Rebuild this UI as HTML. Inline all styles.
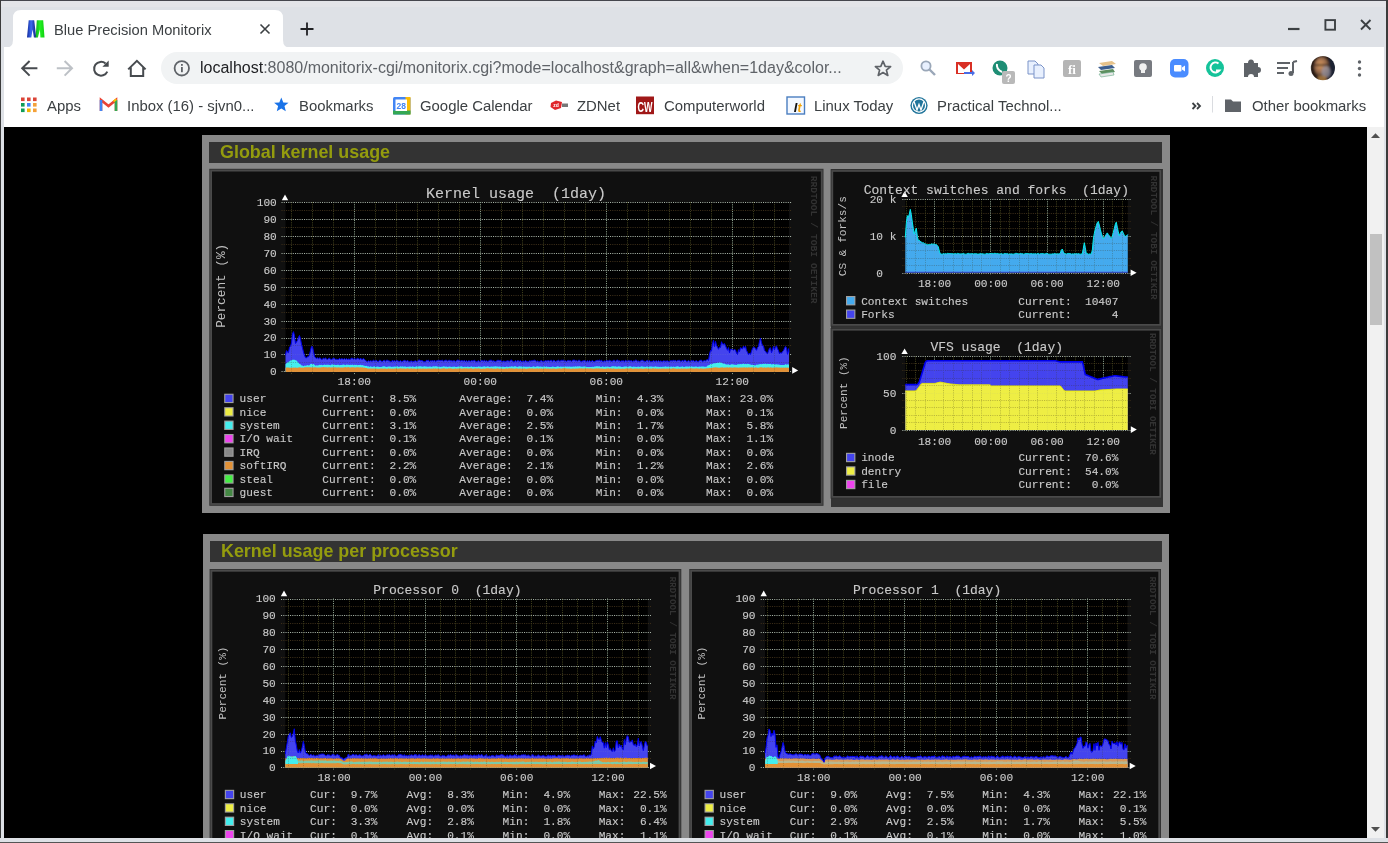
<!DOCTYPE html>
<html><head><meta charset="utf-8"><title>Blue Precision Monitorix</title>
<style>html,body{margin:0;padding:0;width:1388px;height:843px;overflow:hidden;position:relative;background:#dee1e6} svg,div{will-change:transform}</style>
</head><body>
<div style="position:absolute;left:0;top:0;width:1388px;height:843px;background:#dee1e6"></div>
<div style="position:absolute;left:0;top:1px;width:1388px;height:5.5px;background:#e3e4e8"></div>
<div style="position:absolute;left:0;top:0;width:1388px;height:1px;background:#45464d"></div>
<div style="position:absolute;left:0;top:0;width:1px;height:843px;background:#3b3b3b"></div>
<div style="position:absolute;left:1386px;top:0;width:2px;height:843px;background:#3b3b3b"></div>
<div style="position:absolute;left:4px;top:47px;width:1380px;height:80px;background:#ffffff"></div>
<svg style="position:absolute;left:0;top:0" width="300" height="48" viewBox="0 0 300 48">
<path d="M5 48 Q13 48 13 40 L13 18 Q13 10 21 10 L275 10 Q283 10 283 18 L283 40 Q283 48 291 48 Z" fill="#ffffff"/>
</svg>
<svg style="position:absolute;left:0;top:0" width="60" height="48" viewBox="0 0 60 48">
<defs><linearGradient id="mb" x1="0" y1="0" x2="1" y2="0"><stop offset="0" stop-color="#142a9a"/><stop offset="0.45" stop-color="#3a6af0"/><stop offset="1" stop-color="#102080"/></linearGradient>
<linearGradient id="mg" x1="0" y1="0" x2="1" y2="0"><stop offset="0" stop-color="#10b020"/><stop offset="0.5" stop-color="#22f022"/><stop offset="1" stop-color="#10d010"/></linearGradient></defs>
<path d="M28.7 20.2 L34.2 20.2 L36.2 37.5 L33.9 37.5 L32.6 29.5 L31.3 37.5 L27 37.5 Z" fill="url(#mb)"/>
<path d="M36.8 20.2 L43.2 20.2 L44.5 37.5 L40.4 37.5 L39.9 29.5 L37.9 37.5 L35.6 37.5 Z" fill="url(#mg)"/>
</svg>
<div style="position:absolute;left:54px;top:21.8px;font:14.7px 'Liberation Sans',sans-serif;color:#3c4043;white-space:nowrap">Blue Precision Monitorix</div>
<svg style="position:absolute;left:258px;top:22px" width="14" height="14" viewBox="0 0 14 14">
<path d="M2.5 2.5 L11.5 11.5 M11.5 2.5 L2.5 11.5" stroke="#3c4043" stroke-width="1.6"/></svg>
<svg style="position:absolute;left:299px;top:21px" width="16" height="16" viewBox="0 0 16 16">
<path d="M8 1.5 L8 14.5 M1.5 8 L14.5 8" stroke="#202124" stroke-width="1.8"/></svg>
<svg style="position:absolute;left:1280px;top:12px" width="100" height="26" viewBox="0 0 100 26">
<path d="M8 17 L19.5 17" stroke="#3c4043" stroke-width="2.2"/>
<rect x="45.4" y="8.1" width="9.6" height="9.6" fill="none" stroke="#3c4043" stroke-width="1.9"/>
<path d="M81 8 L90.5 17.5 M90.5 8 L81 17.5" stroke="#3c4043" stroke-width="1.9"/>
</svg>
<svg style="position:absolute;left:14px;top:54px" width="140" height="30" viewBox="0 0 140 30">
<g fill="none" stroke-width="2" stroke-linecap="butt">
<path d="M23.4 14.3 L8.5 14.3 M15.6 7 L8.2 14.3 L15.6 21.6" stroke="#474b4f"/>
<path d="M42.8 14.3 L57.7 14.3 M50.6 7 L58 14.3 L50.6 21.6" stroke="#bdc1c6"/>
</g>
<path d="M93.3 17.6 A6.9 6.9 0 1 1 91.6 9.6" fill="none" stroke="#474b4f" stroke-width="2"/>
<path d="M94.7 6.4 L94.7 12.8 L88.4 12.8 Z" fill="#474b4f"/>
<path d="M116.8 13.5 L116.8 22 L129.2 22 L129.2 13.5 M114.2 15.4 L122.9 6.8 L131.6 15.4" fill="none" stroke="#474b4f" stroke-width="2" stroke-linejoin="miter"/>
</svg>
<div style="position:absolute;left:161px;top:52px;width:742px;height:32px;border-radius:16px;background:#f1f3f4"></div>
<svg style="position:absolute;left:172px;top:59px" width="20" height="20" viewBox="0 0 20 20">
<circle cx="9.8" cy="9.3" r="7.2" fill="none" stroke="#5f6368" stroke-width="1.8"/>
<rect x="9" y="8" width="1.8" height="5.2" fill="#5f6368"/><rect x="9" y="5" width="1.8" height="1.8" fill="#5f6368"/>
</svg>
<div style="position:absolute;left:200px;top:58.8px;font:16.0px 'Liberation Sans',sans-serif;color:#5f6368;white-space:nowrap"><span style="color:#202124">localhost</span>:8080/monitorix-cgi/monitorix.cgi?mode=localhost&amp;graph=all&amp;when=1day&amp;color...</div>
<svg style="position:absolute;left:873px;top:59px" width="20" height="20" viewBox="0 0 20 20">
<path d="M10 2.2 L12.2 7.3 L17.6 7.6 L13.4 11.1 L14.8 16.4 L10 13.5 L5.2 16.4 L6.6 11.1 L2.4 7.6 L7.8 7.3 Z" fill="none" stroke="#5f6368" stroke-width="1.7" stroke-linejoin="round"/>
</svg>
<svg style="position:absolute;left:910px;top:52px" width="470" height="34" viewBox="910 52 470 34">
<!-- search -->
<circle cx="926" cy="66" r="4.6" fill="#e8f0fe" stroke="#9aa7b8" stroke-width="1.8"/>
<path d="M929.5 69.5 L935 75" stroke="#9aa7b8" stroke-width="2.4"/>
<!-- gmail red -->
<rect x="956" y="62" width="16" height="12" fill="#d93025"/>
<path d="M958 64 L964 69.5 L970 64 L970 73 L958 73 Z" fill="#fff"/>
<path d="M964 72 L972 72 L972 70 L975 73 L972 76 L972 74 L964 74 Z" fill="#4a6de5"/>
<!-- phone green -->
<circle cx="1000" cy="68" r="7.5" fill="#1e8e75"/>
<path d="M997 64 Q996 69 1002 72" stroke="#fff" stroke-width="2" fill="none"/>
<rect x="1002" y="71" width="13" height="13" rx="2" fill="#b9b9b9"/>
<text x="1008.5" y="81.5" font-family="Liberation Sans" font-size="10" font-weight="bold" fill="#fff" text-anchor="middle">?</text>
<!-- copy -->
<path d="M1028 61 L1035 61 L1038 64 L1038 74 L1028 74 Z" fill="#e8f0fe" stroke="#7b93c8" stroke-width="1"/>
<path d="M1034 65 L1041 65 L1044 68 L1044 78 L1034 78 Z" fill="#e8f0fe" stroke="#7b93c8" stroke-width="1"/>
<!-- fi gray -->
<rect x="1063" y="60" width="18" height="17" rx="2" fill="#b5b5b5"/>
<text x="1072" y="73.5" font-family="Liberation Serif" font-size="13" font-weight="bold" fill="#fff" text-anchor="middle">fi</text>
<!-- books -->
<path d="M1099 63 L1112 61 L1116 64 L1103 66 Z" fill="#e6c28a"/>
<path d="M1098 67 L1112 65 L1115 68 L1101 70 Z" fill="#3d5f8f"/>
<path d="M1099 71 L1113 69 L1115 72 L1102 74 Z" fill="#5d8f5f"/>
<path d="M1099 74 L1113 72 L1114 75 L1101 77 Z" fill="#e8e8e8" stroke="#6a8" stroke-width="0.6"/>
<!-- keep -->
<rect x="1134" y="60" width="18" height="17" rx="2" fill="#777a80"/>
<circle cx="1143" cy="67" r="3.8" fill="#f1f1f1"/>
<rect x="1141" y="70" width="4" height="3" fill="#f1f1f1"/>
<!-- zoom -->
<rect x="1170" y="59" width="18.5" height="18.5" rx="5" fill="#4a8cff"/>
<rect x="1174" y="65" width="7.5" height="6.5" rx="1" fill="#fff"/>
<path d="M1182 67.5 L1185 65.5 L1185 71.5 L1182 69.5 Z" fill="#fff"/>
<!-- grammarly -->
<circle cx="1215" cy="68" r="9" fill="#15c39a"/>
<path d="M1218.5 63.5 A5 5 0 1 0 1219.5 70.5 L1216 70.5" fill="none" stroke="#fff" stroke-width="2"/>
<!-- puzzle -->
<path d="M1244 63 L1248 63 Q1248 59.5 1251 59.5 Q1254 59.5 1254 63 L1258 63 L1258 67 Q1261 67 1261 70 Q1261 73 1258 73 L1258 77 L1254 77 Q1254 74 1251 74 Q1248 74 1248 77 L1244 77 Z" fill="#5f6368"/>
<!-- queue -->
<path d="M1277 63 L1290 63 M1277 68 L1288 68 M1277 73 L1284 73" stroke="#5f6368" stroke-width="2"/>
<path d="M1293 62 L1297 61 M1293 62 L1293 73" stroke="#5f6368" stroke-width="2"/>
<circle cx="1291" cy="73.5" r="2.5" fill="#5f6368"/>
<!-- avatar -->
<defs><radialGradient id="av" cx="0.42" cy="0.4" r="0.55"><stop offset="0" stop-color="#d8985a"/><stop offset="0.6" stop-color="#a07050"/><stop offset="1" stop-color="#60452f"/></radialGradient>
<clipPath id="avc"><circle cx="1322.9" cy="68.1" r="12.1"/></clipPath><filter id="avb" x="-0.2" y="-0.2" width="1.4" height="1.4"><feGaussianBlur stdDeviation="0.9"/></filter></defs>
<g clip-path="url(#avc)"><g filter="url(#avb)">
<rect x="1310" y="55" width="26" height="26" fill="#2a1c18"/>
<rect x="1329" y="55" width="8" height="26" fill="#1c2030"/>
<ellipse cx="1321.8" cy="67" rx="7.6" ry="10" fill="url(#av)"/>
<ellipse cx="1326" cy="72" rx="4.5" ry="6" fill="#9a98a8" opacity="0.7"/>
<path d="M1315 65.3 L1329 65" stroke="#3a2a22" stroke-width="1.4"/>
<rect x="1318" y="76" width="8" height="6" fill="#b08040" opacity="0.8"/>
</g></g>
<!-- menu dots -->
<circle cx="1359.5" cy="62" r="1.7" fill="#5f6368"/><circle cx="1359.5" cy="68.5" r="1.7" fill="#5f6368"/><circle cx="1359.5" cy="75" r="1.7" fill="#5f6368"/>
</svg>
<div style="position:absolute;left:46.5px;top:98px;font:14.9px 'Liberation Sans',sans-serif;color:#3c4043;white-space:nowrap">Apps</div>
<div style="position:absolute;left:126.6px;top:98px;font:14.9px 'Liberation Sans',sans-serif;color:#3c4043;white-space:nowrap">Inbox (16) - sjvn0...</div>
<div style="position:absolute;left:299.3px;top:98px;font:14.9px 'Liberation Sans',sans-serif;color:#3c4043;white-space:nowrap">Bookmarks</div>
<div style="position:absolute;left:419.9px;top:98px;font:14.9px 'Liberation Sans',sans-serif;color:#3c4043;white-space:nowrap">Google Calendar</div>
<div style="position:absolute;left:576.8px;top:98px;font:14.9px 'Liberation Sans',sans-serif;color:#3c4043;white-space:nowrap">ZDNet</div>
<div style="position:absolute;left:663.7px;top:98px;font:14.9px 'Liberation Sans',sans-serif;color:#3c4043;white-space:nowrap">Computerworld</div>
<div style="position:absolute;left:813.9px;top:98px;font:14.9px 'Liberation Sans',sans-serif;color:#3c4043;white-space:nowrap">Linux Today</div>
<div style="position:absolute;left:937.3px;top:98px;font:14.9px 'Liberation Sans',sans-serif;color:#3c4043;white-space:nowrap">Practical Technol...</div>
<div style="position:absolute;left:1251.7px;top:98px;font:14.9px 'Liberation Sans',sans-serif;color:#3c4043;white-space:nowrap">Other bookmarks</div>
<svg style="position:absolute;left:0;top:88px" width="1388" height="38" viewBox="0 88 1388 38">
<!-- apps grid -->
<g>
<rect x="21" y="97.5" width="3.6" height="3.6" fill="#db4437"/><rect x="27" y="97.5" width="3.6" height="3.6" fill="#db4437"/><rect x="33" y="97.5" width="3.6" height="3.6" fill="#db4437"/>
<rect x="21" y="103" width="3.6" height="3.6" fill="#0f9d58"/><rect x="27" y="103" width="3.6" height="3.6" fill="#4285f4"/><rect x="33" y="103" width="3.6" height="3.6" fill="#f4a13a"/>
<rect x="21" y="108.5" width="3.6" height="3.6" fill="#0f9d58"/><rect x="27" y="108.5" width="3.6" height="3.6" fill="#f4b400"/><rect x="33" y="108.5" width="3.6" height="3.6" fill="#f4a13a"/>
</g>
<!-- gmail M -->
<path d="M101 111 L101 100 L108.5 106 L116 100 L116 111" fill="none" stroke="#ea4335" stroke-width="2.6" stroke-linejoin="miter"/>
<path d="M101 100 L101 111" stroke="#4285f4" stroke-width="2.6"/><path d="M116 100 L116 111" stroke="#34a853" stroke-width="2.6"/>
<path d="M113.5 101.5 L116.3 99.2" stroke="#fbbc04" stroke-width="2"/>
<!-- star -->
<path d="M281.3 97.5 L283.3 102.4 L288.5 102.7 L284.5 106 L285.8 111.2 L281.3 108.4 L276.8 111.2 L278.1 106 L274.1 102.7 L279.3 102.4 Z" fill="#1a73e8"/>
<!-- calendar -->
<rect x="393" y="97" width="17.5" height="17.5" rx="1.5" fill="#4285f4"/>
<rect x="405.5" y="97" width="5" height="17.5" fill="#fbbc04"/>
<rect x="393" y="110.5" width="17.5" height="4" fill="#34a853"/>
<rect x="395.5" y="99.5" width="11.5" height="11.5" fill="#fff"/>
<text x="401.3" y="109.3" font-family="Liberation Sans" font-size="8.5" font-weight="bold" fill="#4285f4" text-anchor="middle">28</text>
<!-- zdnet -->
<path d="M551 103 L556 100.5 L562 102 L561 108 L555 110 L550.5 107 Z" fill="#e0262b"/>
<text x="556" y="106.8" font-family="Liberation Sans" font-size="5" font-weight="bold" fill="#fff" text-anchor="middle">zd</text>
<path d="M562 103.5 L568 103.5 L568 107 L562 107 Z" fill="#777"/>
<!-- CW -->
<rect x="636" y="96.5" width="18" height="17.7" fill="#a01818"/>
<text x="645" y="111.8" font-family="Liberation Sans" font-size="14.5" font-weight="bold" fill="#fff" text-anchor="middle" textLength="15" lengthAdjust="spacingAndGlyphs">CW</text>
<!-- linux today -->
<rect x="787" y="97" width="17.5" height="17" fill="#f3f8ff" stroke="#4a7ec0" stroke-width="1.4"/>
<text x="795.5" y="111.5" font-family="Liberation Sans" font-size="13" font-weight="bold" font-style="italic" fill="#111" text-anchor="middle">I</text>
<text x="799.5" y="111.5" font-family="Liberation Sans" font-size="12" font-weight="bold" font-style="italic" fill="#f5a300" text-anchor="middle">t</text>
<!-- wordpress -->
<circle cx="919" cy="105.5" r="8.6" fill="#21759b"/>
<circle cx="919" cy="105.5" r="6.6" fill="none" stroke="#fff" stroke-width="1.2"/>
<path d="M914 101.5 L917 110 L919 104.5 L921 110 L924 101.5" fill="none" stroke="#fff" stroke-width="1.3"/>
<!-- chevrons -->
<path d="M1192.5 103 L1195.5 106 L1192.5 109 M1197 103 L1200 106 L1197 109" fill="none" stroke="#3c4043" stroke-width="1.8"/>
<rect x="1212" y="96" width="1" height="16.5" fill="#dadce0"/>
<!-- folder -->
<path d="M1225 99.5 L1231 99.5 L1233 101.5 L1241 101.5 L1241 112 L1225 112 Z" fill="#5f6368"/>
</svg>
<div style="position:absolute;left:4px;top:127px;width:1363px;height:711px;background:#000"></div>
<div style="position:absolute;left:1367px;top:127px;width:17px;height:711px;background:#f1f1f1"></div>
<div style="position:absolute;left:1369.5px;top:234px;width:11.5px;height:91px;background:#c1c1c1"></div>
<svg style="position:absolute;left:1367px;top:127px" width="17" height="711" viewBox="0 0 17 711"><path d="M4 11 L8.5 6.3 L13 11Z" fill="#505050"/><path d="M4 700 L8.5 704.8 L13 700Z" fill="#505050"/></svg>
<div style="position:absolute;left:202px;top:135px;width:967.5px;height:378px;background:#888888"></div>
<div style="position:absolute;left:209px;top:142px;width:953px;height:21px;background:#333333"></div>
<div style="position:absolute;left:830.5px;top:168.5px;width:331.5px;height:337.5px;background:#333333"></div>
<div style="position:absolute;left:219.5px;top:141.5px;font:bold 17.9px 'Liberation Sans',sans-serif;color:#949c0e;white-space:nowrap;line-height:21px">Global kernel usage</div>
<div style="position:absolute;left:203px;top:534px;width:965.5px;height:304px;background:#888888"></div>
<div style="position:absolute;left:209.7px;top:541px;width:951.7px;height:20.7px;background:#333333"></div>
<div style="position:absolute;left:221px;top:540.5px;font:bold 17.9px 'Liberation Sans',sans-serif;color:#949c0e;white-space:nowrap;line-height:21px">Kernel usage per processor</div>
<svg width="1388" height="843" viewBox="0 0 1388 843" font-family="'Liberation Mono',monospace" style="position:absolute;left:0;top:0;white-space:pre">
<defs><clipPath id="ck"><rect x="0" y="127" width="1367" height="711"/></clipPath></defs>
<defs><clipPath id="ak"><path d="M285.50 371.90 L285.50 355.08 L286.50 350.58 L287.50 352.11 L288.50 352.64 L289.50 347.02 L290.50 346.14 L291.50 342.97 L292.50 334.02 L293.50 331.63 L294.50 335.91 L295.50 343.48 L296.50 341.90 L297.50 340.33 L298.50 337.31 L299.50 335.43 L300.50 339.02 L301.50 344.20 L302.50 348.14 L303.50 352.04 L304.50 355.43 L305.50 357.61 L306.50 357.91 L307.50 356.69 L308.50 356.70 L309.50 354.71 L310.50 350.42 L311.50 346.58 L312.50 346.81 L313.50 351.39 L314.50 356.43 L315.50 357.66 L316.50 358.41 L317.50 357.79 L318.50 358.71 L319.50 357.88 L320.50 358.13 L321.50 359.57 L322.50 359.22 L323.50 358.04 L324.50 358.79 L325.50 357.93 L326.50 358.92 L327.50 359.47 L328.50 358.53 L329.50 358.28 L330.50 359.15 L331.50 359.46 L332.50 359.05 L333.50 357.99 L334.50 358.34 L335.50 359.42 L336.50 359.21 L337.50 359.46 L338.50 359.53 L339.50 358.29 L340.50 359.34 L341.50 358.70 L342.50 358.89 L343.50 359.33 L344.50 358.42 L345.50 359.44 L346.50 358.58 L347.50 359.47 L348.50 358.96 L349.50 359.32 L350.50 359.22 L351.50 358.04 L352.50 358.33 L353.50 359.18 L354.50 358.20 L355.50 359.34 L356.50 359.04 L357.50 358.26 L358.50 358.63 L359.50 359.55 L360.50 358.05 L361.50 359.36 L362.50 359.29 L363.50 358.42 L364.50 359.51 L365.50 360.25 L366.50 361.30 L367.50 361.61 L368.50 360.78 L369.50 361.35 L370.50 360.74 L371.50 361.13 L372.50 360.99 L373.50 360.14 L374.50 360.94 L375.50 360.79 L376.50 360.30 L377.50 361.45 L378.50 361.50 L379.50 360.22 L380.50 360.38 L381.50 361.34 L382.50 361.44 L383.50 360.51 L384.50 360.17 L385.50 361.43 L386.50 360.15 L387.50 360.27 L388.50 360.74 L389.50 361.05 L390.50 361.58 L391.50 361.69 L392.50 360.13 L393.50 361.36 L394.50 360.57 L395.50 361.33 L396.50 360.37 L397.50 360.75 L398.50 361.26 L399.50 361.46 L400.50 360.54 L401.50 361.64 L402.50 361.37 L403.50 360.81 L404.50 360.32 L405.50 360.72 L406.50 361.29 L407.50 360.21 L408.50 361.42 L409.50 361.73 L410.50 361.31 L411.50 361.01 L412.50 361.66 L413.50 361.46 L414.50 361.14 L415.50 360.79 L416.50 361.54 L417.50 361.15 L418.50 360.25 L419.50 360.10 L420.50 360.65 L421.50 360.59 L422.50 360.77 L423.50 361.52 L424.50 361.70 L425.50 361.73 L426.50 360.22 L427.50 360.58 L428.50 360.13 L429.50 361.72 L430.50 360.68 L431.50 360.95 L432.50 360.53 L433.50 361.22 L434.50 360.07 L435.50 361.63 L436.50 360.84 L437.50 360.51 L438.50 360.24 L439.50 360.51 L440.50 360.57 L441.50 360.42 L442.50 360.21 L443.50 361.17 L444.50 360.60 L445.50 360.24 L446.50 360.29 L447.50 361.06 L448.50 360.42 L449.50 360.30 L450.50 360.79 L451.50 360.70 L452.50 361.11 L453.50 360.78 L454.50 360.73 L455.50 361.62 L456.50 360.68 L457.50 360.08 L458.50 360.27 L459.50 360.53 L460.50 361.10 L461.50 360.52 L462.50 360.78 L463.50 361.02 L464.50 360.34 L465.50 361.62 L466.50 360.49 L467.50 361.71 L468.50 360.74 L469.50 360.95 L470.50 361.37 L471.50 360.58 L472.50 360.92 L473.50 360.72 L474.50 360.20 L475.50 361.33 L476.50 361.74 L477.50 361.25 L478.50 360.61 L479.50 361.42 L480.50 361.47 L481.50 360.23 L482.50 360.64 L483.50 361.01 L484.50 360.25 L485.50 361.21 L486.50 360.63 L487.50 361.42 L488.50 361.03 L489.50 360.40 L490.50 360.21 L491.50 360.27 L492.50 361.11 L493.50 360.77 L494.50 361.23 L495.50 361.53 L496.50 360.92 L497.50 360.35 L498.50 360.33 L499.50 360.56 L500.50 360.15 L501.50 361.29 L502.50 361.47 L503.50 361.00 L504.50 361.29 L505.50 361.40 L506.50 361.06 L507.50 360.70 L508.50 360.93 L509.50 361.23 L510.50 360.34 L511.50 360.10 L512.50 361.00 L513.50 361.63 L514.50 361.71 L515.50 360.28 L516.50 361.69 L517.50 360.56 L518.50 360.80 L519.50 361.24 L520.50 360.42 L521.50 361.73 L522.50 361.53 L523.50 360.99 L524.50 361.72 L525.50 360.36 L526.50 361.36 L527.50 361.52 L528.50 361.68 L529.50 360.70 L530.50 361.01 L531.50 360.70 L532.50 360.65 L533.50 360.40 L534.50 360.14 L535.50 360.60 L536.50 361.42 L537.50 360.96 L538.50 361.46 L539.50 361.74 L540.50 360.96 L541.50 360.55 L542.50 361.46 L543.50 361.30 L544.50 361.18 L545.50 360.58 L546.50 360.88 L547.50 360.72 L548.50 360.48 L549.50 361.09 L550.50 360.42 L551.50 360.23 L552.50 361.61 L553.50 360.18 L554.50 360.54 L555.50 361.54 L556.50 360.99 L557.50 360.70 L558.50 360.22 L559.50 361.12 L560.50 360.80 L561.50 360.27 L562.50 360.41 L563.50 360.16 L564.50 360.98 L565.50 360.66 L566.50 361.41 L567.50 360.54 L568.50 360.38 L569.50 360.68 L570.50 360.55 L571.50 361.40 L572.50 360.24 L573.50 360.10 L574.50 360.11 L575.50 360.85 L576.50 360.42 L577.50 361.22 L578.50 360.22 L579.50 360.31 L580.50 361.17 L581.50 361.62 L582.50 361.01 L583.50 360.83 L584.50 360.46 L585.50 360.94 L586.50 361.71 L587.50 360.39 L588.50 361.65 L589.50 360.41 L590.50 361.47 L591.50 361.19 L592.50 360.43 L593.50 361.52 L594.50 361.51 L595.50 360.89 L596.50 360.54 L597.50 360.34 L598.50 360.59 L599.50 360.16 L600.50 360.93 L601.50 360.16 L602.50 361.61 L603.50 361.39 L604.50 360.87 L605.50 361.27 L606.50 360.53 L607.50 360.68 L608.50 360.88 L609.50 360.33 L610.50 360.81 L611.50 361.23 L612.50 361.12 L613.50 360.33 L614.50 360.24 L615.50 361.41 L616.50 360.32 L617.50 360.12 L618.50 360.87 L619.50 360.79 L620.50 361.42 L621.50 360.85 L622.50 360.91 L623.50 360.74 L624.50 361.71 L625.50 360.12 L626.50 360.89 L627.50 361.08 L628.50 360.41 L629.50 360.81 L630.50 360.93 L631.50 360.59 L632.50 361.65 L633.50 360.85 L634.50 361.06 L635.50 360.14 L636.50 360.20 L637.50 361.31 L638.50 360.96 L639.50 361.55 L640.50 361.03 L641.50 360.38 L642.50 360.24 L643.50 360.95 L644.50 361.22 L645.50 361.44 L646.50 360.72 L647.50 360.20 L648.50 361.54 L649.50 360.44 L650.50 361.72 L651.50 361.43 L652.50 361.38 L653.50 360.60 L654.50 361.22 L655.50 361.16 L656.50 360.71 L657.50 361.58 L658.50 360.52 L659.50 361.55 L660.50 360.90 L661.50 361.34 L662.50 361.43 L663.50 360.86 L664.50 361.02 L665.50 361.13 L666.50 361.06 L667.50 360.87 L668.50 361.49 L669.50 361.41 L670.50 360.69 L671.50 360.68 L672.50 360.86 L673.50 360.32 L674.50 360.73 L675.50 360.31 L676.50 361.37 L677.50 360.51 L678.50 360.39 L679.50 360.23 L680.50 361.23 L681.50 361.23 L682.50 360.20 L683.50 361.39 L684.50 360.07 L685.50 360.26 L686.50 361.53 L687.50 361.36 L688.50 360.53 L689.50 361.32 L690.50 361.60 L691.50 360.35 L692.50 361.05 L693.50 360.43 L694.50 361.55 L695.50 361.08 L696.50 360.60 L697.50 361.73 L698.50 361.42 L699.50 360.61 L700.50 360.22 L701.50 360.12 L702.50 361.56 L703.50 360.91 L704.50 360.48 L705.50 360.91 L706.50 359.97 L707.50 359.54 L708.50 360.56 L709.50 354.34 L710.50 350.45 L711.50 350.97 L712.50 343.77 L713.50 340.31 L714.50 346.76 L715.50 341.27 L716.50 345.32 L717.50 347.15 L718.50 349.30 L719.50 347.09 L720.50 347.38 L721.50 341.73 L722.50 344.11 L723.50 344.18 L724.50 343.62 L725.50 345.71 L726.50 348.19 L727.50 350.34 L728.50 347.60 L729.50 352.76 L730.50 349.25 L731.50 349.23 L732.50 349.53 L733.50 350.19 L734.50 349.48 L735.50 350.03 L736.50 353.05 L737.50 354.47 L738.50 349.61 L739.50 351.81 L740.50 347.66 L741.50 348.36 L742.50 348.89 L743.50 346.06 L744.50 348.19 L745.50 346.26 L746.50 350.55 L747.50 352.35 L748.50 354.79 L749.50 353.06 L750.50 354.49 L751.50 351.24 L752.50 348.45 L753.50 347.08 L754.50 347.29 L755.50 348.76 L756.50 350.32 L757.50 347.45 L758.50 346.43 L759.50 341.37 L760.50 338.27 L761.50 342.79 L762.50 345.71 L763.50 346.11 L764.50 350.43 L765.50 351.17 L766.50 352.90 L767.50 353.68 L768.50 350.91 L769.50 348.17 L770.50 347.76 L771.50 352.77 L772.50 349.91 L773.50 346.31 L774.50 349.77 L775.50 346.83 L776.50 345.92 L777.50 348.79 L778.50 350.50 L779.50 353.73 L780.50 352.68 L781.50 353.21 L782.50 351.56 L783.50 350.67 L784.50 348.32 L785.50 346.39 L786.50 348.06 L787.50 354.30 L788.50 348.63 L789.00 352.46 L789.00 371.90Z"/></clipPath></defs>
<g clip-path="url(#ck)">
<rect x="209.3" y="168.8" width="614.2" height="337.0" fill="#303030"/>
<rect x="210.20000000000002" y="169.70000000000002" width="612.4000000000001" height="335.2" fill="#4a4a4a"/>
<rect x="212.0" y="171.5" width="608.8000000000001" height="331.6" fill="#101010"/>
<rect x="285.5" y="202.0" width="503.5" height="170.0" fill="#000"/>
<path d="M281.50 362.50H791.50" stroke="#3a2c18" stroke-width="1" stroke-dasharray="1.1 1.15" opacity="1"/>
<path d="M281.50 345.50H791.50" stroke="#3a2c18" stroke-width="1" stroke-dasharray="1.1 1.15" opacity="1"/>
<path d="M281.50 328.50H791.50" stroke="#3a2c18" stroke-width="1" stroke-dasharray="1.1 1.15" opacity="1"/>
<path d="M281.50 312.50H791.50" stroke="#3a2c18" stroke-width="1" stroke-dasharray="1.1 1.15" opacity="1"/>
<path d="M281.50 295.50H791.50" stroke="#3a2c18" stroke-width="1" stroke-dasharray="1.1 1.15" opacity="1"/>
<path d="M281.50 278.50H791.50" stroke="#3a2c18" stroke-width="1" stroke-dasharray="1.1 1.15" opacity="1"/>
<path d="M281.50 261.50H791.50" stroke="#3a2c18" stroke-width="1" stroke-dasharray="1.1 1.15" opacity="1"/>
<path d="M281.50 244.50H791.50" stroke="#3a2c18" stroke-width="1" stroke-dasharray="1.1 1.15" opacity="1"/>
<path d="M281.50 227.50H791.50" stroke="#3a2c18" stroke-width="1" stroke-dasharray="1.1 1.15" opacity="1"/>
<path d="M281.50 210.50H791.50" stroke="#3a2c18" stroke-width="1" stroke-dasharray="1.1 1.15" opacity="1"/>
<path d="M291.50 202.00V375.00" stroke="#3e3e1c" stroke-width="1" stroke-dasharray="1.1 1.15" opacity="1"/>
<path d="M312.50 202.00V375.00" stroke="#3e3e1c" stroke-width="1" stroke-dasharray="1.1 1.15" opacity="1"/>
<path d="M333.50 202.00V375.00" stroke="#3e3e1c" stroke-width="1" stroke-dasharray="1.1 1.15" opacity="1"/>
<path d="M375.50 202.00V375.00" stroke="#3e3e1c" stroke-width="1" stroke-dasharray="1.1 1.15" opacity="1"/>
<path d="M396.50 202.00V375.00" stroke="#3e3e1c" stroke-width="1" stroke-dasharray="1.1 1.15" opacity="1"/>
<path d="M417.50 202.00V375.00" stroke="#3e3e1c" stroke-width="1" stroke-dasharray="1.1 1.15" opacity="1"/>
<path d="M438.50 202.00V375.00" stroke="#3e3e1c" stroke-width="1" stroke-dasharray="1.1 1.15" opacity="1"/>
<path d="M459.50 202.00V375.00" stroke="#3e3e1c" stroke-width="1" stroke-dasharray="1.1 1.15" opacity="1"/>
<path d="M501.50 202.00V375.00" stroke="#3e3e1c" stroke-width="1" stroke-dasharray="1.1 1.15" opacity="1"/>
<path d="M522.50 202.00V375.00" stroke="#3e3e1c" stroke-width="1" stroke-dasharray="1.1 1.15" opacity="1"/>
<path d="M543.50 202.00V375.00" stroke="#3e3e1c" stroke-width="1" stroke-dasharray="1.1 1.15" opacity="1"/>
<path d="M564.50 202.00V375.00" stroke="#3e3e1c" stroke-width="1" stroke-dasharray="1.1 1.15" opacity="1"/>
<path d="M585.50 202.00V375.00" stroke="#3e3e1c" stroke-width="1" stroke-dasharray="1.1 1.15" opacity="1"/>
<path d="M627.50 202.00V375.00" stroke="#3e3e1c" stroke-width="1" stroke-dasharray="1.1 1.15" opacity="1"/>
<path d="M648.50 202.00V375.00" stroke="#3e3e1c" stroke-width="1" stroke-dasharray="1.1 1.15" opacity="1"/>
<path d="M669.50 202.00V375.00" stroke="#3e3e1c" stroke-width="1" stroke-dasharray="1.1 1.15" opacity="1"/>
<path d="M690.50 202.00V375.00" stroke="#3e3e1c" stroke-width="1" stroke-dasharray="1.1 1.15" opacity="1"/>
<path d="M711.50 202.00V375.00" stroke="#3e3e1c" stroke-width="1" stroke-dasharray="1.1 1.15" opacity="1"/>
<path d="M753.50 202.00V375.00" stroke="#3e3e1c" stroke-width="1" stroke-dasharray="1.1 1.15" opacity="1"/>
<path d="M774.50 202.00V375.00" stroke="#3e3e1c" stroke-width="1" stroke-dasharray="1.1 1.15" opacity="1"/>
<path d="M281.50 371.50H791.50" stroke="#a4b0a4" stroke-width="1" stroke-dasharray="1.1 1.15" opacity="1"/>
<path d="M281.50 354.50H791.50" stroke="#a4b0a4" stroke-width="1" stroke-dasharray="1.1 1.15" opacity="1"/>
<path d="M281.50 338.50H791.50" stroke="#a4b0a4" stroke-width="1" stroke-dasharray="1.1 1.15" opacity="1"/>
<path d="M281.50 321.50H791.50" stroke="#a4b0a4" stroke-width="1" stroke-dasharray="1.1 1.15" opacity="1"/>
<path d="M281.50 304.50H791.50" stroke="#a4b0a4" stroke-width="1" stroke-dasharray="1.1 1.15" opacity="1"/>
<path d="M281.50 287.50H791.50" stroke="#a4b0a4" stroke-width="1" stroke-dasharray="1.1 1.15" opacity="1"/>
<path d="M281.50 270.50H791.50" stroke="#a4b0a4" stroke-width="1" stroke-dasharray="1.1 1.15" opacity="1"/>
<path d="M281.50 253.50H791.50" stroke="#a4b0a4" stroke-width="1" stroke-dasharray="1.1 1.15" opacity="1"/>
<path d="M281.50 236.50H791.50" stroke="#a4b0a4" stroke-width="1" stroke-dasharray="1.1 1.15" opacity="1"/>
<path d="M281.50 219.50H791.50" stroke="#a4b0a4" stroke-width="1" stroke-dasharray="1.1 1.15" opacity="1"/>
<path d="M281.50 202.50H791.50" stroke="#a4b0a4" stroke-width="1" stroke-dasharray="1.1 1.15" opacity="1"/>
<path d="M354.50 202.00V375.00" stroke="#8a9e8a" stroke-width="1" stroke-dasharray="1.1 1.15" opacity="1"/>
<path d="M480.50 202.00V375.00" stroke="#8a9e8a" stroke-width="1" stroke-dasharray="1.1 1.15" opacity="1"/>
<path d="M606.50 202.00V375.00" stroke="#8a9e8a" stroke-width="1" stroke-dasharray="1.1 1.15" opacity="1"/>
<path d="M732.50 202.00V375.00" stroke="#8a9e8a" stroke-width="1" stroke-dasharray="1.1 1.15" opacity="1"/>
<path d="M285.50 371.90 L285.50 355.08 L286.50 350.58 L287.50 352.11 L288.50 352.64 L289.50 347.02 L290.50 346.14 L291.50 342.97 L292.50 334.02 L293.50 331.63 L294.50 335.91 L295.50 343.48 L296.50 341.90 L297.50 340.33 L298.50 337.31 L299.50 335.43 L300.50 339.02 L301.50 344.20 L302.50 348.14 L303.50 352.04 L304.50 355.43 L305.50 357.61 L306.50 357.91 L307.50 356.69 L308.50 356.70 L309.50 354.71 L310.50 350.42 L311.50 346.58 L312.50 346.81 L313.50 351.39 L314.50 356.43 L315.50 357.66 L316.50 358.41 L317.50 357.79 L318.50 358.71 L319.50 357.88 L320.50 358.13 L321.50 359.57 L322.50 359.22 L323.50 358.04 L324.50 358.79 L325.50 357.93 L326.50 358.92 L327.50 359.47 L328.50 358.53 L329.50 358.28 L330.50 359.15 L331.50 359.46 L332.50 359.05 L333.50 357.99 L334.50 358.34 L335.50 359.42 L336.50 359.21 L337.50 359.46 L338.50 359.53 L339.50 358.29 L340.50 359.34 L341.50 358.70 L342.50 358.89 L343.50 359.33 L344.50 358.42 L345.50 359.44 L346.50 358.58 L347.50 359.47 L348.50 358.96 L349.50 359.32 L350.50 359.22 L351.50 358.04 L352.50 358.33 L353.50 359.18 L354.50 358.20 L355.50 359.34 L356.50 359.04 L357.50 358.26 L358.50 358.63 L359.50 359.55 L360.50 358.05 L361.50 359.36 L362.50 359.29 L363.50 358.42 L364.50 359.51 L365.50 360.25 L366.50 361.30 L367.50 361.61 L368.50 360.78 L369.50 361.35 L370.50 360.74 L371.50 361.13 L372.50 360.99 L373.50 360.14 L374.50 360.94 L375.50 360.79 L376.50 360.30 L377.50 361.45 L378.50 361.50 L379.50 360.22 L380.50 360.38 L381.50 361.34 L382.50 361.44 L383.50 360.51 L384.50 360.17 L385.50 361.43 L386.50 360.15 L387.50 360.27 L388.50 360.74 L389.50 361.05 L390.50 361.58 L391.50 361.69 L392.50 360.13 L393.50 361.36 L394.50 360.57 L395.50 361.33 L396.50 360.37 L397.50 360.75 L398.50 361.26 L399.50 361.46 L400.50 360.54 L401.50 361.64 L402.50 361.37 L403.50 360.81 L404.50 360.32 L405.50 360.72 L406.50 361.29 L407.50 360.21 L408.50 361.42 L409.50 361.73 L410.50 361.31 L411.50 361.01 L412.50 361.66 L413.50 361.46 L414.50 361.14 L415.50 360.79 L416.50 361.54 L417.50 361.15 L418.50 360.25 L419.50 360.10 L420.50 360.65 L421.50 360.59 L422.50 360.77 L423.50 361.52 L424.50 361.70 L425.50 361.73 L426.50 360.22 L427.50 360.58 L428.50 360.13 L429.50 361.72 L430.50 360.68 L431.50 360.95 L432.50 360.53 L433.50 361.22 L434.50 360.07 L435.50 361.63 L436.50 360.84 L437.50 360.51 L438.50 360.24 L439.50 360.51 L440.50 360.57 L441.50 360.42 L442.50 360.21 L443.50 361.17 L444.50 360.60 L445.50 360.24 L446.50 360.29 L447.50 361.06 L448.50 360.42 L449.50 360.30 L450.50 360.79 L451.50 360.70 L452.50 361.11 L453.50 360.78 L454.50 360.73 L455.50 361.62 L456.50 360.68 L457.50 360.08 L458.50 360.27 L459.50 360.53 L460.50 361.10 L461.50 360.52 L462.50 360.78 L463.50 361.02 L464.50 360.34 L465.50 361.62 L466.50 360.49 L467.50 361.71 L468.50 360.74 L469.50 360.95 L470.50 361.37 L471.50 360.58 L472.50 360.92 L473.50 360.72 L474.50 360.20 L475.50 361.33 L476.50 361.74 L477.50 361.25 L478.50 360.61 L479.50 361.42 L480.50 361.47 L481.50 360.23 L482.50 360.64 L483.50 361.01 L484.50 360.25 L485.50 361.21 L486.50 360.63 L487.50 361.42 L488.50 361.03 L489.50 360.40 L490.50 360.21 L491.50 360.27 L492.50 361.11 L493.50 360.77 L494.50 361.23 L495.50 361.53 L496.50 360.92 L497.50 360.35 L498.50 360.33 L499.50 360.56 L500.50 360.15 L501.50 361.29 L502.50 361.47 L503.50 361.00 L504.50 361.29 L505.50 361.40 L506.50 361.06 L507.50 360.70 L508.50 360.93 L509.50 361.23 L510.50 360.34 L511.50 360.10 L512.50 361.00 L513.50 361.63 L514.50 361.71 L515.50 360.28 L516.50 361.69 L517.50 360.56 L518.50 360.80 L519.50 361.24 L520.50 360.42 L521.50 361.73 L522.50 361.53 L523.50 360.99 L524.50 361.72 L525.50 360.36 L526.50 361.36 L527.50 361.52 L528.50 361.68 L529.50 360.70 L530.50 361.01 L531.50 360.70 L532.50 360.65 L533.50 360.40 L534.50 360.14 L535.50 360.60 L536.50 361.42 L537.50 360.96 L538.50 361.46 L539.50 361.74 L540.50 360.96 L541.50 360.55 L542.50 361.46 L543.50 361.30 L544.50 361.18 L545.50 360.58 L546.50 360.88 L547.50 360.72 L548.50 360.48 L549.50 361.09 L550.50 360.42 L551.50 360.23 L552.50 361.61 L553.50 360.18 L554.50 360.54 L555.50 361.54 L556.50 360.99 L557.50 360.70 L558.50 360.22 L559.50 361.12 L560.50 360.80 L561.50 360.27 L562.50 360.41 L563.50 360.16 L564.50 360.98 L565.50 360.66 L566.50 361.41 L567.50 360.54 L568.50 360.38 L569.50 360.68 L570.50 360.55 L571.50 361.40 L572.50 360.24 L573.50 360.10 L574.50 360.11 L575.50 360.85 L576.50 360.42 L577.50 361.22 L578.50 360.22 L579.50 360.31 L580.50 361.17 L581.50 361.62 L582.50 361.01 L583.50 360.83 L584.50 360.46 L585.50 360.94 L586.50 361.71 L587.50 360.39 L588.50 361.65 L589.50 360.41 L590.50 361.47 L591.50 361.19 L592.50 360.43 L593.50 361.52 L594.50 361.51 L595.50 360.89 L596.50 360.54 L597.50 360.34 L598.50 360.59 L599.50 360.16 L600.50 360.93 L601.50 360.16 L602.50 361.61 L603.50 361.39 L604.50 360.87 L605.50 361.27 L606.50 360.53 L607.50 360.68 L608.50 360.88 L609.50 360.33 L610.50 360.81 L611.50 361.23 L612.50 361.12 L613.50 360.33 L614.50 360.24 L615.50 361.41 L616.50 360.32 L617.50 360.12 L618.50 360.87 L619.50 360.79 L620.50 361.42 L621.50 360.85 L622.50 360.91 L623.50 360.74 L624.50 361.71 L625.50 360.12 L626.50 360.89 L627.50 361.08 L628.50 360.41 L629.50 360.81 L630.50 360.93 L631.50 360.59 L632.50 361.65 L633.50 360.85 L634.50 361.06 L635.50 360.14 L636.50 360.20 L637.50 361.31 L638.50 360.96 L639.50 361.55 L640.50 361.03 L641.50 360.38 L642.50 360.24 L643.50 360.95 L644.50 361.22 L645.50 361.44 L646.50 360.72 L647.50 360.20 L648.50 361.54 L649.50 360.44 L650.50 361.72 L651.50 361.43 L652.50 361.38 L653.50 360.60 L654.50 361.22 L655.50 361.16 L656.50 360.71 L657.50 361.58 L658.50 360.52 L659.50 361.55 L660.50 360.90 L661.50 361.34 L662.50 361.43 L663.50 360.86 L664.50 361.02 L665.50 361.13 L666.50 361.06 L667.50 360.87 L668.50 361.49 L669.50 361.41 L670.50 360.69 L671.50 360.68 L672.50 360.86 L673.50 360.32 L674.50 360.73 L675.50 360.31 L676.50 361.37 L677.50 360.51 L678.50 360.39 L679.50 360.23 L680.50 361.23 L681.50 361.23 L682.50 360.20 L683.50 361.39 L684.50 360.07 L685.50 360.26 L686.50 361.53 L687.50 361.36 L688.50 360.53 L689.50 361.32 L690.50 361.60 L691.50 360.35 L692.50 361.05 L693.50 360.43 L694.50 361.55 L695.50 361.08 L696.50 360.60 L697.50 361.73 L698.50 361.42 L699.50 360.61 L700.50 360.22 L701.50 360.12 L702.50 361.56 L703.50 360.91 L704.50 360.48 L705.50 360.91 L706.50 359.97 L707.50 359.54 L708.50 360.56 L709.50 354.34 L710.50 350.45 L711.50 350.97 L712.50 343.77 L713.50 340.31 L714.50 346.76 L715.50 341.27 L716.50 345.32 L717.50 347.15 L718.50 349.30 L719.50 347.09 L720.50 347.38 L721.50 341.73 L722.50 344.11 L723.50 344.18 L724.50 343.62 L725.50 345.71 L726.50 348.19 L727.50 350.34 L728.50 347.60 L729.50 352.76 L730.50 349.25 L731.50 349.23 L732.50 349.53 L733.50 350.19 L734.50 349.48 L735.50 350.03 L736.50 353.05 L737.50 354.47 L738.50 349.61 L739.50 351.81 L740.50 347.66 L741.50 348.36 L742.50 348.89 L743.50 346.06 L744.50 348.19 L745.50 346.26 L746.50 350.55 L747.50 352.35 L748.50 354.79 L749.50 353.06 L750.50 354.49 L751.50 351.24 L752.50 348.45 L753.50 347.08 L754.50 347.29 L755.50 348.76 L756.50 350.32 L757.50 347.45 L758.50 346.43 L759.50 341.37 L760.50 338.27 L761.50 342.79 L762.50 345.71 L763.50 346.11 L764.50 350.43 L765.50 351.17 L766.50 352.90 L767.50 353.68 L768.50 350.91 L769.50 348.17 L770.50 347.76 L771.50 352.77 L772.50 349.91 L773.50 346.31 L774.50 349.77 L775.50 346.83 L776.50 345.92 L777.50 348.79 L778.50 350.50 L779.50 353.73 L780.50 352.68 L781.50 353.21 L782.50 351.56 L783.50 350.67 L784.50 348.32 L785.50 346.39 L786.50 348.06 L787.50 354.30 L788.50 348.63 L789.00 352.46 L789.00 371.90Z" fill="#4444EE"/>
<path d="M285.50 371.90 L285.50 364.32 L286.50 363.30 L287.50 362.43 L288.50 362.01 L289.50 361.25 L290.50 360.43 L291.50 360.35 L292.50 359.72 L293.50 359.66 L294.50 359.84 L295.50 360.27 L296.50 360.58 L297.50 361.78 L298.50 362.66 L299.50 364.02 L300.50 364.23 L301.50 365.51 L302.50 365.43 L303.50 366.26 L304.50 365.57 L305.50 365.70 L306.50 365.50 L307.50 365.02 L308.50 365.60 L309.50 365.23 L310.50 363.94 L311.50 363.72 L312.50 364.13 L313.50 364.05 L314.50 364.76 L315.50 365.74 L316.50 365.34 L317.50 365.45 L318.50 365.16 L319.50 364.77 L320.50 365.09 L321.50 364.64 L322.50 365.18 L323.50 365.08 L324.50 364.54 L325.50 364.89 L326.50 364.87 L327.50 364.72 L328.50 364.82 L329.50 364.90 L330.50 365.20 L331.50 364.61 L332.50 364.41 L333.50 364.40 L334.50 364.66 L335.50 364.92 L336.50 364.92 L337.50 364.64 L338.50 364.66 L339.50 365.13 L340.50 365.03 L341.50 364.92 L342.50 364.79 L343.50 364.54 L344.50 364.80 L345.50 365.20 L346.50 364.53 L347.50 364.86 L348.50 364.79 L349.50 365.04 L350.50 364.86 L351.50 364.90 L352.50 364.57 L353.50 365.14 L354.50 364.76 L355.50 365.07 L356.50 364.64 L357.50 365.19 L358.50 364.99 L359.50 364.93 L360.50 364.69 L361.50 365.18 L362.50 364.99 L363.50 365.51 L364.50 365.76 L365.50 365.91 L366.50 365.81 L367.50 366.52 L368.50 366.28 L369.50 366.94 L370.50 366.30 L371.50 366.78 L372.50 366.92 L373.50 366.45 L374.50 366.31 L375.50 367.08 L376.50 366.86 L377.50 366.43 L378.50 366.79 L379.50 366.88 L380.50 367.08 L381.50 367.05 L382.50 366.56 L383.50 366.25 L384.50 366.24 L385.50 366.66 L386.50 367.06 L387.50 366.81 L388.50 366.42 L389.50 366.38 L390.50 366.54 L391.50 366.89 L392.50 366.64 L393.50 366.68 L394.50 366.55 L395.50 366.86 L396.50 366.28 L397.50 366.33 L398.50 366.95 L399.50 366.84 L400.50 366.35 L401.50 366.85 L402.50 366.29 L403.50 366.65 L404.50 366.50 L405.50 366.49 L406.50 366.90 L407.50 366.84 L408.50 366.87 L409.50 366.51 L410.50 366.50 L411.50 366.97 L412.50 366.33 L413.50 366.73 L414.50 366.88 L415.50 366.72 L416.50 366.26 L417.50 366.61 L418.50 366.56 L419.50 366.31 L420.50 366.27 L421.50 366.44 L422.50 366.73 L423.50 366.59 L424.50 366.32 L425.50 366.42 L426.50 366.59 L427.50 366.79 L428.50 366.77 L429.50 366.46 L430.50 366.61 L431.50 367.07 L432.50 366.48 L433.50 366.32 L434.50 366.41 L435.50 366.33 L436.50 366.31 L437.50 366.63 L438.50 366.42 L439.50 366.76 L440.50 367.00 L441.50 366.79 L442.50 366.82 L443.50 366.29 L444.50 366.50 L445.50 366.63 L446.50 366.56 L447.50 366.98 L448.50 366.63 L449.50 366.49 L450.50 366.75 L451.50 366.88 L452.50 366.74 L453.50 366.81 L454.50 366.50 L455.50 366.96 L456.50 367.01 L457.50 366.82 L458.50 366.50 L459.50 366.44 L460.50 366.53 L461.50 366.29 L462.50 366.77 L463.50 367.06 L464.50 366.67 L465.50 366.71 L466.50 366.93 L467.50 366.52 L468.50 366.80 L469.50 366.88 L470.50 366.81 L471.50 366.29 L472.50 367.08 L473.50 366.78 L474.50 366.85 L475.50 366.91 L476.50 366.72 L477.50 366.90 L478.50 366.31 L479.50 366.66 L480.50 366.49 L481.50 366.95 L482.50 366.69 L483.50 366.57 L484.50 366.37 L485.50 366.87 L486.50 366.70 L487.50 366.36 L488.50 366.38 L489.50 366.89 L490.50 366.63 L491.50 366.44 L492.50 366.75 L493.50 366.51 L494.50 366.52 L495.50 366.26 L496.50 366.62 L497.50 366.51 L498.50 366.79 L499.50 366.46 L500.50 366.81 L501.50 366.66 L502.50 366.78 L503.50 366.82 L504.50 366.97 L505.50 366.89 L506.50 366.62 L507.50 366.87 L508.50 367.04 L509.50 366.40 L510.50 366.84 L511.50 366.29 L512.50 366.58 L513.50 366.75 L514.50 366.35 L515.50 366.33 L516.50 366.81 L517.50 366.98 L518.50 366.54 L519.50 366.37 L520.50 366.57 L521.50 366.42 L522.50 366.74 L523.50 366.56 L524.50 366.86 L525.50 366.74 L526.50 366.76 L527.50 366.76 L528.50 366.75 L529.50 366.40 L530.50 366.94 L531.50 366.91 L532.50 366.87 L533.50 366.26 L534.50 366.64 L535.50 367.04 L536.50 366.38 L537.50 366.35 L538.50 366.39 L539.50 366.78 L540.50 366.46 L541.50 366.83 L542.50 366.97 L543.50 366.35 L544.50 366.38 L545.50 366.91 L546.50 366.34 L547.50 367.06 L548.50 366.82 L549.50 367.07 L550.50 366.94 L551.50 366.95 L552.50 366.48 L553.50 366.83 L554.50 366.92 L555.50 366.93 L556.50 366.82 L557.50 366.35 L558.50 366.57 L559.50 367.00 L560.50 366.50 L561.50 366.63 L562.50 366.70 L563.50 366.64 L564.50 366.53 L565.50 366.41 L566.50 366.66 L567.50 366.55 L568.50 366.69 L569.50 366.55 L570.50 366.76 L571.50 366.73 L572.50 366.65 L573.50 366.48 L574.50 366.85 L575.50 366.30 L576.50 366.67 L577.50 366.36 L578.50 366.50 L579.50 366.28 L580.50 366.51 L581.50 366.72 L582.50 366.74 L583.50 366.57 L584.50 366.45 L585.50 366.37 L586.50 366.97 L587.50 367.03 L588.50 366.99 L589.50 367.01 L590.50 367.04 L591.50 367.08 L592.50 366.87 L593.50 366.99 L594.50 366.50 L595.50 366.56 L596.50 366.27 L597.50 366.27 L598.50 366.45 L599.50 366.28 L600.50 367.06 L601.50 366.89 L602.50 366.30 L603.50 366.68 L604.50 366.91 L605.50 366.44 L606.50 366.73 L607.50 366.62 L608.50 366.82 L609.50 366.88 L610.50 367.01 L611.50 366.57 L612.50 366.28 L613.50 366.25 L614.50 366.44 L615.50 366.29 L616.50 366.78 L617.50 366.83 L618.50 366.30 L619.50 366.58 L620.50 366.52 L621.50 367.07 L622.50 366.89 L623.50 366.68 L624.50 366.47 L625.50 366.39 L626.50 366.44 L627.50 366.80 L628.50 366.76 L629.50 366.35 L630.50 366.25 L631.50 366.67 L632.50 366.92 L633.50 366.56 L634.50 366.63 L635.50 366.78 L636.50 366.89 L637.50 366.76 L638.50 366.57 L639.50 366.98 L640.50 366.63 L641.50 366.28 L642.50 366.45 L643.50 366.87 L644.50 366.73 L645.50 367.00 L646.50 366.46 L647.50 366.55 L648.50 366.94 L649.50 366.62 L650.50 366.58 L651.50 366.60 L652.50 366.76 L653.50 366.82 L654.50 366.78 L655.50 366.24 L656.50 366.80 L657.50 366.66 L658.50 366.69 L659.50 366.94 L660.50 366.75 L661.50 366.91 L662.50 366.81 L663.50 366.77 L664.50 366.79 L665.50 366.29 L666.50 366.83 L667.50 366.80 L668.50 366.53 L669.50 366.75 L670.50 366.65 L671.50 366.54 L672.50 367.02 L673.50 366.52 L674.50 367.00 L675.50 366.87 L676.50 366.40 L677.50 366.25 L678.50 366.51 L679.50 366.94 L680.50 366.71 L681.50 366.84 L682.50 366.37 L683.50 366.89 L684.50 366.92 L685.50 366.54 L686.50 366.55 L687.50 366.59 L688.50 366.68 L689.50 366.27 L690.50 366.70 L691.50 366.29 L692.50 366.75 L693.50 366.69 L694.50 366.78 L695.50 366.48 L696.50 366.45 L697.50 366.88 L698.50 366.64 L699.50 366.47 L700.50 366.66 L701.50 366.52 L702.50 366.56 L703.50 366.48 L704.50 366.78 L705.50 366.82 L706.50 366.82 L707.50 365.61 L708.50 365.22 L709.50 365.08 L710.50 364.11 L711.50 363.69 L712.50 363.98 L713.50 363.19 L714.50 363.33 L715.50 363.21 L716.50 363.04 L717.50 362.70 L718.50 362.79 L719.50 362.58 L720.50 362.62 L721.50 362.85 L722.50 363.37 L723.50 363.80 L724.50 363.59 L725.50 364.37 L726.50 364.49 L727.50 364.43 L728.50 364.19 L729.50 364.89 L730.50 364.86 L731.50 364.37 L732.50 364.36 L733.50 364.38 L734.50 364.76 L735.50 364.86 L736.50 364.91 L737.50 364.20 L738.50 364.22 L739.50 364.30 L740.50 364.00 L741.50 364.35 L742.50 364.01 L743.50 363.60 L744.50 364.17 L745.50 363.76 L746.50 364.26 L747.50 363.84 L748.50 363.97 L749.50 364.27 L750.50 364.59 L751.50 365.07 L752.50 364.81 L753.50 365.06 L754.50 365.16 L755.50 365.43 L756.50 364.58 L757.50 364.78 L758.50 364.61 L759.50 364.24 L760.50 364.06 L761.50 364.22 L762.50 364.09 L763.50 363.70 L764.50 363.96 L765.50 363.48 L766.50 364.29 L767.50 363.71 L768.50 364.00 L769.50 363.99 L770.50 363.75 L771.50 364.46 L772.50 364.37 L773.50 364.11 L774.50 364.22 L775.50 364.48 L776.50 364.33 L777.50 364.48 L778.50 364.39 L779.50 364.64 L780.50 364.89 L781.50 364.90 L782.50 365.01 L783.50 364.92 L784.50 364.94 L785.50 364.09 L786.50 364.74 L787.50 364.29 L788.50 364.63 L789.00 363.90 L789.00 371.90Z" fill="#44EEEE"/>
<path d="M285.50 371.90 L285.50 367.80 L286.50 367.57 L287.50 367.56 L288.50 367.47 L289.50 367.80 L290.50 367.76 L291.50 367.80 L292.50 367.75 L293.50 367.48 L294.50 367.77 L295.50 367.56 L296.50 367.71 L297.50 367.66 L298.50 367.58 L299.50 367.37 L300.50 367.47 L301.50 367.76 L302.50 367.62 L303.50 367.68 L304.50 367.30 L305.50 367.32 L306.50 367.31 L307.50 367.29 L308.50 367.33 L309.50 367.21 L310.50 367.28 L311.50 367.54 L312.50 367.23 L313.50 367.41 L314.50 367.26 L315.50 367.35 L316.50 367.41 L317.50 367.43 L318.50 367.39 L319.50 367.44 L320.50 367.53 L321.50 367.17 L322.50 367.19 L323.50 367.09 L324.50 367.24 L325.50 367.31 L326.50 367.21 L327.50 367.52 L328.50 367.25 L329.50 367.37 L330.50 367.50 L331.50 367.49 L332.50 367.33 L333.50 367.46 L334.50 367.36 L335.50 367.28 L336.50 367.39 L337.50 367.52 L338.50 367.34 L339.50 367.47 L340.50 367.47 L341.50 367.49 L342.50 367.40 L343.50 367.55 L344.50 367.26 L345.50 367.11 L346.50 367.39 L347.50 367.23 L348.50 367.12 L349.50 367.57 L350.50 367.52 L351.50 367.18 L352.50 367.17 L353.50 367.27 L354.50 367.51 L355.50 367.38 L356.50 367.15 L357.50 367.14 L358.50 367.18 L359.50 367.49 L360.50 367.16 L361.50 367.40 L362.50 367.33 L363.50 367.82 L364.50 367.59 L365.50 367.97 L366.50 368.11 L367.50 368.57 L368.50 368.46 L369.50 368.48 L370.50 368.47 L371.50 368.59 L372.50 368.40 L373.50 368.60 L374.50 368.62 L375.50 368.69 L376.50 368.43 L377.50 368.72 L378.50 368.66 L379.50 368.74 L380.50 368.45 L381.50 368.49 L382.50 368.50 L383.50 368.75 L384.50 368.55 L385.50 368.60 L386.50 368.73 L387.50 368.77 L388.50 368.27 L389.50 368.71 L390.50 368.62 L391.50 368.64 L392.50 368.47 L393.50 368.73 L394.50 368.54 L395.50 368.59 L396.50 368.35 L397.50 368.77 L398.50 368.60 L399.50 368.52 L400.50 368.28 L401.50 368.51 L402.50 368.53 L403.50 368.43 L404.50 368.62 L405.50 368.76 L406.50 368.52 L407.50 368.31 L408.50 368.40 L409.50 368.64 L410.50 368.43 L411.50 368.34 L412.50 368.64 L413.50 368.48 L414.50 368.59 L415.50 368.65 L416.50 368.63 L417.50 368.67 L418.50 368.60 L419.50 368.75 L420.50 368.57 L421.50 368.73 L422.50 368.39 L423.50 368.47 L424.50 368.77 L425.50 368.38 L426.50 368.68 L427.50 368.53 L428.50 368.49 L429.50 368.60 L430.50 368.63 L431.50 368.55 L432.50 368.70 L433.50 368.34 L434.50 368.72 L435.50 368.36 L436.50 368.66 L437.50 368.62 L438.50 368.58 L439.50 368.76 L440.50 368.71 L441.50 368.59 L442.50 368.55 L443.50 368.33 L444.50 368.27 L445.50 368.75 L446.50 368.50 L447.50 368.71 L448.50 368.37 L449.50 368.61 L450.50 368.32 L451.50 368.50 L452.50 368.71 L453.50 368.77 L454.50 368.65 L455.50 368.33 L456.50 368.70 L457.50 368.53 L458.50 368.59 L459.50 368.60 L460.50 368.37 L461.50 368.67 L462.50 368.41 L463.50 368.44 L464.50 368.30 L465.50 368.51 L466.50 368.31 L467.50 368.55 L468.50 368.48 L469.50 368.46 L470.50 368.35 L471.50 368.32 L472.50 368.72 L473.50 368.70 L474.50 368.50 L475.50 368.36 L476.50 368.50 L477.50 368.62 L478.50 368.29 L479.50 368.62 L480.50 368.73 L481.50 368.75 L482.50 368.76 L483.50 368.40 L484.50 368.72 L485.50 368.41 L486.50 368.33 L487.50 368.27 L488.50 368.36 L489.50 368.56 L490.50 368.46 L491.50 368.35 L492.50 368.41 L493.50 368.63 L494.50 368.39 L495.50 368.72 L496.50 368.62 L497.50 368.27 L498.50 368.53 L499.50 368.64 L500.50 368.38 L501.50 368.55 L502.50 368.77 L503.50 368.76 L504.50 368.64 L505.50 368.61 L506.50 368.30 L507.50 368.65 L508.50 368.34 L509.50 368.34 L510.50 368.56 L511.50 368.27 L512.50 368.39 L513.50 368.53 L514.50 368.64 L515.50 368.54 L516.50 368.32 L517.50 368.50 L518.50 368.68 L519.50 368.58 L520.50 368.53 L521.50 368.68 L522.50 368.48 L523.50 368.76 L524.50 368.36 L525.50 368.68 L526.50 368.72 L527.50 368.47 L528.50 368.62 L529.50 368.32 L530.50 368.52 L531.50 368.51 L532.50 368.35 L533.50 368.66 L534.50 368.40 L535.50 368.44 L536.50 368.56 L537.50 368.29 L538.50 368.76 L539.50 368.34 L540.50 368.70 L541.50 368.35 L542.50 368.70 L543.50 368.75 L544.50 368.52 L545.50 368.30 L546.50 368.64 L547.50 368.53 L548.50 368.47 L549.50 368.65 L550.50 368.50 L551.50 368.77 L552.50 368.55 L553.50 368.39 L554.50 368.60 L555.50 368.66 L556.50 368.75 L557.50 368.42 L558.50 368.56 L559.50 368.31 L560.50 368.40 L561.50 368.72 L562.50 368.31 L563.50 368.30 L564.50 368.36 L565.50 368.35 L566.50 368.43 L567.50 368.41 L568.50 368.44 L569.50 368.47 L570.50 368.64 L571.50 368.71 L572.50 368.41 L573.50 368.47 L574.50 368.74 L575.50 368.45 L576.50 368.46 L577.50 368.51 L578.50 368.38 L579.50 368.33 L580.50 368.58 L581.50 368.36 L582.50 368.52 L583.50 368.48 L584.50 368.56 L585.50 368.30 L586.50 368.55 L587.50 368.29 L588.50 368.60 L589.50 368.43 L590.50 368.31 L591.50 368.43 L592.50 368.58 L593.50 368.73 L594.50 368.53 L595.50 368.56 L596.50 368.36 L597.50 368.38 L598.50 368.27 L599.50 368.55 L600.50 368.57 L601.50 368.49 L602.50 368.39 L603.50 368.73 L604.50 368.66 L605.50 368.70 L606.50 368.61 L607.50 368.62 L608.50 368.28 L609.50 368.67 L610.50 368.30 L611.50 368.62 L612.50 368.67 L613.50 368.28 L614.50 368.73 L615.50 368.72 L616.50 368.71 L617.50 368.74 L618.50 368.58 L619.50 368.67 L620.50 368.69 L621.50 368.77 L622.50 368.42 L623.50 368.75 L624.50 368.66 L625.50 368.49 L626.50 368.33 L627.50 368.44 L628.50 368.41 L629.50 368.42 L630.50 368.37 L631.50 368.34 L632.50 368.69 L633.50 368.75 L634.50 368.46 L635.50 368.51 L636.50 368.51 L637.50 368.38 L638.50 368.69 L639.50 368.42 L640.50 368.56 L641.50 368.56 L642.50 368.65 L643.50 368.63 L644.50 368.48 L645.50 368.49 L646.50 368.31 L647.50 368.63 L648.50 368.41 L649.50 368.72 L650.50 368.44 L651.50 368.69 L652.50 368.34 L653.50 368.28 L654.50 368.64 L655.50 368.36 L656.50 368.66 L657.50 368.62 L658.50 368.72 L659.50 368.55 L660.50 368.72 L661.50 368.42 L662.50 368.48 L663.50 368.56 L664.50 368.41 L665.50 368.66 L666.50 368.61 L667.50 368.59 L668.50 368.77 L669.50 368.32 L670.50 368.73 L671.50 368.72 L672.50 368.37 L673.50 368.36 L674.50 368.55 L675.50 368.56 L676.50 368.70 L677.50 368.77 L678.50 368.51 L679.50 368.65 L680.50 368.70 L681.50 368.31 L682.50 368.76 L683.50 368.59 L684.50 368.39 L685.50 368.39 L686.50 368.72 L687.50 368.40 L688.50 368.49 L689.50 368.45 L690.50 368.30 L691.50 368.37 L692.50 368.47 L693.50 368.38 L694.50 368.52 L695.50 368.49 L696.50 368.36 L697.50 368.46 L698.50 368.58 L699.50 368.76 L700.50 368.37 L701.50 368.60 L702.50 368.56 L703.50 368.63 L704.50 368.49 L705.50 368.57 L706.50 368.29 L707.50 368.30 L708.50 368.21 L709.50 367.98 L710.50 368.04 L711.50 367.88 L712.50 367.66 L713.50 367.56 L714.50 367.44 L715.50 367.31 L716.50 367.48 L717.50 367.48 L718.50 367.66 L719.50 367.64 L720.50 367.54 L721.50 367.51 L722.50 367.30 L723.50 367.74 L724.50 367.58 L725.50 367.38 L726.50 367.53 L727.50 367.33 L728.50 367.68 L729.50 367.37 L730.50 367.54 L731.50 367.47 L732.50 367.73 L733.50 367.56 L734.50 367.35 L735.50 367.39 L736.50 367.47 L737.50 367.55 L738.50 367.74 L739.50 367.41 L740.50 367.53 L741.50 367.39 L742.50 367.45 L743.50 367.56 L744.50 367.32 L745.50 367.69 L746.50 367.27 L747.50 367.72 L748.50 367.27 L749.50 367.46 L750.50 367.53 L751.50 367.29 L752.50 367.50 L753.50 367.50 L754.50 367.73 L755.50 367.36 L756.50 367.44 L757.50 367.64 L758.50 367.70 L759.50 367.55 L760.50 367.29 L761.50 367.32 L762.50 367.52 L763.50 367.74 L764.50 367.34 L765.50 367.66 L766.50 367.39 L767.50 367.51 L768.50 367.27 L769.50 367.68 L770.50 367.36 L771.50 367.39 L772.50 367.75 L773.50 367.47 L774.50 367.61 L775.50 367.41 L776.50 367.27 L777.50 367.42 L778.50 367.51 L779.50 367.45 L780.50 367.63 L781.50 367.52 L782.50 367.70 L783.50 367.39 L784.50 367.73 L785.50 367.49 L786.50 367.67 L787.50 367.47 L788.50 367.73 L789.00 367.75 L789.00 371.90Z" fill="#E29136"/>
<g clip-path="url(#ak)"><g opacity="0.28"><path d="M281.50 362.50H791.50" stroke="#3a2c18" stroke-width="1" stroke-dasharray="1.1 1.15" opacity="1"/><path d="M281.50 345.50H791.50" stroke="#3a2c18" stroke-width="1" stroke-dasharray="1.1 1.15" opacity="1"/><path d="M281.50 328.50H791.50" stroke="#3a2c18" stroke-width="1" stroke-dasharray="1.1 1.15" opacity="1"/><path d="M281.50 312.50H791.50" stroke="#3a2c18" stroke-width="1" stroke-dasharray="1.1 1.15" opacity="1"/><path d="M281.50 295.50H791.50" stroke="#3a2c18" stroke-width="1" stroke-dasharray="1.1 1.15" opacity="1"/><path d="M281.50 278.50H791.50" stroke="#3a2c18" stroke-width="1" stroke-dasharray="1.1 1.15" opacity="1"/><path d="M281.50 261.50H791.50" stroke="#3a2c18" stroke-width="1" stroke-dasharray="1.1 1.15" opacity="1"/><path d="M281.50 244.50H791.50" stroke="#3a2c18" stroke-width="1" stroke-dasharray="1.1 1.15" opacity="1"/><path d="M281.50 227.50H791.50" stroke="#3a2c18" stroke-width="1" stroke-dasharray="1.1 1.15" opacity="1"/><path d="M281.50 210.50H791.50" stroke="#3a2c18" stroke-width="1" stroke-dasharray="1.1 1.15" opacity="1"/><path d="M291.50 202.00V375.00" stroke="#3e3e1c" stroke-width="1" stroke-dasharray="1.1 1.15" opacity="1"/><path d="M312.50 202.00V375.00" stroke="#3e3e1c" stroke-width="1" stroke-dasharray="1.1 1.15" opacity="1"/><path d="M333.50 202.00V375.00" stroke="#3e3e1c" stroke-width="1" stroke-dasharray="1.1 1.15" opacity="1"/><path d="M375.50 202.00V375.00" stroke="#3e3e1c" stroke-width="1" stroke-dasharray="1.1 1.15" opacity="1"/><path d="M396.50 202.00V375.00" stroke="#3e3e1c" stroke-width="1" stroke-dasharray="1.1 1.15" opacity="1"/><path d="M417.50 202.00V375.00" stroke="#3e3e1c" stroke-width="1" stroke-dasharray="1.1 1.15" opacity="1"/><path d="M438.50 202.00V375.00" stroke="#3e3e1c" stroke-width="1" stroke-dasharray="1.1 1.15" opacity="1"/><path d="M459.50 202.00V375.00" stroke="#3e3e1c" stroke-width="1" stroke-dasharray="1.1 1.15" opacity="1"/><path d="M501.50 202.00V375.00" stroke="#3e3e1c" stroke-width="1" stroke-dasharray="1.1 1.15" opacity="1"/><path d="M522.50 202.00V375.00" stroke="#3e3e1c" stroke-width="1" stroke-dasharray="1.1 1.15" opacity="1"/><path d="M543.50 202.00V375.00" stroke="#3e3e1c" stroke-width="1" stroke-dasharray="1.1 1.15" opacity="1"/><path d="M564.50 202.00V375.00" stroke="#3e3e1c" stroke-width="1" stroke-dasharray="1.1 1.15" opacity="1"/><path d="M585.50 202.00V375.00" stroke="#3e3e1c" stroke-width="1" stroke-dasharray="1.1 1.15" opacity="1"/><path d="M627.50 202.00V375.00" stroke="#3e3e1c" stroke-width="1" stroke-dasharray="1.1 1.15" opacity="1"/><path d="M648.50 202.00V375.00" stroke="#3e3e1c" stroke-width="1" stroke-dasharray="1.1 1.15" opacity="1"/><path d="M669.50 202.00V375.00" stroke="#3e3e1c" stroke-width="1" stroke-dasharray="1.1 1.15" opacity="1"/><path d="M690.50 202.00V375.00" stroke="#3e3e1c" stroke-width="1" stroke-dasharray="1.1 1.15" opacity="1"/><path d="M711.50 202.00V375.00" stroke="#3e3e1c" stroke-width="1" stroke-dasharray="1.1 1.15" opacity="1"/><path d="M753.50 202.00V375.00" stroke="#3e3e1c" stroke-width="1" stroke-dasharray="1.1 1.15" opacity="1"/><path d="M774.50 202.00V375.00" stroke="#3e3e1c" stroke-width="1" stroke-dasharray="1.1 1.15" opacity="1"/></g><g opacity="0.12"><path d="M281.50 371.50H791.50" stroke="#a4b0a4" stroke-width="1" stroke-dasharray="1.1 1.15" opacity="1"/><path d="M281.50 354.50H791.50" stroke="#a4b0a4" stroke-width="1" stroke-dasharray="1.1 1.15" opacity="1"/><path d="M281.50 338.50H791.50" stroke="#a4b0a4" stroke-width="1" stroke-dasharray="1.1 1.15" opacity="1"/><path d="M281.50 321.50H791.50" stroke="#a4b0a4" stroke-width="1" stroke-dasharray="1.1 1.15" opacity="1"/><path d="M281.50 304.50H791.50" stroke="#a4b0a4" stroke-width="1" stroke-dasharray="1.1 1.15" opacity="1"/><path d="M281.50 287.50H791.50" stroke="#a4b0a4" stroke-width="1" stroke-dasharray="1.1 1.15" opacity="1"/><path d="M281.50 270.50H791.50" stroke="#a4b0a4" stroke-width="1" stroke-dasharray="1.1 1.15" opacity="1"/><path d="M281.50 253.50H791.50" stroke="#a4b0a4" stroke-width="1" stroke-dasharray="1.1 1.15" opacity="1"/><path d="M281.50 236.50H791.50" stroke="#a4b0a4" stroke-width="1" stroke-dasharray="1.1 1.15" opacity="1"/><path d="M281.50 219.50H791.50" stroke="#a4b0a4" stroke-width="1" stroke-dasharray="1.1 1.15" opacity="1"/><path d="M281.50 202.50H791.50" stroke="#a4b0a4" stroke-width="1" stroke-dasharray="1.1 1.15" opacity="1"/><path d="M354.50 202.00V375.00" stroke="#8a9e8a" stroke-width="1" stroke-dasharray="1.1 1.15" opacity="1"/><path d="M480.50 202.00V375.00" stroke="#8a9e8a" stroke-width="1" stroke-dasharray="1.1 1.15" opacity="1"/><path d="M606.50 202.00V375.00" stroke="#8a9e8a" stroke-width="1" stroke-dasharray="1.1 1.15" opacity="1"/><path d="M732.50 202.00V375.00" stroke="#8a9e8a" stroke-width="1" stroke-dasharray="1.1 1.15" opacity="1"/></g></g>
<path d="M281.80 200.20 L285.00 194.60 L288.20 200.20Z" fill="#fff"/>
<path d="M792.20 367.10 L798.20 370.40 L792.20 373.70Z" fill="#fff"/>
<path d="M285.50 355.08 L286.50 350.58 L287.50 352.11 L288.50 352.64 L289.50 347.02 L290.50 346.14 L291.50 342.97 L292.50 334.02 L293.50 331.63 L294.50 335.91 L295.50 343.48 L296.50 341.90 L297.50 340.33 L298.50 337.31 L299.50 335.43 L300.50 339.02 L301.50 344.20 L302.50 348.14 L303.50 352.04 L304.50 355.43 L305.50 357.61 L306.50 357.91 L307.50 356.69 L308.50 356.70 L309.50 354.71 L310.50 350.42 L311.50 346.58 L312.50 346.81 L313.50 351.39 L314.50 356.43 L315.50 357.66 L316.50 358.41 L317.50 357.79 L318.50 358.71 L319.50 357.88 L320.50 358.13 L321.50 359.57 L322.50 359.22 L323.50 358.04 L324.50 358.79 L325.50 357.93 L326.50 358.92 L327.50 359.47 L328.50 358.53 L329.50 358.28 L330.50 359.15 L331.50 359.46 L332.50 359.05 L333.50 357.99 L334.50 358.34 L335.50 359.42 L336.50 359.21 L337.50 359.46 L338.50 359.53 L339.50 358.29 L340.50 359.34 L341.50 358.70 L342.50 358.89 L343.50 359.33 L344.50 358.42 L345.50 359.44 L346.50 358.58 L347.50 359.47 L348.50 358.96 L349.50 359.32 L350.50 359.22 L351.50 358.04 L352.50 358.33 L353.50 359.18 L354.50 358.20 L355.50 359.34 L356.50 359.04 L357.50 358.26 L358.50 358.63 L359.50 359.55 L360.50 358.05 L361.50 359.36 L362.50 359.29 L363.50 358.42 L364.50 359.51 L365.50 360.25 L366.50 361.30 L367.50 361.61 L368.50 360.78 L369.50 361.35 L370.50 360.74 L371.50 361.13 L372.50 360.99 L373.50 360.14 L374.50 360.94 L375.50 360.79 L376.50 360.30 L377.50 361.45 L378.50 361.50 L379.50 360.22 L380.50 360.38 L381.50 361.34 L382.50 361.44 L383.50 360.51 L384.50 360.17 L385.50 361.43 L386.50 360.15 L387.50 360.27 L388.50 360.74 L389.50 361.05 L390.50 361.58 L391.50 361.69 L392.50 360.13 L393.50 361.36 L394.50 360.57 L395.50 361.33 L396.50 360.37 L397.50 360.75 L398.50 361.26 L399.50 361.46 L400.50 360.54 L401.50 361.64 L402.50 361.37 L403.50 360.81 L404.50 360.32 L405.50 360.72 L406.50 361.29 L407.50 360.21 L408.50 361.42 L409.50 361.73 L410.50 361.31 L411.50 361.01 L412.50 361.66 L413.50 361.46 L414.50 361.14 L415.50 360.79 L416.50 361.54 L417.50 361.15 L418.50 360.25 L419.50 360.10 L420.50 360.65 L421.50 360.59 L422.50 360.77 L423.50 361.52 L424.50 361.70 L425.50 361.73 L426.50 360.22 L427.50 360.58 L428.50 360.13 L429.50 361.72 L430.50 360.68 L431.50 360.95 L432.50 360.53 L433.50 361.22 L434.50 360.07 L435.50 361.63 L436.50 360.84 L437.50 360.51 L438.50 360.24 L439.50 360.51 L440.50 360.57 L441.50 360.42 L442.50 360.21 L443.50 361.17 L444.50 360.60 L445.50 360.24 L446.50 360.29 L447.50 361.06 L448.50 360.42 L449.50 360.30 L450.50 360.79 L451.50 360.70 L452.50 361.11 L453.50 360.78 L454.50 360.73 L455.50 361.62 L456.50 360.68 L457.50 360.08 L458.50 360.27 L459.50 360.53 L460.50 361.10 L461.50 360.52 L462.50 360.78 L463.50 361.02 L464.50 360.34 L465.50 361.62 L466.50 360.49 L467.50 361.71 L468.50 360.74 L469.50 360.95 L470.50 361.37 L471.50 360.58 L472.50 360.92 L473.50 360.72 L474.50 360.20 L475.50 361.33 L476.50 361.74 L477.50 361.25 L478.50 360.61 L479.50 361.42 L480.50 361.47 L481.50 360.23 L482.50 360.64 L483.50 361.01 L484.50 360.25 L485.50 361.21 L486.50 360.63 L487.50 361.42 L488.50 361.03 L489.50 360.40 L490.50 360.21 L491.50 360.27 L492.50 361.11 L493.50 360.77 L494.50 361.23 L495.50 361.53 L496.50 360.92 L497.50 360.35 L498.50 360.33 L499.50 360.56 L500.50 360.15 L501.50 361.29 L502.50 361.47 L503.50 361.00 L504.50 361.29 L505.50 361.40 L506.50 361.06 L507.50 360.70 L508.50 360.93 L509.50 361.23 L510.50 360.34 L511.50 360.10 L512.50 361.00 L513.50 361.63 L514.50 361.71 L515.50 360.28 L516.50 361.69 L517.50 360.56 L518.50 360.80 L519.50 361.24 L520.50 360.42 L521.50 361.73 L522.50 361.53 L523.50 360.99 L524.50 361.72 L525.50 360.36 L526.50 361.36 L527.50 361.52 L528.50 361.68 L529.50 360.70 L530.50 361.01 L531.50 360.70 L532.50 360.65 L533.50 360.40 L534.50 360.14 L535.50 360.60 L536.50 361.42 L537.50 360.96 L538.50 361.46 L539.50 361.74 L540.50 360.96 L541.50 360.55 L542.50 361.46 L543.50 361.30 L544.50 361.18 L545.50 360.58 L546.50 360.88 L547.50 360.72 L548.50 360.48 L549.50 361.09 L550.50 360.42 L551.50 360.23 L552.50 361.61 L553.50 360.18 L554.50 360.54 L555.50 361.54 L556.50 360.99 L557.50 360.70 L558.50 360.22 L559.50 361.12 L560.50 360.80 L561.50 360.27 L562.50 360.41 L563.50 360.16 L564.50 360.98 L565.50 360.66 L566.50 361.41 L567.50 360.54 L568.50 360.38 L569.50 360.68 L570.50 360.55 L571.50 361.40 L572.50 360.24 L573.50 360.10 L574.50 360.11 L575.50 360.85 L576.50 360.42 L577.50 361.22 L578.50 360.22 L579.50 360.31 L580.50 361.17 L581.50 361.62 L582.50 361.01 L583.50 360.83 L584.50 360.46 L585.50 360.94 L586.50 361.71 L587.50 360.39 L588.50 361.65 L589.50 360.41 L590.50 361.47 L591.50 361.19 L592.50 360.43 L593.50 361.52 L594.50 361.51 L595.50 360.89 L596.50 360.54 L597.50 360.34 L598.50 360.59 L599.50 360.16 L600.50 360.93 L601.50 360.16 L602.50 361.61 L603.50 361.39 L604.50 360.87 L605.50 361.27 L606.50 360.53 L607.50 360.68 L608.50 360.88 L609.50 360.33 L610.50 360.81 L611.50 361.23 L612.50 361.12 L613.50 360.33 L614.50 360.24 L615.50 361.41 L616.50 360.32 L617.50 360.12 L618.50 360.87 L619.50 360.79 L620.50 361.42 L621.50 360.85 L622.50 360.91 L623.50 360.74 L624.50 361.71 L625.50 360.12 L626.50 360.89 L627.50 361.08 L628.50 360.41 L629.50 360.81 L630.50 360.93 L631.50 360.59 L632.50 361.65 L633.50 360.85 L634.50 361.06 L635.50 360.14 L636.50 360.20 L637.50 361.31 L638.50 360.96 L639.50 361.55 L640.50 361.03 L641.50 360.38 L642.50 360.24 L643.50 360.95 L644.50 361.22 L645.50 361.44 L646.50 360.72 L647.50 360.20 L648.50 361.54 L649.50 360.44 L650.50 361.72 L651.50 361.43 L652.50 361.38 L653.50 360.60 L654.50 361.22 L655.50 361.16 L656.50 360.71 L657.50 361.58 L658.50 360.52 L659.50 361.55 L660.50 360.90 L661.50 361.34 L662.50 361.43 L663.50 360.86 L664.50 361.02 L665.50 361.13 L666.50 361.06 L667.50 360.87 L668.50 361.49 L669.50 361.41 L670.50 360.69 L671.50 360.68 L672.50 360.86 L673.50 360.32 L674.50 360.73 L675.50 360.31 L676.50 361.37 L677.50 360.51 L678.50 360.39 L679.50 360.23 L680.50 361.23 L681.50 361.23 L682.50 360.20 L683.50 361.39 L684.50 360.07 L685.50 360.26 L686.50 361.53 L687.50 361.36 L688.50 360.53 L689.50 361.32 L690.50 361.60 L691.50 360.35 L692.50 361.05 L693.50 360.43 L694.50 361.55 L695.50 361.08 L696.50 360.60 L697.50 361.73 L698.50 361.42 L699.50 360.61 L700.50 360.22 L701.50 360.12 L702.50 361.56 L703.50 360.91 L704.50 360.48 L705.50 360.91 L706.50 359.97 L707.50 359.54 L708.50 360.56 L709.50 354.34 L710.50 350.45 L711.50 350.97 L712.50 343.77 L713.50 340.31 L714.50 346.76 L715.50 341.27 L716.50 345.32 L717.50 347.15 L718.50 349.30 L719.50 347.09 L720.50 347.38 L721.50 341.73 L722.50 344.11 L723.50 344.18 L724.50 343.62 L725.50 345.71 L726.50 348.19 L727.50 350.34 L728.50 347.60 L729.50 352.76 L730.50 349.25 L731.50 349.23 L732.50 349.53 L733.50 350.19 L734.50 349.48 L735.50 350.03 L736.50 353.05 L737.50 354.47 L738.50 349.61 L739.50 351.81 L740.50 347.66 L741.50 348.36 L742.50 348.89 L743.50 346.06 L744.50 348.19 L745.50 346.26 L746.50 350.55 L747.50 352.35 L748.50 354.79 L749.50 353.06 L750.50 354.49 L751.50 351.24 L752.50 348.45 L753.50 347.08 L754.50 347.29 L755.50 348.76 L756.50 350.32 L757.50 347.45 L758.50 346.43 L759.50 341.37 L760.50 338.27 L761.50 342.79 L762.50 345.71 L763.50 346.11 L764.50 350.43 L765.50 351.17 L766.50 352.90 L767.50 353.68 L768.50 350.91 L769.50 348.17 L770.50 347.76 L771.50 352.77 L772.50 349.91 L773.50 346.31 L774.50 349.77 L775.50 346.83 L776.50 345.92 L777.50 348.79 L778.50 350.50 L779.50 353.73 L780.50 352.68 L781.50 353.21 L782.50 351.56 L783.50 350.67 L784.50 348.32 L785.50 346.39 L786.50 348.06 L787.50 354.30 L788.50 348.63 L789.00 352.46" fill="none" stroke="#0000EE" stroke-width="1.0"/>
<text x="276.80" y="375.20" font-size="11.15" text-anchor="end" fill="#cacaca" stroke="#cacaca" stroke-width="0.12" >0</text>
<text x="276.80" y="358.30" font-size="11.15" text-anchor="end" fill="#cacaca" stroke="#cacaca" stroke-width="0.12" >10</text>
<text x="276.80" y="341.40" font-size="11.15" text-anchor="end" fill="#cacaca" stroke="#cacaca" stroke-width="0.12" >20</text>
<text x="276.80" y="324.50" font-size="11.15" text-anchor="end" fill="#cacaca" stroke="#cacaca" stroke-width="0.12" >30</text>
<text x="276.80" y="307.60" font-size="11.15" text-anchor="end" fill="#cacaca" stroke="#cacaca" stroke-width="0.12" >40</text>
<text x="276.80" y="290.70" font-size="11.15" text-anchor="end" fill="#cacaca" stroke="#cacaca" stroke-width="0.12" >50</text>
<text x="276.80" y="273.80" font-size="11.15" text-anchor="end" fill="#cacaca" stroke="#cacaca" stroke-width="0.12" >60</text>
<text x="276.80" y="256.90" font-size="11.15" text-anchor="end" fill="#cacaca" stroke="#cacaca" stroke-width="0.12" >70</text>
<text x="276.80" y="240.00" font-size="11.15" text-anchor="end" fill="#cacaca" stroke="#cacaca" stroke-width="0.12" >80</text>
<text x="276.80" y="223.10" font-size="11.15" text-anchor="end" fill="#cacaca" stroke="#cacaca" stroke-width="0.12" >90</text>
<text x="276.80" y="206.20" font-size="11.15" text-anchor="end" fill="#cacaca" stroke="#cacaca" stroke-width="0.12" >100</text>
<text x="354.30" y="384.90" font-size="11.15" text-anchor="middle" fill="#cacaca" stroke="#cacaca" stroke-width="0.12" >18:00</text>
<text x="480.30" y="384.90" font-size="11.15" text-anchor="middle" fill="#cacaca" stroke="#cacaca" stroke-width="0.12" >00:00</text>
<text x="606.30" y="384.90" font-size="11.15" text-anchor="middle" fill="#cacaca" stroke="#cacaca" stroke-width="0.12" >06:00</text>
<text x="732.30" y="384.90" font-size="11.15" text-anchor="middle" fill="#cacaca" stroke="#cacaca" stroke-width="0.12" >12:00</text>
<text x="426.00" y="197.60" font-size="15.0" text-anchor="start" fill="#cacaca" stroke="#cacaca" stroke-width="0.12" >Kernel usage &#160;(1day)</text>
<text x="0" y="0" font-size="13.0" text-anchor="middle" dominant-baseline="central" fill="#c0c0c0" transform="translate(221.20 285.80) rotate(-90)" textLength="84" lengthAdjust="spacingAndGlyphs" >Percent (%)</text>
<text x="0" y="0" font-size="9.0" text-anchor="middle" dominant-baseline="central" fill="#323232" transform="translate(813.20 239.70) rotate(90)" textLength="128" lengthAdjust="spacingAndGlyphs" font-family="Liberation Mono" font-weight="bold">RRDTOOL / TOBI OETIKER</text>
<rect x="224.20" y="393.70" width="9.4" height="9.4" fill="#a0a0a0"/><rect x="225.30" y="394.80" width="7.2" height="7.2" fill="#4444EE"/>
<text x="239.60" y="402.20" font-size="11.15" text-anchor="start" fill="#cacaca" stroke="#cacaca" stroke-width="0.12" >user</text>
<text x="322.30" y="402.20" font-size="11.15" text-anchor="start" fill="#cacaca" stroke="#cacaca" stroke-width="0.12" >Current:</text>
<text x="416.30" y="402.20" font-size="11.15" text-anchor="end" fill="#cacaca" stroke="#cacaca" stroke-width="0.12" >8.5%</text>
<text x="459.30" y="402.20" font-size="11.15" text-anchor="start" fill="#cacaca" stroke="#cacaca" stroke-width="0.12" >Average:</text>
<text x="553.20" y="402.20" font-size="11.15" text-anchor="end" fill="#cacaca" stroke="#cacaca" stroke-width="0.12" >7.4%</text>
<text x="595.80" y="402.20" font-size="11.15" text-anchor="start" fill="#cacaca" stroke="#cacaca" stroke-width="0.12" >Min:</text>
<text x="663.40" y="402.20" font-size="11.15" text-anchor="end" fill="#cacaca" stroke="#cacaca" stroke-width="0.12" >4.3%</text>
<text x="706.00" y="402.20" font-size="11.15" text-anchor="start" fill="#cacaca" stroke="#cacaca" stroke-width="0.12" >Max:</text>
<text x="773.20" y="402.20" font-size="11.15" text-anchor="end" fill="#cacaca" stroke="#cacaca" stroke-width="0.12" >23.0%</text>
<rect x="224.20" y="407.13" width="9.4" height="9.4" fill="#a0a0a0"/><rect x="225.30" y="408.23" width="7.2" height="7.2" fill="#EEEE44"/>
<text x="239.60" y="415.63" font-size="11.15" text-anchor="start" fill="#cacaca" stroke="#cacaca" stroke-width="0.12" >nice</text>
<text x="322.30" y="415.63" font-size="11.15" text-anchor="start" fill="#cacaca" stroke="#cacaca" stroke-width="0.12" >Current:</text>
<text x="416.30" y="415.63" font-size="11.15" text-anchor="end" fill="#cacaca" stroke="#cacaca" stroke-width="0.12" >0.0%</text>
<text x="459.30" y="415.63" font-size="11.15" text-anchor="start" fill="#cacaca" stroke="#cacaca" stroke-width="0.12" >Average:</text>
<text x="553.20" y="415.63" font-size="11.15" text-anchor="end" fill="#cacaca" stroke="#cacaca" stroke-width="0.12" >0.0%</text>
<text x="595.80" y="415.63" font-size="11.15" text-anchor="start" fill="#cacaca" stroke="#cacaca" stroke-width="0.12" >Min:</text>
<text x="663.40" y="415.63" font-size="11.15" text-anchor="end" fill="#cacaca" stroke="#cacaca" stroke-width="0.12" >0.0%</text>
<text x="706.00" y="415.63" font-size="11.15" text-anchor="start" fill="#cacaca" stroke="#cacaca" stroke-width="0.12" >Max:</text>
<text x="773.20" y="415.63" font-size="11.15" text-anchor="end" fill="#cacaca" stroke="#cacaca" stroke-width="0.12" >0.1%</text>
<rect x="224.20" y="420.56" width="9.4" height="9.4" fill="#a0a0a0"/><rect x="225.30" y="421.66" width="7.2" height="7.2" fill="#44EEEE"/>
<text x="239.60" y="429.06" font-size="11.15" text-anchor="start" fill="#cacaca" stroke="#cacaca" stroke-width="0.12" >system</text>
<text x="322.30" y="429.06" font-size="11.15" text-anchor="start" fill="#cacaca" stroke="#cacaca" stroke-width="0.12" >Current:</text>
<text x="416.30" y="429.06" font-size="11.15" text-anchor="end" fill="#cacaca" stroke="#cacaca" stroke-width="0.12" >3.1%</text>
<text x="459.30" y="429.06" font-size="11.15" text-anchor="start" fill="#cacaca" stroke="#cacaca" stroke-width="0.12" >Average:</text>
<text x="553.20" y="429.06" font-size="11.15" text-anchor="end" fill="#cacaca" stroke="#cacaca" stroke-width="0.12" >2.5%</text>
<text x="595.80" y="429.06" font-size="11.15" text-anchor="start" fill="#cacaca" stroke="#cacaca" stroke-width="0.12" >Min:</text>
<text x="663.40" y="429.06" font-size="11.15" text-anchor="end" fill="#cacaca" stroke="#cacaca" stroke-width="0.12" >1.7%</text>
<text x="706.00" y="429.06" font-size="11.15" text-anchor="start" fill="#cacaca" stroke="#cacaca" stroke-width="0.12" >Max:</text>
<text x="773.20" y="429.06" font-size="11.15" text-anchor="end" fill="#cacaca" stroke="#cacaca" stroke-width="0.12" >5.8%</text>
<rect x="224.20" y="433.99" width="9.4" height="9.4" fill="#a0a0a0"/><rect x="225.30" y="435.09" width="7.2" height="7.2" fill="#EE44EE"/>
<text x="239.60" y="442.49" font-size="11.15" text-anchor="start" fill="#cacaca" stroke="#cacaca" stroke-width="0.12" >I/O wait</text>
<text x="322.30" y="442.49" font-size="11.15" text-anchor="start" fill="#cacaca" stroke="#cacaca" stroke-width="0.12" >Current:</text>
<text x="416.30" y="442.49" font-size="11.15" text-anchor="end" fill="#cacaca" stroke="#cacaca" stroke-width="0.12" >0.1%</text>
<text x="459.30" y="442.49" font-size="11.15" text-anchor="start" fill="#cacaca" stroke="#cacaca" stroke-width="0.12" >Average:</text>
<text x="553.20" y="442.49" font-size="11.15" text-anchor="end" fill="#cacaca" stroke="#cacaca" stroke-width="0.12" >0.1%</text>
<text x="595.80" y="442.49" font-size="11.15" text-anchor="start" fill="#cacaca" stroke="#cacaca" stroke-width="0.12" >Min:</text>
<text x="663.40" y="442.49" font-size="11.15" text-anchor="end" fill="#cacaca" stroke="#cacaca" stroke-width="0.12" >0.0%</text>
<text x="706.00" y="442.49" font-size="11.15" text-anchor="start" fill="#cacaca" stroke="#cacaca" stroke-width="0.12" >Max:</text>
<text x="773.20" y="442.49" font-size="11.15" text-anchor="end" fill="#cacaca" stroke="#cacaca" stroke-width="0.12" >1.1%</text>
<rect x="224.20" y="447.42" width="9.4" height="9.4" fill="#a0a0a0"/><rect x="225.30" y="448.52" width="7.2" height="7.2" fill="#888888"/>
<text x="239.60" y="455.92" font-size="11.15" text-anchor="start" fill="#cacaca" stroke="#cacaca" stroke-width="0.12" >IRQ</text>
<text x="322.30" y="455.92" font-size="11.15" text-anchor="start" fill="#cacaca" stroke="#cacaca" stroke-width="0.12" >Current:</text>
<text x="416.30" y="455.92" font-size="11.15" text-anchor="end" fill="#cacaca" stroke="#cacaca" stroke-width="0.12" >0.0%</text>
<text x="459.30" y="455.92" font-size="11.15" text-anchor="start" fill="#cacaca" stroke="#cacaca" stroke-width="0.12" >Average:</text>
<text x="553.20" y="455.92" font-size="11.15" text-anchor="end" fill="#cacaca" stroke="#cacaca" stroke-width="0.12" >0.0%</text>
<text x="595.80" y="455.92" font-size="11.15" text-anchor="start" fill="#cacaca" stroke="#cacaca" stroke-width="0.12" >Min:</text>
<text x="663.40" y="455.92" font-size="11.15" text-anchor="end" fill="#cacaca" stroke="#cacaca" stroke-width="0.12" >0.0%</text>
<text x="706.00" y="455.92" font-size="11.15" text-anchor="start" fill="#cacaca" stroke="#cacaca" stroke-width="0.12" >Max:</text>
<text x="773.20" y="455.92" font-size="11.15" text-anchor="end" fill="#cacaca" stroke="#cacaca" stroke-width="0.12" >0.0%</text>
<rect x="224.20" y="460.85" width="9.4" height="9.4" fill="#a0a0a0"/><rect x="225.30" y="461.95" width="7.2" height="7.2" fill="#E29136"/>
<text x="239.60" y="469.35" font-size="11.15" text-anchor="start" fill="#cacaca" stroke="#cacaca" stroke-width="0.12" >softIRQ</text>
<text x="322.30" y="469.35" font-size="11.15" text-anchor="start" fill="#cacaca" stroke="#cacaca" stroke-width="0.12" >Current:</text>
<text x="416.30" y="469.35" font-size="11.15" text-anchor="end" fill="#cacaca" stroke="#cacaca" stroke-width="0.12" >2.2%</text>
<text x="459.30" y="469.35" font-size="11.15" text-anchor="start" fill="#cacaca" stroke="#cacaca" stroke-width="0.12" >Average:</text>
<text x="553.20" y="469.35" font-size="11.15" text-anchor="end" fill="#cacaca" stroke="#cacaca" stroke-width="0.12" >2.1%</text>
<text x="595.80" y="469.35" font-size="11.15" text-anchor="start" fill="#cacaca" stroke="#cacaca" stroke-width="0.12" >Min:</text>
<text x="663.40" y="469.35" font-size="11.15" text-anchor="end" fill="#cacaca" stroke="#cacaca" stroke-width="0.12" >1.2%</text>
<text x="706.00" y="469.35" font-size="11.15" text-anchor="start" fill="#cacaca" stroke="#cacaca" stroke-width="0.12" >Max:</text>
<text x="773.20" y="469.35" font-size="11.15" text-anchor="end" fill="#cacaca" stroke="#cacaca" stroke-width="0.12" >2.6%</text>
<rect x="224.20" y="474.28" width="9.4" height="9.4" fill="#a0a0a0"/><rect x="225.30" y="475.38" width="7.2" height="7.2" fill="#44EE44"/>
<text x="239.60" y="482.78" font-size="11.15" text-anchor="start" fill="#cacaca" stroke="#cacaca" stroke-width="0.12" >steal</text>
<text x="322.30" y="482.78" font-size="11.15" text-anchor="start" fill="#cacaca" stroke="#cacaca" stroke-width="0.12" >Current:</text>
<text x="416.30" y="482.78" font-size="11.15" text-anchor="end" fill="#cacaca" stroke="#cacaca" stroke-width="0.12" >0.0%</text>
<text x="459.30" y="482.78" font-size="11.15" text-anchor="start" fill="#cacaca" stroke="#cacaca" stroke-width="0.12" >Average:</text>
<text x="553.20" y="482.78" font-size="11.15" text-anchor="end" fill="#cacaca" stroke="#cacaca" stroke-width="0.12" >0.0%</text>
<text x="595.80" y="482.78" font-size="11.15" text-anchor="start" fill="#cacaca" stroke="#cacaca" stroke-width="0.12" >Min:</text>
<text x="663.40" y="482.78" font-size="11.15" text-anchor="end" fill="#cacaca" stroke="#cacaca" stroke-width="0.12" >0.0%</text>
<text x="706.00" y="482.78" font-size="11.15" text-anchor="start" fill="#cacaca" stroke="#cacaca" stroke-width="0.12" >Max:</text>
<text x="773.20" y="482.78" font-size="11.15" text-anchor="end" fill="#cacaca" stroke="#cacaca" stroke-width="0.12" >0.0%</text>
<rect x="224.20" y="487.71" width="9.4" height="9.4" fill="#a0a0a0"/><rect x="225.30" y="488.81" width="7.2" height="7.2" fill="#448844"/>
<text x="239.60" y="496.21" font-size="11.15" text-anchor="start" fill="#cacaca" stroke="#cacaca" stroke-width="0.12" >guest</text>
<text x="322.30" y="496.21" font-size="11.15" text-anchor="start" fill="#cacaca" stroke="#cacaca" stroke-width="0.12" >Current:</text>
<text x="416.30" y="496.21" font-size="11.15" text-anchor="end" fill="#cacaca" stroke="#cacaca" stroke-width="0.12" >0.0%</text>
<text x="459.30" y="496.21" font-size="11.15" text-anchor="start" fill="#cacaca" stroke="#cacaca" stroke-width="0.12" >Average:</text>
<text x="553.20" y="496.21" font-size="11.15" text-anchor="end" fill="#cacaca" stroke="#cacaca" stroke-width="0.12" >0.0%</text>
<text x="595.80" y="496.21" font-size="11.15" text-anchor="start" fill="#cacaca" stroke="#cacaca" stroke-width="0.12" >Min:</text>
<text x="663.40" y="496.21" font-size="11.15" text-anchor="end" fill="#cacaca" stroke="#cacaca" stroke-width="0.12" >0.0%</text>
<text x="706.00" y="496.21" font-size="11.15" text-anchor="start" fill="#cacaca" stroke="#cacaca" stroke-width="0.12" >Max:</text>
<text x="773.20" y="496.21" font-size="11.15" text-anchor="end" fill="#cacaca" stroke="#cacaca" stroke-width="0.12" >0.0%</text>
</g></svg>
<svg width="1388" height="843" viewBox="0 0 1388 843" font-family="'Liberation Mono',monospace" style="position:absolute;left:0;top:0;white-space:pre">
<defs><clipPath id="ccs"><rect x="0" y="127" width="1367" height="711"/></clipPath></defs>
<defs><clipPath id="acs"><path d="M905.30 272.60 L905.30 237.47 L906.30 223.17 L907.30 215.61 L908.30 217.47 L909.30 214.08 L910.30 209.35 L911.30 214.39 L912.30 222.04 L913.30 228.44 L914.30 234.09 L915.30 230.80 L916.30 228.16 L917.30 236.34 L918.30 240.46 L919.30 240.34 L920.30 241.37 L921.30 242.00 L922.30 242.82 L923.30 242.63 L924.30 243.52 L925.30 243.88 L926.30 244.20 L927.30 244.81 L928.30 244.64 L929.30 244.51 L930.30 244.70 L931.30 243.82 L932.30 244.19 L933.30 244.23 L934.30 243.68 L935.30 244.75 L936.30 244.50 L937.30 245.38 L938.30 246.83 L939.30 251.08 L940.30 253.79 L941.30 254.06 L942.30 254.19 L943.30 253.46 L944.30 254.02 L945.30 253.53 L946.30 254.04 L947.30 253.37 L948.30 253.43 L949.30 253.56 L950.30 253.55 L951.30 253.71 L952.30 253.58 L953.30 254.12 L954.30 253.80 L955.30 253.49 L956.30 254.05 L957.30 253.41 L958.30 253.44 L959.30 253.86 L960.30 253.90 L961.30 253.82 L962.30 253.88 L963.30 253.34 L964.30 253.88 L965.30 254.20 L966.30 254.14 L967.30 253.59 L968.30 253.34 L969.30 253.78 L970.30 253.79 L971.30 253.74 L972.30 253.56 L973.30 254.03 L974.30 253.68 L975.30 253.73 L976.30 253.67 L977.30 254.06 L978.30 254.07 L979.30 253.92 L980.30 253.40 L981.30 253.92 L982.30 253.69 L983.30 253.95 L984.30 254.13 L985.30 254.17 L986.30 253.50 L987.30 253.54 L988.30 253.89 L989.30 253.62 L990.30 253.63 L991.30 253.43 L992.30 253.38 L993.30 253.86 L994.30 253.35 L995.30 253.37 L996.30 253.70 L997.30 253.44 L998.30 253.79 L999.30 253.89 L1000.30 254.00 L1001.30 253.45 L1002.30 254.08 L1003.30 254.16 L1004.30 253.51 L1005.30 253.54 L1006.30 253.80 L1007.30 253.48 L1008.30 254.18 L1009.30 254.00 L1010.30 253.97 L1011.30 253.85 L1012.30 254.07 L1013.30 254.16 L1014.30 253.92 L1015.30 253.43 L1016.30 253.35 L1017.30 253.56 L1018.30 253.80 L1019.30 254.00 L1020.30 253.37 L1021.30 253.76 L1022.30 253.58 L1023.30 254.20 L1024.30 254.04 L1025.30 253.48 L1026.30 253.52 L1027.30 253.44 L1028.30 253.69 L1029.30 253.85 L1030.30 253.71 L1031.30 253.47 L1032.30 253.95 L1033.30 253.75 L1034.30 253.98 L1035.30 253.54 L1036.30 254.21 L1037.30 253.62 L1038.30 253.38 L1039.30 254.20 L1040.30 253.70 L1041.30 253.65 L1042.30 253.47 L1043.30 253.71 L1044.30 254.00 L1045.30 253.86 L1046.30 253.37 L1047.30 253.42 L1048.30 254.11 L1049.30 254.14 L1050.30 254.14 L1051.30 254.20 L1052.30 253.83 L1053.30 254.10 L1054.30 253.46 L1055.30 253.64 L1056.30 254.11 L1057.30 253.75 L1058.30 253.94 L1059.30 253.79 L1060.30 253.14 L1061.30 250.24 L1062.30 249.04 L1063.30 251.82 L1064.30 253.60 L1065.30 253.74 L1066.30 254.18 L1067.30 253.59 L1068.30 253.45 L1069.30 253.54 L1070.30 253.52 L1071.30 254.22 L1072.30 253.81 L1073.30 254.17 L1074.30 253.55 L1075.30 254.07 L1076.30 253.59 L1077.30 254.00 L1078.30 253.61 L1079.30 253.95 L1080.30 254.19 L1081.30 253.88 L1082.30 253.95 L1083.30 248.45 L1084.30 242.78 L1085.30 247.56 L1086.30 253.74 L1087.30 253.45 L1088.30 254.27 L1089.30 253.89 L1090.30 254.03 L1091.30 253.90 L1092.30 250.34 L1093.30 239.61 L1094.30 233.49 L1095.30 229.25 L1096.30 225.54 L1097.30 222.61 L1098.30 221.43 L1099.30 225.05 L1100.30 229.36 L1101.30 233.16 L1102.30 236.33 L1103.30 238.83 L1104.30 237.52 L1105.30 236.18 L1106.30 234.18 L1107.30 232.89 L1108.30 234.50 L1109.30 235.69 L1110.30 237.57 L1111.30 238.36 L1112.30 236.61 L1113.30 232.43 L1114.30 228.43 L1115.30 224.31 L1116.30 222.17 L1117.30 227.24 L1118.30 231.82 L1119.30 235.57 L1120.30 233.38 L1121.30 231.50 L1122.30 230.93 L1123.30 233.13 L1124.30 235.29 L1125.30 236.38 L1126.30 235.76 L1127.30 235.11 L1127.80 234.55 L1127.80 272.60Z"/></clipPath></defs>
<g clip-path="url(#ccs)">
<rect x="830.6" y="169.2" width="331.4" height="157.40000000000003" fill="#303030"/>
<rect x="831.5" y="170.1" width="329.59999999999997" height="155.60000000000002" fill="#4a4a4a"/>
<rect x="833.2" y="171.79999999999998" width="326.2" height="152.20000000000005" fill="#101010"/>
<rect x="905.3" y="199.0" width="222.5" height="74.0" fill="#000"/>
<path d="M902.30 265.50H1131.00" stroke="#3a2c18" stroke-width="1" stroke-dasharray="1.1 1.15" opacity="1"/>
<path d="M902.30 258.50H1131.00" stroke="#3a2c18" stroke-width="1" stroke-dasharray="1.1 1.15" opacity="1"/>
<path d="M902.30 250.50H1131.00" stroke="#3a2c18" stroke-width="1" stroke-dasharray="1.1 1.15" opacity="1"/>
<path d="M902.30 243.50H1131.00" stroke="#3a2c18" stroke-width="1" stroke-dasharray="1.1 1.15" opacity="1"/>
<path d="M902.30 228.50H1131.00" stroke="#3a2c18" stroke-width="1" stroke-dasharray="1.1 1.15" opacity="1"/>
<path d="M902.30 221.50H1131.00" stroke="#3a2c18" stroke-width="1" stroke-dasharray="1.1 1.15" opacity="1"/>
<path d="M902.30 213.50H1131.00" stroke="#3a2c18" stroke-width="1" stroke-dasharray="1.1 1.15" opacity="1"/>
<path d="M902.30 206.50H1131.00" stroke="#3a2c18" stroke-width="1" stroke-dasharray="1.1 1.15" opacity="1"/>
<path d="M906.50 199.00V275.50" stroke="#3e3e1c" stroke-width="1" stroke-dasharray="1.1 1.15" opacity="1"/>
<path d="M915.50 199.00V275.50" stroke="#3e3e1c" stroke-width="1" stroke-dasharray="1.1 1.15" opacity="1"/>
<path d="M925.50 199.00V275.50" stroke="#3e3e1c" stroke-width="1" stroke-dasharray="1.1 1.15" opacity="1"/>
<path d="M943.50 199.00V275.50" stroke="#3e3e1c" stroke-width="1" stroke-dasharray="1.1 1.15" opacity="1"/>
<path d="M953.50 199.00V275.50" stroke="#3e3e1c" stroke-width="1" stroke-dasharray="1.1 1.15" opacity="1"/>
<path d="M962.50 199.00V275.50" stroke="#3e3e1c" stroke-width="1" stroke-dasharray="1.1 1.15" opacity="1"/>
<path d="M972.50 199.00V275.50" stroke="#3e3e1c" stroke-width="1" stroke-dasharray="1.1 1.15" opacity="1"/>
<path d="M981.50 199.00V275.50" stroke="#3e3e1c" stroke-width="1" stroke-dasharray="1.1 1.15" opacity="1"/>
<path d="M1000.50 199.00V275.50" stroke="#3e3e1c" stroke-width="1" stroke-dasharray="1.1 1.15" opacity="1"/>
<path d="M1009.50 199.00V275.50" stroke="#3e3e1c" stroke-width="1" stroke-dasharray="1.1 1.15" opacity="1"/>
<path d="M1019.50 199.00V275.50" stroke="#3e3e1c" stroke-width="1" stroke-dasharray="1.1 1.15" opacity="1"/>
<path d="M1028.50 199.00V275.50" stroke="#3e3e1c" stroke-width="1" stroke-dasharray="1.1 1.15" opacity="1"/>
<path d="M1037.50 199.00V275.50" stroke="#3e3e1c" stroke-width="1" stroke-dasharray="1.1 1.15" opacity="1"/>
<path d="M1056.50 199.00V275.50" stroke="#3e3e1c" stroke-width="1" stroke-dasharray="1.1 1.15" opacity="1"/>
<path d="M1065.50 199.00V275.50" stroke="#3e3e1c" stroke-width="1" stroke-dasharray="1.1 1.15" opacity="1"/>
<path d="M1075.50 199.00V275.50" stroke="#3e3e1c" stroke-width="1" stroke-dasharray="1.1 1.15" opacity="1"/>
<path d="M1084.50 199.00V275.50" stroke="#3e3e1c" stroke-width="1" stroke-dasharray="1.1 1.15" opacity="1"/>
<path d="M1094.50 199.00V275.50" stroke="#3e3e1c" stroke-width="1" stroke-dasharray="1.1 1.15" opacity="1"/>
<path d="M1112.50 199.00V275.50" stroke="#3e3e1c" stroke-width="1" stroke-dasharray="1.1 1.15" opacity="1"/>
<path d="M1122.50 199.00V275.50" stroke="#3e3e1c" stroke-width="1" stroke-dasharray="1.1 1.15" opacity="1"/>
<path d="M902.30 273.50H1131.00" stroke="#a4b0a4" stroke-width="1" stroke-dasharray="1.1 1.15" opacity="1"/>
<path d="M902.30 236.50H1131.00" stroke="#a4b0a4" stroke-width="1" stroke-dasharray="1.1 1.15" opacity="1"/>
<path d="M902.30 199.50H1131.00" stroke="#a4b0a4" stroke-width="1" stroke-dasharray="1.1 1.15" opacity="1"/>
<path d="M934.50 199.00V275.50" stroke="#8a9e8a" stroke-width="1" stroke-dasharray="1.1 1.15" opacity="1"/>
<path d="M990.50 199.00V275.50" stroke="#8a9e8a" stroke-width="1" stroke-dasharray="1.1 1.15" opacity="1"/>
<path d="M1047.50 199.00V275.50" stroke="#8a9e8a" stroke-width="1" stroke-dasharray="1.1 1.15" opacity="1"/>
<path d="M1103.50 199.00V275.50" stroke="#8a9e8a" stroke-width="1" stroke-dasharray="1.1 1.15" opacity="1"/>
<path d="M905.30 272.60 L905.30 237.47 L906.30 223.17 L907.30 215.61 L908.30 217.47 L909.30 214.08 L910.30 209.35 L911.30 214.39 L912.30 222.04 L913.30 228.44 L914.30 234.09 L915.30 230.80 L916.30 228.16 L917.30 236.34 L918.30 240.46 L919.30 240.34 L920.30 241.37 L921.30 242.00 L922.30 242.82 L923.30 242.63 L924.30 243.52 L925.30 243.88 L926.30 244.20 L927.30 244.81 L928.30 244.64 L929.30 244.51 L930.30 244.70 L931.30 243.82 L932.30 244.19 L933.30 244.23 L934.30 243.68 L935.30 244.75 L936.30 244.50 L937.30 245.38 L938.30 246.83 L939.30 251.08 L940.30 253.79 L941.30 254.06 L942.30 254.19 L943.30 253.46 L944.30 254.02 L945.30 253.53 L946.30 254.04 L947.30 253.37 L948.30 253.43 L949.30 253.56 L950.30 253.55 L951.30 253.71 L952.30 253.58 L953.30 254.12 L954.30 253.80 L955.30 253.49 L956.30 254.05 L957.30 253.41 L958.30 253.44 L959.30 253.86 L960.30 253.90 L961.30 253.82 L962.30 253.88 L963.30 253.34 L964.30 253.88 L965.30 254.20 L966.30 254.14 L967.30 253.59 L968.30 253.34 L969.30 253.78 L970.30 253.79 L971.30 253.74 L972.30 253.56 L973.30 254.03 L974.30 253.68 L975.30 253.73 L976.30 253.67 L977.30 254.06 L978.30 254.07 L979.30 253.92 L980.30 253.40 L981.30 253.92 L982.30 253.69 L983.30 253.95 L984.30 254.13 L985.30 254.17 L986.30 253.50 L987.30 253.54 L988.30 253.89 L989.30 253.62 L990.30 253.63 L991.30 253.43 L992.30 253.38 L993.30 253.86 L994.30 253.35 L995.30 253.37 L996.30 253.70 L997.30 253.44 L998.30 253.79 L999.30 253.89 L1000.30 254.00 L1001.30 253.45 L1002.30 254.08 L1003.30 254.16 L1004.30 253.51 L1005.30 253.54 L1006.30 253.80 L1007.30 253.48 L1008.30 254.18 L1009.30 254.00 L1010.30 253.97 L1011.30 253.85 L1012.30 254.07 L1013.30 254.16 L1014.30 253.92 L1015.30 253.43 L1016.30 253.35 L1017.30 253.56 L1018.30 253.80 L1019.30 254.00 L1020.30 253.37 L1021.30 253.76 L1022.30 253.58 L1023.30 254.20 L1024.30 254.04 L1025.30 253.48 L1026.30 253.52 L1027.30 253.44 L1028.30 253.69 L1029.30 253.85 L1030.30 253.71 L1031.30 253.47 L1032.30 253.95 L1033.30 253.75 L1034.30 253.98 L1035.30 253.54 L1036.30 254.21 L1037.30 253.62 L1038.30 253.38 L1039.30 254.20 L1040.30 253.70 L1041.30 253.65 L1042.30 253.47 L1043.30 253.71 L1044.30 254.00 L1045.30 253.86 L1046.30 253.37 L1047.30 253.42 L1048.30 254.11 L1049.30 254.14 L1050.30 254.14 L1051.30 254.20 L1052.30 253.83 L1053.30 254.10 L1054.30 253.46 L1055.30 253.64 L1056.30 254.11 L1057.30 253.75 L1058.30 253.94 L1059.30 253.79 L1060.30 253.14 L1061.30 250.24 L1062.30 249.04 L1063.30 251.82 L1064.30 253.60 L1065.30 253.74 L1066.30 254.18 L1067.30 253.59 L1068.30 253.45 L1069.30 253.54 L1070.30 253.52 L1071.30 254.22 L1072.30 253.81 L1073.30 254.17 L1074.30 253.55 L1075.30 254.07 L1076.30 253.59 L1077.30 254.00 L1078.30 253.61 L1079.30 253.95 L1080.30 254.19 L1081.30 253.88 L1082.30 253.95 L1083.30 248.45 L1084.30 242.78 L1085.30 247.56 L1086.30 253.74 L1087.30 253.45 L1088.30 254.27 L1089.30 253.89 L1090.30 254.03 L1091.30 253.90 L1092.30 250.34 L1093.30 239.61 L1094.30 233.49 L1095.30 229.25 L1096.30 225.54 L1097.30 222.61 L1098.30 221.43 L1099.30 225.05 L1100.30 229.36 L1101.30 233.16 L1102.30 236.33 L1103.30 238.83 L1104.30 237.52 L1105.30 236.18 L1106.30 234.18 L1107.30 232.89 L1108.30 234.50 L1109.30 235.69 L1110.30 237.57 L1111.30 238.36 L1112.30 236.61 L1113.30 232.43 L1114.30 228.43 L1115.30 224.31 L1116.30 222.17 L1117.30 227.24 L1118.30 231.82 L1119.30 235.57 L1120.30 233.38 L1121.30 231.50 L1122.30 230.93 L1123.30 233.13 L1124.30 235.29 L1125.30 236.38 L1126.30 235.76 L1127.30 235.11 L1127.80 234.55 L1127.80 272.60Z" fill="#44AAEE"/>
<path d="M905.30 272.60 L905.30 271.68 L909.30 271.68 L913.30 271.68 L917.30 271.68 L921.30 271.68 L925.30 271.68 L929.30 271.68 L933.30 271.68 L937.30 271.68 L941.30 271.68 L945.30 271.68 L949.30 271.68 L953.30 271.68 L957.30 271.68 L961.30 271.68 L965.30 271.68 L969.30 271.68 L973.30 271.68 L977.30 271.68 L981.30 271.68 L985.30 271.68 L989.30 271.68 L993.30 271.68 L997.30 271.68 L1001.30 271.68 L1005.30 271.68 L1009.30 271.68 L1013.30 271.68 L1017.30 271.68 L1021.30 271.68 L1025.30 271.68 L1029.30 271.68 L1033.30 271.68 L1037.30 271.68 L1041.30 271.68 L1045.30 271.68 L1049.30 271.68 L1053.30 271.68 L1057.30 271.68 L1061.30 271.68 L1065.30 271.68 L1069.30 271.68 L1073.30 271.68 L1077.30 271.68 L1081.30 271.68 L1085.30 271.68 L1089.30 271.68 L1093.30 271.68 L1097.30 271.68 L1101.30 271.68 L1105.30 271.68 L1109.30 271.68 L1113.30 271.68 L1117.30 271.68 L1121.30 271.68 L1125.30 271.68 L1127.80 271.68 L1127.80 272.60Z" fill="#4444EE"/>
<g clip-path="url(#acs)"><g opacity="0.28"><path d="M902.30 265.50H1131.00" stroke="#3a2c18" stroke-width="1" stroke-dasharray="1.1 1.15" opacity="1"/><path d="M902.30 258.50H1131.00" stroke="#3a2c18" stroke-width="1" stroke-dasharray="1.1 1.15" opacity="1"/><path d="M902.30 250.50H1131.00" stroke="#3a2c18" stroke-width="1" stroke-dasharray="1.1 1.15" opacity="1"/><path d="M902.30 243.50H1131.00" stroke="#3a2c18" stroke-width="1" stroke-dasharray="1.1 1.15" opacity="1"/><path d="M902.30 228.50H1131.00" stroke="#3a2c18" stroke-width="1" stroke-dasharray="1.1 1.15" opacity="1"/><path d="M902.30 221.50H1131.00" stroke="#3a2c18" stroke-width="1" stroke-dasharray="1.1 1.15" opacity="1"/><path d="M902.30 213.50H1131.00" stroke="#3a2c18" stroke-width="1" stroke-dasharray="1.1 1.15" opacity="1"/><path d="M902.30 206.50H1131.00" stroke="#3a2c18" stroke-width="1" stroke-dasharray="1.1 1.15" opacity="1"/><path d="M906.50 199.00V275.50" stroke="#3e3e1c" stroke-width="1" stroke-dasharray="1.1 1.15" opacity="1"/><path d="M915.50 199.00V275.50" stroke="#3e3e1c" stroke-width="1" stroke-dasharray="1.1 1.15" opacity="1"/><path d="M925.50 199.00V275.50" stroke="#3e3e1c" stroke-width="1" stroke-dasharray="1.1 1.15" opacity="1"/><path d="M943.50 199.00V275.50" stroke="#3e3e1c" stroke-width="1" stroke-dasharray="1.1 1.15" opacity="1"/><path d="M953.50 199.00V275.50" stroke="#3e3e1c" stroke-width="1" stroke-dasharray="1.1 1.15" opacity="1"/><path d="M962.50 199.00V275.50" stroke="#3e3e1c" stroke-width="1" stroke-dasharray="1.1 1.15" opacity="1"/><path d="M972.50 199.00V275.50" stroke="#3e3e1c" stroke-width="1" stroke-dasharray="1.1 1.15" opacity="1"/><path d="M981.50 199.00V275.50" stroke="#3e3e1c" stroke-width="1" stroke-dasharray="1.1 1.15" opacity="1"/><path d="M1000.50 199.00V275.50" stroke="#3e3e1c" stroke-width="1" stroke-dasharray="1.1 1.15" opacity="1"/><path d="M1009.50 199.00V275.50" stroke="#3e3e1c" stroke-width="1" stroke-dasharray="1.1 1.15" opacity="1"/><path d="M1019.50 199.00V275.50" stroke="#3e3e1c" stroke-width="1" stroke-dasharray="1.1 1.15" opacity="1"/><path d="M1028.50 199.00V275.50" stroke="#3e3e1c" stroke-width="1" stroke-dasharray="1.1 1.15" opacity="1"/><path d="M1037.50 199.00V275.50" stroke="#3e3e1c" stroke-width="1" stroke-dasharray="1.1 1.15" opacity="1"/><path d="M1056.50 199.00V275.50" stroke="#3e3e1c" stroke-width="1" stroke-dasharray="1.1 1.15" opacity="1"/><path d="M1065.50 199.00V275.50" stroke="#3e3e1c" stroke-width="1" stroke-dasharray="1.1 1.15" opacity="1"/><path d="M1075.50 199.00V275.50" stroke="#3e3e1c" stroke-width="1" stroke-dasharray="1.1 1.15" opacity="1"/><path d="M1084.50 199.00V275.50" stroke="#3e3e1c" stroke-width="1" stroke-dasharray="1.1 1.15" opacity="1"/><path d="M1094.50 199.00V275.50" stroke="#3e3e1c" stroke-width="1" stroke-dasharray="1.1 1.15" opacity="1"/><path d="M1112.50 199.00V275.50" stroke="#3e3e1c" stroke-width="1" stroke-dasharray="1.1 1.15" opacity="1"/><path d="M1122.50 199.00V275.50" stroke="#3e3e1c" stroke-width="1" stroke-dasharray="1.1 1.15" opacity="1"/></g><g opacity="0.12"><path d="M902.30 273.50H1131.00" stroke="#a4b0a4" stroke-width="1" stroke-dasharray="1.1 1.15" opacity="1"/><path d="M902.30 236.50H1131.00" stroke="#a4b0a4" stroke-width="1" stroke-dasharray="1.1 1.15" opacity="1"/><path d="M902.30 199.50H1131.00" stroke="#a4b0a4" stroke-width="1" stroke-dasharray="1.1 1.15" opacity="1"/><path d="M934.50 199.00V275.50" stroke="#8a9e8a" stroke-width="1" stroke-dasharray="1.1 1.15" opacity="1"/><path d="M990.50 199.00V275.50" stroke="#8a9e8a" stroke-width="1" stroke-dasharray="1.1 1.15" opacity="1"/><path d="M1047.50 199.00V275.50" stroke="#8a9e8a" stroke-width="1" stroke-dasharray="1.1 1.15" opacity="1"/><path d="M1103.50 199.00V275.50" stroke="#8a9e8a" stroke-width="1" stroke-dasharray="1.1 1.15" opacity="1"/></g></g>
<path d="M901.40 196.90 L904.60 191.30 L907.80 196.90Z" fill="#fff"/>
<path d="M1130.60 269.40 L1136.60 272.70 L1130.60 276.00Z" fill="#fff"/>
<path d="M905.30 237.47 L906.30 223.17 L907.30 215.61 L908.30 217.47 L909.30 214.08 L910.30 209.35 L911.30 214.39 L912.30 222.04 L913.30 228.44 L914.30 234.09 L915.30 230.80 L916.30 228.16 L917.30 236.34 L918.30 240.46 L919.30 240.34 L920.30 241.37 L921.30 242.00 L922.30 242.82 L923.30 242.63 L924.30 243.52 L925.30 243.88 L926.30 244.20 L927.30 244.81 L928.30 244.64 L929.30 244.51 L930.30 244.70 L931.30 243.82 L932.30 244.19 L933.30 244.23 L934.30 243.68 L935.30 244.75 L936.30 244.50 L937.30 245.38 L938.30 246.83 L939.30 251.08 L940.30 253.79 L941.30 254.06 L942.30 254.19 L943.30 253.46 L944.30 254.02 L945.30 253.53 L946.30 254.04 L947.30 253.37 L948.30 253.43 L949.30 253.56 L950.30 253.55 L951.30 253.71 L952.30 253.58 L953.30 254.12 L954.30 253.80 L955.30 253.49 L956.30 254.05 L957.30 253.41 L958.30 253.44 L959.30 253.86 L960.30 253.90 L961.30 253.82 L962.30 253.88 L963.30 253.34 L964.30 253.88 L965.30 254.20 L966.30 254.14 L967.30 253.59 L968.30 253.34 L969.30 253.78 L970.30 253.79 L971.30 253.74 L972.30 253.56 L973.30 254.03 L974.30 253.68 L975.30 253.73 L976.30 253.67 L977.30 254.06 L978.30 254.07 L979.30 253.92 L980.30 253.40 L981.30 253.92 L982.30 253.69 L983.30 253.95 L984.30 254.13 L985.30 254.17 L986.30 253.50 L987.30 253.54 L988.30 253.89 L989.30 253.62 L990.30 253.63 L991.30 253.43 L992.30 253.38 L993.30 253.86 L994.30 253.35 L995.30 253.37 L996.30 253.70 L997.30 253.44 L998.30 253.79 L999.30 253.89 L1000.30 254.00 L1001.30 253.45 L1002.30 254.08 L1003.30 254.16 L1004.30 253.51 L1005.30 253.54 L1006.30 253.80 L1007.30 253.48 L1008.30 254.18 L1009.30 254.00 L1010.30 253.97 L1011.30 253.85 L1012.30 254.07 L1013.30 254.16 L1014.30 253.92 L1015.30 253.43 L1016.30 253.35 L1017.30 253.56 L1018.30 253.80 L1019.30 254.00 L1020.30 253.37 L1021.30 253.76 L1022.30 253.58 L1023.30 254.20 L1024.30 254.04 L1025.30 253.48 L1026.30 253.52 L1027.30 253.44 L1028.30 253.69 L1029.30 253.85 L1030.30 253.71 L1031.30 253.47 L1032.30 253.95 L1033.30 253.75 L1034.30 253.98 L1035.30 253.54 L1036.30 254.21 L1037.30 253.62 L1038.30 253.38 L1039.30 254.20 L1040.30 253.70 L1041.30 253.65 L1042.30 253.47 L1043.30 253.71 L1044.30 254.00 L1045.30 253.86 L1046.30 253.37 L1047.30 253.42 L1048.30 254.11 L1049.30 254.14 L1050.30 254.14 L1051.30 254.20 L1052.30 253.83 L1053.30 254.10 L1054.30 253.46 L1055.30 253.64 L1056.30 254.11 L1057.30 253.75 L1058.30 253.94 L1059.30 253.79 L1060.30 253.14 L1061.30 250.24 L1062.30 249.04 L1063.30 251.82 L1064.30 253.60 L1065.30 253.74 L1066.30 254.18 L1067.30 253.59 L1068.30 253.45 L1069.30 253.54 L1070.30 253.52 L1071.30 254.22 L1072.30 253.81 L1073.30 254.17 L1074.30 253.55 L1075.30 254.07 L1076.30 253.59 L1077.30 254.00 L1078.30 253.61 L1079.30 253.95 L1080.30 254.19 L1081.30 253.88 L1082.30 253.95 L1083.30 248.45 L1084.30 242.78 L1085.30 247.56 L1086.30 253.74 L1087.30 253.45 L1088.30 254.27 L1089.30 253.89 L1090.30 254.03 L1091.30 253.90 L1092.30 250.34 L1093.30 239.61 L1094.30 233.49 L1095.30 229.25 L1096.30 225.54 L1097.30 222.61 L1098.30 221.43 L1099.30 225.05 L1100.30 229.36 L1101.30 233.16 L1102.30 236.33 L1103.30 238.83 L1104.30 237.52 L1105.30 236.18 L1106.30 234.18 L1107.30 232.89 L1108.30 234.50 L1109.30 235.69 L1110.30 237.57 L1111.30 238.36 L1112.30 236.61 L1113.30 232.43 L1114.30 228.43 L1115.30 224.31 L1116.30 222.17 L1117.30 227.24 L1118.30 231.82 L1119.30 235.57 L1120.30 233.38 L1121.30 231.50 L1122.30 230.93 L1123.30 233.13 L1124.30 235.29 L1125.30 236.38 L1126.30 235.76 L1127.30 235.11 L1127.80 234.55" fill="none" stroke="#00EEEE" stroke-width="1.0"/>
<text x="863.70" y="194.00" font-size="13.0" text-anchor="start" fill="#cacaca" stroke="#cacaca" stroke-width="0.12" >Context switches and forks &#160;(1day)</text>
<text x="0" y="0" font-size="11.3" text-anchor="middle" dominant-baseline="central" fill="#c0c0c0" transform="translate(843.20 236.20) rotate(-90)" textLength="80" lengthAdjust="spacingAndGlyphs" >CS &amp; forks/s</text>
<text x="0" y="0" font-size="8.4" text-anchor="middle" dominant-baseline="central" fill="#323232" transform="translate(1153.20 237.60) rotate(90)" textLength="124" lengthAdjust="spacingAndGlyphs" font-family="Liberation Mono" font-weight="bold">RRDTOOL / TOBI OETIKER</text>
<text x="896.40" y="203.30" font-size="11.15" text-anchor="end" fill="#cacaca" stroke="#cacaca" stroke-width="0.12" xml:space="preserve">20 k</text>
<text x="896.40" y="240.20" font-size="11.15" text-anchor="end" fill="#cacaca" stroke="#cacaca" stroke-width="0.12" xml:space="preserve">10 k</text>
<text x="896.40" y="277.10" font-size="11.15" text-anchor="end" fill="#cacaca" stroke="#cacaca" stroke-width="0.12" xml:space="preserve">0 &#160;</text>
<text x="934.60" y="287.10" font-size="11.15" text-anchor="middle" fill="#cacaca" stroke="#cacaca" stroke-width="0.12" >18:00</text>
<text x="990.90" y="287.10" font-size="11.15" text-anchor="middle" fill="#cacaca" stroke="#cacaca" stroke-width="0.12" >00:00</text>
<text x="1047.10" y="287.10" font-size="11.15" text-anchor="middle" fill="#cacaca" stroke="#cacaca" stroke-width="0.12" >06:00</text>
<text x="1103.30" y="287.10" font-size="11.15" text-anchor="middle" fill="#cacaca" stroke="#cacaca" stroke-width="0.12" >12:00</text>
<rect x="846.00" y="296.00" width="9.4" height="9.4" fill="#a0a0a0"/><rect x="847.10" y="297.10" width="7.2" height="7.2" fill="#44AAEE"/>
<text x="861.20" y="304.50" font-size="11.15" text-anchor="start" fill="#cacaca" stroke="#cacaca" stroke-width="0.12" >Context switches</text>
<text x="1018.30" y="304.50" font-size="11.15" text-anchor="start" fill="#cacaca" stroke="#cacaca" stroke-width="0.12" >Current:</text>
<text x="1118.40" y="304.50" font-size="11.15" text-anchor="end" fill="#cacaca" stroke="#cacaca" stroke-width="0.12" >10407</text>
<rect x="846.00" y="309.50" width="9.4" height="9.4" fill="#a0a0a0"/><rect x="847.10" y="310.60" width="7.2" height="7.2" fill="#4444EE"/>
<text x="861.20" y="318.00" font-size="11.15" text-anchor="start" fill="#cacaca" stroke="#cacaca" stroke-width="0.12" >Forks</text>
<text x="1018.30" y="318.00" font-size="11.15" text-anchor="start" fill="#cacaca" stroke="#cacaca" stroke-width="0.12" >Current:</text>
<text x="1118.40" y="318.00" font-size="11.15" text-anchor="end" fill="#cacaca" stroke="#cacaca" stroke-width="0.12" >4</text>
</g></svg>
<svg width="1388" height="843" viewBox="0 0 1388 843" font-family="'Liberation Mono',monospace" style="position:absolute;left:0;top:0;white-space:pre">
<defs><clipPath id="cvfs"><rect x="0" y="127" width="1367" height="711"/></clipPath></defs>
<defs><clipPath id="avfs"><path d="M905.30 430.00 L905.30 384.67 L906.30 384.67 L907.30 384.67 L908.30 384.67 L909.30 384.67 L910.30 384.67 L911.30 384.67 L912.30 384.67 L913.30 384.67 L914.30 384.67 L915.30 384.67 L916.30 384.67 L917.30 384.40 L918.30 383.48 L919.30 381.87 L920.30 378.66 L921.30 375.44 L922.30 372.23 L923.30 369.02 L924.30 365.81 L925.30 362.60 L926.30 361.16 L927.30 360.90 L928.30 360.72 L929.30 360.72 L930.30 360.72 L931.30 360.72 L932.30 360.72 L933.30 360.72 L934.30 360.72 L935.30 360.72 L936.30 360.72 L937.30 360.72 L938.30 360.72 L939.30 360.72 L940.30 360.72 L941.30 360.72 L942.30 360.72 L943.30 360.72 L944.30 360.72 L945.30 360.72 L946.30 360.72 L947.30 360.72 L948.30 360.72 L949.30 360.72 L950.30 360.72 L951.30 360.72 L952.30 360.72 L953.30 360.72 L954.30 360.72 L955.30 360.72 L956.30 360.72 L957.30 360.72 L958.30 360.72 L959.30 360.72 L960.30 360.72 L961.30 360.72 L962.30 360.72 L963.30 360.72 L964.30 360.72 L965.30 360.72 L966.30 360.72 L967.30 360.72 L968.30 360.72 L969.30 360.72 L970.30 360.72 L971.30 360.72 L972.30 360.72 L973.30 360.72 L974.30 360.72 L975.30 360.72 L976.30 360.72 L977.30 360.72 L978.30 360.72 L979.30 360.72 L980.30 360.72 L981.30 360.72 L982.30 360.72 L983.30 360.72 L984.30 360.72 L985.30 360.72 L986.30 360.72 L987.30 360.72 L988.30 360.72 L989.30 360.72 L990.30 360.72 L991.30 360.72 L992.30 360.72 L993.30 360.72 L994.30 360.72 L995.30 360.72 L996.30 360.72 L997.30 360.72 L998.30 360.72 L999.30 360.72 L1000.30 360.72 L1001.30 360.72 L1002.30 360.72 L1003.30 360.72 L1004.30 360.72 L1005.30 360.72 L1006.30 360.72 L1007.30 360.72 L1008.30 360.72 L1009.30 360.72 L1010.30 360.72 L1011.30 360.72 L1012.30 360.72 L1013.30 360.72 L1014.30 360.72 L1015.30 360.72 L1016.30 360.72 L1017.30 360.72 L1018.30 360.72 L1019.30 360.72 L1020.30 360.72 L1021.30 360.72 L1022.30 360.72 L1023.30 360.72 L1024.30 360.72 L1025.30 360.72 L1026.30 360.72 L1027.30 360.72 L1028.30 360.72 L1029.30 360.72 L1030.30 360.72 L1031.30 360.72 L1032.30 360.72 L1033.30 360.72 L1034.30 360.72 L1035.30 360.72 L1036.30 360.72 L1037.30 360.72 L1038.30 360.72 L1039.30 360.72 L1040.30 360.72 L1041.30 360.72 L1042.30 360.72 L1043.30 360.72 L1044.30 360.72 L1045.30 360.72 L1046.30 360.72 L1047.30 360.72 L1048.30 360.72 L1049.30 360.72 L1050.30 360.72 L1051.30 360.72 L1052.30 360.72 L1053.30 360.72 L1054.30 360.72 L1055.30 360.79 L1056.30 361.01 L1057.30 361.23 L1058.30 361.45 L1059.30 361.67 L1060.30 361.83 L1061.30 361.83 L1062.30 361.83 L1063.30 361.83 L1064.30 361.83 L1065.30 361.83 L1066.30 361.83 L1067.30 361.83 L1068.30 361.83 L1069.30 361.83 L1070.30 361.83 L1071.30 361.83 L1072.30 361.83 L1073.30 361.83 L1074.30 361.83 L1075.30 361.83 L1076.30 361.83 L1077.30 361.83 L1078.30 361.83 L1079.30 361.83 L1080.30 361.83 L1081.30 361.83 L1082.30 361.83 L1083.30 365.36 L1084.30 370.40 L1085.30 374.51 L1086.30 374.91 L1087.30 375.32 L1088.30 375.72 L1089.30 376.13 L1090.30 376.53 L1091.30 376.93 L1092.30 377.34 L1093.30 377.74 L1094.30 378.14 L1095.30 378.55 L1096.30 378.95 L1097.30 379.35 L1098.30 379.36 L1099.30 379.11 L1100.30 378.86 L1101.30 378.61 L1102.30 378.35 L1103.30 378.10 L1104.30 377.85 L1105.30 377.61 L1106.30 377.41 L1107.30 377.22 L1108.30 377.02 L1109.30 376.82 L1110.30 376.62 L1111.30 376.42 L1112.30 376.22 L1113.30 376.02 L1114.30 375.82 L1115.30 375.72 L1116.30 375.85 L1117.30 375.97 L1118.30 376.10 L1119.30 376.22 L1120.30 376.35 L1121.30 376.47 L1122.30 376.60 L1123.30 376.72 L1124.30 376.85 L1125.30 376.94 L1126.30 376.94 L1127.30 376.94 L1127.80 376.94 L1127.80 430.00Z"/></clipPath></defs>
<g clip-path="url(#cvfs)">
<rect x="830.6" y="328.0" width="331.4" height="170.60000000000002" fill="#303030"/>
<rect x="831.5" y="328.9" width="329.59999999999997" height="168.8" fill="#4a4a4a"/>
<rect x="833.2" y="330.6" width="326.2" height="165.40000000000003" fill="#101010"/>
<rect x="905.3" y="356.3" width="222.5" height="73.69999999999999" fill="#000"/>
<path d="M902.30 422.50H1131.00" stroke="#3a2c18" stroke-width="1" stroke-dasharray="1.1 1.15" opacity="1"/>
<path d="M902.30 415.50H1131.00" stroke="#3a2c18" stroke-width="1" stroke-dasharray="1.1 1.15" opacity="1"/>
<path d="M902.30 407.50H1131.00" stroke="#3a2c18" stroke-width="1" stroke-dasharray="1.1 1.15" opacity="1"/>
<path d="M902.30 400.50H1131.00" stroke="#3a2c18" stroke-width="1" stroke-dasharray="1.1 1.15" opacity="1"/>
<path d="M902.30 385.50H1131.00" stroke="#3a2c18" stroke-width="1" stroke-dasharray="1.1 1.15" opacity="1"/>
<path d="M902.30 378.50H1131.00" stroke="#3a2c18" stroke-width="1" stroke-dasharray="1.1 1.15" opacity="1"/>
<path d="M902.30 370.50H1131.00" stroke="#3a2c18" stroke-width="1" stroke-dasharray="1.1 1.15" opacity="1"/>
<path d="M902.30 363.50H1131.00" stroke="#3a2c18" stroke-width="1" stroke-dasharray="1.1 1.15" opacity="1"/>
<path d="M906.50 356.30V432.50" stroke="#3e3e1c" stroke-width="1" stroke-dasharray="1.1 1.15" opacity="1"/>
<path d="M915.50 356.30V432.50" stroke="#3e3e1c" stroke-width="1" stroke-dasharray="1.1 1.15" opacity="1"/>
<path d="M925.50 356.30V432.50" stroke="#3e3e1c" stroke-width="1" stroke-dasharray="1.1 1.15" opacity="1"/>
<path d="M943.50 356.30V432.50" stroke="#3e3e1c" stroke-width="1" stroke-dasharray="1.1 1.15" opacity="1"/>
<path d="M953.50 356.30V432.50" stroke="#3e3e1c" stroke-width="1" stroke-dasharray="1.1 1.15" opacity="1"/>
<path d="M962.50 356.30V432.50" stroke="#3e3e1c" stroke-width="1" stroke-dasharray="1.1 1.15" opacity="1"/>
<path d="M972.50 356.30V432.50" stroke="#3e3e1c" stroke-width="1" stroke-dasharray="1.1 1.15" opacity="1"/>
<path d="M981.50 356.30V432.50" stroke="#3e3e1c" stroke-width="1" stroke-dasharray="1.1 1.15" opacity="1"/>
<path d="M1000.50 356.30V432.50" stroke="#3e3e1c" stroke-width="1" stroke-dasharray="1.1 1.15" opacity="1"/>
<path d="M1009.50 356.30V432.50" stroke="#3e3e1c" stroke-width="1" stroke-dasharray="1.1 1.15" opacity="1"/>
<path d="M1019.50 356.30V432.50" stroke="#3e3e1c" stroke-width="1" stroke-dasharray="1.1 1.15" opacity="1"/>
<path d="M1028.50 356.30V432.50" stroke="#3e3e1c" stroke-width="1" stroke-dasharray="1.1 1.15" opacity="1"/>
<path d="M1037.50 356.30V432.50" stroke="#3e3e1c" stroke-width="1" stroke-dasharray="1.1 1.15" opacity="1"/>
<path d="M1056.50 356.30V432.50" stroke="#3e3e1c" stroke-width="1" stroke-dasharray="1.1 1.15" opacity="1"/>
<path d="M1065.50 356.30V432.50" stroke="#3e3e1c" stroke-width="1" stroke-dasharray="1.1 1.15" opacity="1"/>
<path d="M1075.50 356.30V432.50" stroke="#3e3e1c" stroke-width="1" stroke-dasharray="1.1 1.15" opacity="1"/>
<path d="M1084.50 356.30V432.50" stroke="#3e3e1c" stroke-width="1" stroke-dasharray="1.1 1.15" opacity="1"/>
<path d="M1094.50 356.30V432.50" stroke="#3e3e1c" stroke-width="1" stroke-dasharray="1.1 1.15" opacity="1"/>
<path d="M1112.50 356.30V432.50" stroke="#3e3e1c" stroke-width="1" stroke-dasharray="1.1 1.15" opacity="1"/>
<path d="M1122.50 356.30V432.50" stroke="#3e3e1c" stroke-width="1" stroke-dasharray="1.1 1.15" opacity="1"/>
<path d="M902.30 430.50H1131.00" stroke="#a4b0a4" stroke-width="1" stroke-dasharray="1.1 1.15" opacity="1"/>
<path d="M902.30 393.50H1131.00" stroke="#a4b0a4" stroke-width="1" stroke-dasharray="1.1 1.15" opacity="1"/>
<path d="M902.30 356.50H1131.00" stroke="#a4b0a4" stroke-width="1" stroke-dasharray="1.1 1.15" opacity="1"/>
<path d="M934.50 356.30V432.50" stroke="#8a9e8a" stroke-width="1" stroke-dasharray="1.1 1.15" opacity="1"/>
<path d="M990.50 356.30V432.50" stroke="#8a9e8a" stroke-width="1" stroke-dasharray="1.1 1.15" opacity="1"/>
<path d="M1047.50 356.30V432.50" stroke="#8a9e8a" stroke-width="1" stroke-dasharray="1.1 1.15" opacity="1"/>
<path d="M1103.50 356.30V432.50" stroke="#8a9e8a" stroke-width="1" stroke-dasharray="1.1 1.15" opacity="1"/>
<path d="M905.30 430.00 L905.30 384.67 L906.30 384.67 L907.30 384.67 L908.30 384.67 L909.30 384.67 L910.30 384.67 L911.30 384.67 L912.30 384.67 L913.30 384.67 L914.30 384.67 L915.30 384.67 L916.30 384.67 L917.30 384.40 L918.30 383.48 L919.30 381.87 L920.30 378.66 L921.30 375.44 L922.30 372.23 L923.30 369.02 L924.30 365.81 L925.30 362.60 L926.30 361.16 L927.30 360.90 L928.30 360.72 L929.30 360.72 L930.30 360.72 L931.30 360.72 L932.30 360.72 L933.30 360.72 L934.30 360.72 L935.30 360.72 L936.30 360.72 L937.30 360.72 L938.30 360.72 L939.30 360.72 L940.30 360.72 L941.30 360.72 L942.30 360.72 L943.30 360.72 L944.30 360.72 L945.30 360.72 L946.30 360.72 L947.30 360.72 L948.30 360.72 L949.30 360.72 L950.30 360.72 L951.30 360.72 L952.30 360.72 L953.30 360.72 L954.30 360.72 L955.30 360.72 L956.30 360.72 L957.30 360.72 L958.30 360.72 L959.30 360.72 L960.30 360.72 L961.30 360.72 L962.30 360.72 L963.30 360.72 L964.30 360.72 L965.30 360.72 L966.30 360.72 L967.30 360.72 L968.30 360.72 L969.30 360.72 L970.30 360.72 L971.30 360.72 L972.30 360.72 L973.30 360.72 L974.30 360.72 L975.30 360.72 L976.30 360.72 L977.30 360.72 L978.30 360.72 L979.30 360.72 L980.30 360.72 L981.30 360.72 L982.30 360.72 L983.30 360.72 L984.30 360.72 L985.30 360.72 L986.30 360.72 L987.30 360.72 L988.30 360.72 L989.30 360.72 L990.30 360.72 L991.30 360.72 L992.30 360.72 L993.30 360.72 L994.30 360.72 L995.30 360.72 L996.30 360.72 L997.30 360.72 L998.30 360.72 L999.30 360.72 L1000.30 360.72 L1001.30 360.72 L1002.30 360.72 L1003.30 360.72 L1004.30 360.72 L1005.30 360.72 L1006.30 360.72 L1007.30 360.72 L1008.30 360.72 L1009.30 360.72 L1010.30 360.72 L1011.30 360.72 L1012.30 360.72 L1013.30 360.72 L1014.30 360.72 L1015.30 360.72 L1016.30 360.72 L1017.30 360.72 L1018.30 360.72 L1019.30 360.72 L1020.30 360.72 L1021.30 360.72 L1022.30 360.72 L1023.30 360.72 L1024.30 360.72 L1025.30 360.72 L1026.30 360.72 L1027.30 360.72 L1028.30 360.72 L1029.30 360.72 L1030.30 360.72 L1031.30 360.72 L1032.30 360.72 L1033.30 360.72 L1034.30 360.72 L1035.30 360.72 L1036.30 360.72 L1037.30 360.72 L1038.30 360.72 L1039.30 360.72 L1040.30 360.72 L1041.30 360.72 L1042.30 360.72 L1043.30 360.72 L1044.30 360.72 L1045.30 360.72 L1046.30 360.72 L1047.30 360.72 L1048.30 360.72 L1049.30 360.72 L1050.30 360.72 L1051.30 360.72 L1052.30 360.72 L1053.30 360.72 L1054.30 360.72 L1055.30 360.79 L1056.30 361.01 L1057.30 361.23 L1058.30 361.45 L1059.30 361.67 L1060.30 361.83 L1061.30 361.83 L1062.30 361.83 L1063.30 361.83 L1064.30 361.83 L1065.30 361.83 L1066.30 361.83 L1067.30 361.83 L1068.30 361.83 L1069.30 361.83 L1070.30 361.83 L1071.30 361.83 L1072.30 361.83 L1073.30 361.83 L1074.30 361.83 L1075.30 361.83 L1076.30 361.83 L1077.30 361.83 L1078.30 361.83 L1079.30 361.83 L1080.30 361.83 L1081.30 361.83 L1082.30 361.83 L1083.30 365.36 L1084.30 370.40 L1085.30 374.51 L1086.30 374.91 L1087.30 375.32 L1088.30 375.72 L1089.30 376.13 L1090.30 376.53 L1091.30 376.93 L1092.30 377.34 L1093.30 377.74 L1094.30 378.14 L1095.30 378.55 L1096.30 378.95 L1097.30 379.35 L1098.30 379.36 L1099.30 379.11 L1100.30 378.86 L1101.30 378.61 L1102.30 378.35 L1103.30 378.10 L1104.30 377.85 L1105.30 377.61 L1106.30 377.41 L1107.30 377.22 L1108.30 377.02 L1109.30 376.82 L1110.30 376.62 L1111.30 376.42 L1112.30 376.22 L1113.30 376.02 L1114.30 375.82 L1115.30 375.72 L1116.30 375.85 L1117.30 375.97 L1118.30 376.10 L1119.30 376.22 L1120.30 376.35 L1121.30 376.47 L1122.30 376.60 L1123.30 376.72 L1124.30 376.85 L1125.30 376.94 L1126.30 376.94 L1127.30 376.94 L1127.80 376.94 L1127.80 430.00Z" fill="#4444EE"/>
<path d="M905.30 430.00 L905.30 390.94 L906.30 390.94 L907.30 390.94 L908.30 390.94 L909.30 390.94 L910.30 390.94 L911.30 390.94 L912.30 390.94 L913.30 390.94 L914.30 390.94 L915.30 390.94 L916.30 390.54 L917.30 389.22 L918.30 387.91 L919.30 386.59 L920.30 385.27 L921.30 383.95 L922.30 383.42 L923.30 383.42 L924.30 383.42 L925.30 383.42 L926.30 383.42 L927.30 383.42 L928.30 383.42 L929.30 383.42 L930.30 383.42 L931.30 383.42 L932.30 383.42 L933.30 383.42 L934.30 383.42 L935.30 383.34 L936.30 383.08 L937.30 382.81 L938.30 382.55 L939.30 382.28 L940.30 382.15 L941.30 382.33 L942.30 382.52 L943.30 382.70 L944.30 382.89 L945.30 383.07 L946.30 383.26 L947.30 383.44 L948.30 383.62 L949.30 383.81 L950.30 383.97 L951.30 384.06 L952.30 384.15 L953.30 384.24 L954.30 384.34 L955.30 384.43 L956.30 384.52 L957.30 384.62 L958.30 384.71 L959.30 384.80 L960.30 384.82 L961.30 384.82 L962.30 384.82 L963.30 384.82 L964.30 384.82 L965.30 384.82 L966.30 384.82 L967.30 384.82 L968.30 384.82 L969.30 384.82 L970.30 384.82 L971.30 384.82 L972.30 384.82 L973.30 384.82 L974.30 384.82 L975.30 384.82 L976.30 384.82 L977.30 384.82 L978.30 384.82 L979.30 384.82 L980.30 384.82 L981.30 384.82 L982.30 384.82 L983.30 384.82 L984.30 384.82 L985.30 384.82 L986.30 384.82 L987.30 384.82 L988.30 384.82 L989.30 384.82 L990.30 385.15 L991.30 385.93 L992.30 385.93 L993.30 385.93 L994.30 385.93 L995.30 385.93 L996.30 385.93 L997.30 385.93 L998.30 385.93 L999.30 385.93 L1000.30 385.93 L1001.30 385.93 L1002.30 385.93 L1003.30 385.93 L1004.30 385.93 L1005.30 385.93 L1006.30 385.93 L1007.30 385.93 L1008.30 385.93 L1009.30 385.93 L1010.30 385.93 L1011.30 385.93 L1012.30 385.93 L1013.30 385.93 L1014.30 385.93 L1015.30 385.93 L1016.30 385.93 L1017.30 385.93 L1018.30 385.93 L1019.30 385.93 L1020.30 385.93 L1021.30 385.93 L1022.30 385.93 L1023.30 385.93 L1024.30 385.93 L1025.30 385.93 L1026.30 385.93 L1027.30 385.93 L1028.30 385.93 L1029.30 385.93 L1030.30 385.93 L1031.30 385.93 L1032.30 385.93 L1033.30 385.93 L1034.30 385.93 L1035.30 385.93 L1036.30 385.93 L1037.30 385.93 L1038.30 385.93 L1039.30 385.93 L1040.30 385.93 L1041.30 385.93 L1042.30 385.93 L1043.30 385.93 L1044.30 385.93 L1045.30 385.93 L1046.30 385.93 L1047.30 385.93 L1048.30 385.93 L1049.30 385.93 L1050.30 385.93 L1051.30 385.93 L1052.30 385.93 L1053.30 385.93 L1054.30 385.93 L1055.30 385.93 L1056.30 385.93 L1057.30 385.93 L1058.30 385.93 L1059.30 385.93 L1060.30 385.93 L1061.30 387.04 L1062.30 388.28 L1063.30 389.52 L1064.30 390.76 L1065.30 391.01 L1066.30 391.01 L1067.30 391.01 L1068.30 391.01 L1069.30 391.01 L1070.30 391.01 L1071.30 391.01 L1072.30 391.01 L1073.30 391.01 L1074.30 391.01 L1075.30 391.01 L1076.30 391.01 L1077.30 391.01 L1078.30 391.01 L1079.30 391.01 L1080.30 391.01 L1081.30 391.01 L1082.30 391.01 L1083.30 391.01 L1084.30 391.01 L1085.30 391.01 L1086.30 391.01 L1087.30 391.01 L1088.30 391.01 L1089.30 391.01 L1090.30 391.01 L1091.30 391.01 L1092.30 391.01 L1093.30 391.01 L1094.30 391.01 L1095.30 390.95 L1096.30 390.74 L1097.30 390.54 L1098.30 390.33 L1099.30 390.13 L1100.30 389.96 L1101.30 389.91 L1102.30 389.85 L1103.30 389.79 L1104.30 389.74 L1105.30 389.68 L1106.30 389.63 L1107.30 389.57 L1108.30 389.51 L1109.30 389.46 L1110.30 389.40 L1111.30 389.34 L1112.30 389.29 L1113.30 389.23 L1114.30 389.17 L1115.30 389.12 L1116.30 389.06 L1117.30 389.02 L1118.30 389.02 L1119.30 389.02 L1120.30 389.02 L1121.30 389.02 L1122.30 389.02 L1123.30 389.02 L1124.30 389.02 L1125.30 389.02 L1126.30 389.02 L1127.30 389.02 L1127.80 389.02 L1127.80 430.00Z" fill="#EEEE44"/>
<g clip-path="url(#avfs)"><g opacity="0.28"><path d="M902.30 422.50H1131.00" stroke="#3a2c18" stroke-width="1" stroke-dasharray="1.1 1.15" opacity="1"/><path d="M902.30 415.50H1131.00" stroke="#3a2c18" stroke-width="1" stroke-dasharray="1.1 1.15" opacity="1"/><path d="M902.30 407.50H1131.00" stroke="#3a2c18" stroke-width="1" stroke-dasharray="1.1 1.15" opacity="1"/><path d="M902.30 400.50H1131.00" stroke="#3a2c18" stroke-width="1" stroke-dasharray="1.1 1.15" opacity="1"/><path d="M902.30 385.50H1131.00" stroke="#3a2c18" stroke-width="1" stroke-dasharray="1.1 1.15" opacity="1"/><path d="M902.30 378.50H1131.00" stroke="#3a2c18" stroke-width="1" stroke-dasharray="1.1 1.15" opacity="1"/><path d="M902.30 370.50H1131.00" stroke="#3a2c18" stroke-width="1" stroke-dasharray="1.1 1.15" opacity="1"/><path d="M902.30 363.50H1131.00" stroke="#3a2c18" stroke-width="1" stroke-dasharray="1.1 1.15" opacity="1"/><path d="M906.50 356.30V432.50" stroke="#3e3e1c" stroke-width="1" stroke-dasharray="1.1 1.15" opacity="1"/><path d="M915.50 356.30V432.50" stroke="#3e3e1c" stroke-width="1" stroke-dasharray="1.1 1.15" opacity="1"/><path d="M925.50 356.30V432.50" stroke="#3e3e1c" stroke-width="1" stroke-dasharray="1.1 1.15" opacity="1"/><path d="M943.50 356.30V432.50" stroke="#3e3e1c" stroke-width="1" stroke-dasharray="1.1 1.15" opacity="1"/><path d="M953.50 356.30V432.50" stroke="#3e3e1c" stroke-width="1" stroke-dasharray="1.1 1.15" opacity="1"/><path d="M962.50 356.30V432.50" stroke="#3e3e1c" stroke-width="1" stroke-dasharray="1.1 1.15" opacity="1"/><path d="M972.50 356.30V432.50" stroke="#3e3e1c" stroke-width="1" stroke-dasharray="1.1 1.15" opacity="1"/><path d="M981.50 356.30V432.50" stroke="#3e3e1c" stroke-width="1" stroke-dasharray="1.1 1.15" opacity="1"/><path d="M1000.50 356.30V432.50" stroke="#3e3e1c" stroke-width="1" stroke-dasharray="1.1 1.15" opacity="1"/><path d="M1009.50 356.30V432.50" stroke="#3e3e1c" stroke-width="1" stroke-dasharray="1.1 1.15" opacity="1"/><path d="M1019.50 356.30V432.50" stroke="#3e3e1c" stroke-width="1" stroke-dasharray="1.1 1.15" opacity="1"/><path d="M1028.50 356.30V432.50" stroke="#3e3e1c" stroke-width="1" stroke-dasharray="1.1 1.15" opacity="1"/><path d="M1037.50 356.30V432.50" stroke="#3e3e1c" stroke-width="1" stroke-dasharray="1.1 1.15" opacity="1"/><path d="M1056.50 356.30V432.50" stroke="#3e3e1c" stroke-width="1" stroke-dasharray="1.1 1.15" opacity="1"/><path d="M1065.50 356.30V432.50" stroke="#3e3e1c" stroke-width="1" stroke-dasharray="1.1 1.15" opacity="1"/><path d="M1075.50 356.30V432.50" stroke="#3e3e1c" stroke-width="1" stroke-dasharray="1.1 1.15" opacity="1"/><path d="M1084.50 356.30V432.50" stroke="#3e3e1c" stroke-width="1" stroke-dasharray="1.1 1.15" opacity="1"/><path d="M1094.50 356.30V432.50" stroke="#3e3e1c" stroke-width="1" stroke-dasharray="1.1 1.15" opacity="1"/><path d="M1112.50 356.30V432.50" stroke="#3e3e1c" stroke-width="1" stroke-dasharray="1.1 1.15" opacity="1"/><path d="M1122.50 356.30V432.50" stroke="#3e3e1c" stroke-width="1" stroke-dasharray="1.1 1.15" opacity="1"/></g><g opacity="0.12"><path d="M902.30 430.50H1131.00" stroke="#a4b0a4" stroke-width="1" stroke-dasharray="1.1 1.15" opacity="1"/><path d="M902.30 393.50H1131.00" stroke="#a4b0a4" stroke-width="1" stroke-dasharray="1.1 1.15" opacity="1"/><path d="M902.30 356.50H1131.00" stroke="#a4b0a4" stroke-width="1" stroke-dasharray="1.1 1.15" opacity="1"/><path d="M934.50 356.30V432.50" stroke="#8a9e8a" stroke-width="1" stroke-dasharray="1.1 1.15" opacity="1"/><path d="M990.50 356.30V432.50" stroke="#8a9e8a" stroke-width="1" stroke-dasharray="1.1 1.15" opacity="1"/><path d="M1047.50 356.30V432.50" stroke="#8a9e8a" stroke-width="1" stroke-dasharray="1.1 1.15" opacity="1"/><path d="M1103.50 356.30V432.50" stroke="#8a9e8a" stroke-width="1" stroke-dasharray="1.1 1.15" opacity="1"/></g></g>
<path d="M901.40 354.10 L904.60 348.50 L907.80 354.10Z" fill="#fff"/>
<path d="M1130.80 426.30 L1136.80 429.60 L1130.80 432.90Z" fill="#fff"/>
<path d="M905.30 390.94 L906.30 390.94 L907.30 390.94 L908.30 390.94 L909.30 390.94 L910.30 390.94 L911.30 390.94 L912.30 390.94 L913.30 390.94 L914.30 390.94 L915.30 390.94 L916.30 390.54 L917.30 389.22 L918.30 387.91 L919.30 386.59 L920.30 385.27 L921.30 383.95 L922.30 383.42 L923.30 383.42 L924.30 383.42 L925.30 383.42 L926.30 383.42 L927.30 383.42 L928.30 383.42 L929.30 383.42 L930.30 383.42 L931.30 383.42 L932.30 383.42 L933.30 383.42 L934.30 383.42 L935.30 383.34 L936.30 383.08 L937.30 382.81 L938.30 382.55 L939.30 382.28 L940.30 382.15 L941.30 382.33 L942.30 382.52 L943.30 382.70 L944.30 382.89 L945.30 383.07 L946.30 383.26 L947.30 383.44 L948.30 383.62 L949.30 383.81 L950.30 383.97 L951.30 384.06 L952.30 384.15 L953.30 384.24 L954.30 384.34 L955.30 384.43 L956.30 384.52 L957.30 384.62 L958.30 384.71 L959.30 384.80 L960.30 384.82 L961.30 384.82 L962.30 384.82 L963.30 384.82 L964.30 384.82 L965.30 384.82 L966.30 384.82 L967.30 384.82 L968.30 384.82 L969.30 384.82 L970.30 384.82 L971.30 384.82 L972.30 384.82 L973.30 384.82 L974.30 384.82 L975.30 384.82 L976.30 384.82 L977.30 384.82 L978.30 384.82 L979.30 384.82 L980.30 384.82 L981.30 384.82 L982.30 384.82 L983.30 384.82 L984.30 384.82 L985.30 384.82 L986.30 384.82 L987.30 384.82 L988.30 384.82 L989.30 384.82 L990.30 385.15 L991.30 385.93 L992.30 385.93 L993.30 385.93 L994.30 385.93 L995.30 385.93 L996.30 385.93 L997.30 385.93 L998.30 385.93 L999.30 385.93 L1000.30 385.93 L1001.30 385.93 L1002.30 385.93 L1003.30 385.93 L1004.30 385.93 L1005.30 385.93 L1006.30 385.93 L1007.30 385.93 L1008.30 385.93 L1009.30 385.93 L1010.30 385.93 L1011.30 385.93 L1012.30 385.93 L1013.30 385.93 L1014.30 385.93 L1015.30 385.93 L1016.30 385.93 L1017.30 385.93 L1018.30 385.93 L1019.30 385.93 L1020.30 385.93 L1021.30 385.93 L1022.30 385.93 L1023.30 385.93 L1024.30 385.93 L1025.30 385.93 L1026.30 385.93 L1027.30 385.93 L1028.30 385.93 L1029.30 385.93 L1030.30 385.93 L1031.30 385.93 L1032.30 385.93 L1033.30 385.93 L1034.30 385.93 L1035.30 385.93 L1036.30 385.93 L1037.30 385.93 L1038.30 385.93 L1039.30 385.93 L1040.30 385.93 L1041.30 385.93 L1042.30 385.93 L1043.30 385.93 L1044.30 385.93 L1045.30 385.93 L1046.30 385.93 L1047.30 385.93 L1048.30 385.93 L1049.30 385.93 L1050.30 385.93 L1051.30 385.93 L1052.30 385.93 L1053.30 385.93 L1054.30 385.93 L1055.30 385.93 L1056.30 385.93 L1057.30 385.93 L1058.30 385.93 L1059.30 385.93 L1060.30 385.93 L1061.30 387.04 L1062.30 388.28 L1063.30 389.52 L1064.30 390.76 L1065.30 391.01 L1066.30 391.01 L1067.30 391.01 L1068.30 391.01 L1069.30 391.01 L1070.30 391.01 L1071.30 391.01 L1072.30 391.01 L1073.30 391.01 L1074.30 391.01 L1075.30 391.01 L1076.30 391.01 L1077.30 391.01 L1078.30 391.01 L1079.30 391.01 L1080.30 391.01 L1081.30 391.01 L1082.30 391.01 L1083.30 391.01 L1084.30 391.01 L1085.30 391.01 L1086.30 391.01 L1087.30 391.01 L1088.30 391.01 L1089.30 391.01 L1090.30 391.01 L1091.30 391.01 L1092.30 391.01 L1093.30 391.01 L1094.30 391.01 L1095.30 390.95 L1096.30 390.74 L1097.30 390.54 L1098.30 390.33 L1099.30 390.13 L1100.30 389.96 L1101.30 389.91 L1102.30 389.85 L1103.30 389.79 L1104.30 389.74 L1105.30 389.68 L1106.30 389.63 L1107.30 389.57 L1108.30 389.51 L1109.30 389.46 L1110.30 389.40 L1111.30 389.34 L1112.30 389.29 L1113.30 389.23 L1114.30 389.17 L1115.30 389.12 L1116.30 389.06 L1117.30 389.02 L1118.30 389.02 L1119.30 389.02 L1120.30 389.02 L1121.30 389.02 L1122.30 389.02 L1123.30 389.02 L1124.30 389.02 L1125.30 389.02 L1126.30 389.02 L1127.30 389.02 L1127.80 389.02" fill="none" stroke="#EEEE00" stroke-width="1.0"/>
<path d="M905.30 384.67 L906.30 384.67 L907.30 384.67 L908.30 384.67 L909.30 384.67 L910.30 384.67 L911.30 384.67 L912.30 384.67 L913.30 384.67 L914.30 384.67 L915.30 384.67 L916.30 384.67 L917.30 384.40 L918.30 383.48 L919.30 381.87 L920.30 378.66 L921.30 375.44 L922.30 372.23 L923.30 369.02 L924.30 365.81 L925.30 362.60 L926.30 361.16 L927.30 360.90 L928.30 360.72 L929.30 360.72 L930.30 360.72 L931.30 360.72 L932.30 360.72 L933.30 360.72 L934.30 360.72 L935.30 360.72 L936.30 360.72 L937.30 360.72 L938.30 360.72 L939.30 360.72 L940.30 360.72 L941.30 360.72 L942.30 360.72 L943.30 360.72 L944.30 360.72 L945.30 360.72 L946.30 360.72 L947.30 360.72 L948.30 360.72 L949.30 360.72 L950.30 360.72 L951.30 360.72 L952.30 360.72 L953.30 360.72 L954.30 360.72 L955.30 360.72 L956.30 360.72 L957.30 360.72 L958.30 360.72 L959.30 360.72 L960.30 360.72 L961.30 360.72 L962.30 360.72 L963.30 360.72 L964.30 360.72 L965.30 360.72 L966.30 360.72 L967.30 360.72 L968.30 360.72 L969.30 360.72 L970.30 360.72 L971.30 360.72 L972.30 360.72 L973.30 360.72 L974.30 360.72 L975.30 360.72 L976.30 360.72 L977.30 360.72 L978.30 360.72 L979.30 360.72 L980.30 360.72 L981.30 360.72 L982.30 360.72 L983.30 360.72 L984.30 360.72 L985.30 360.72 L986.30 360.72 L987.30 360.72 L988.30 360.72 L989.30 360.72 L990.30 360.72 L991.30 360.72 L992.30 360.72 L993.30 360.72 L994.30 360.72 L995.30 360.72 L996.30 360.72 L997.30 360.72 L998.30 360.72 L999.30 360.72 L1000.30 360.72 L1001.30 360.72 L1002.30 360.72 L1003.30 360.72 L1004.30 360.72 L1005.30 360.72 L1006.30 360.72 L1007.30 360.72 L1008.30 360.72 L1009.30 360.72 L1010.30 360.72 L1011.30 360.72 L1012.30 360.72 L1013.30 360.72 L1014.30 360.72 L1015.30 360.72 L1016.30 360.72 L1017.30 360.72 L1018.30 360.72 L1019.30 360.72 L1020.30 360.72 L1021.30 360.72 L1022.30 360.72 L1023.30 360.72 L1024.30 360.72 L1025.30 360.72 L1026.30 360.72 L1027.30 360.72 L1028.30 360.72 L1029.30 360.72 L1030.30 360.72 L1031.30 360.72 L1032.30 360.72 L1033.30 360.72 L1034.30 360.72 L1035.30 360.72 L1036.30 360.72 L1037.30 360.72 L1038.30 360.72 L1039.30 360.72 L1040.30 360.72 L1041.30 360.72 L1042.30 360.72 L1043.30 360.72 L1044.30 360.72 L1045.30 360.72 L1046.30 360.72 L1047.30 360.72 L1048.30 360.72 L1049.30 360.72 L1050.30 360.72 L1051.30 360.72 L1052.30 360.72 L1053.30 360.72 L1054.30 360.72 L1055.30 360.79 L1056.30 361.01 L1057.30 361.23 L1058.30 361.45 L1059.30 361.67 L1060.30 361.83 L1061.30 361.83 L1062.30 361.83 L1063.30 361.83 L1064.30 361.83 L1065.30 361.83 L1066.30 361.83 L1067.30 361.83 L1068.30 361.83 L1069.30 361.83 L1070.30 361.83 L1071.30 361.83 L1072.30 361.83 L1073.30 361.83 L1074.30 361.83 L1075.30 361.83 L1076.30 361.83 L1077.30 361.83 L1078.30 361.83 L1079.30 361.83 L1080.30 361.83 L1081.30 361.83 L1082.30 361.83 L1083.30 365.36 L1084.30 370.40 L1085.30 374.51 L1086.30 374.91 L1087.30 375.32 L1088.30 375.72 L1089.30 376.13 L1090.30 376.53 L1091.30 376.93 L1092.30 377.34 L1093.30 377.74 L1094.30 378.14 L1095.30 378.55 L1096.30 378.95 L1097.30 379.35 L1098.30 379.36 L1099.30 379.11 L1100.30 378.86 L1101.30 378.61 L1102.30 378.35 L1103.30 378.10 L1104.30 377.85 L1105.30 377.61 L1106.30 377.41 L1107.30 377.22 L1108.30 377.02 L1109.30 376.82 L1110.30 376.62 L1111.30 376.42 L1112.30 376.22 L1113.30 376.02 L1114.30 375.82 L1115.30 375.72 L1116.30 375.85 L1117.30 375.97 L1118.30 376.10 L1119.30 376.22 L1120.30 376.35 L1121.30 376.47 L1122.30 376.60 L1123.30 376.72 L1124.30 376.85 L1125.30 376.94 L1126.30 376.94 L1127.30 376.94 L1127.80 376.94" fill="none" stroke="#0000EE" stroke-width="1.6"/>
<text x="930.40" y="351.30" font-size="13.0" text-anchor="start" fill="#cacaca" stroke="#cacaca" stroke-width="0.12" >VFS usage &#160;(1day)</text>
<text x="0" y="0" font-size="11.3" text-anchor="middle" dominant-baseline="central" fill="#c0c0c0" transform="translate(844.00 392.60) rotate(-90)" textLength="72.6" lengthAdjust="spacingAndGlyphs" >Percent (%)</text>
<text x="0" y="0" font-size="8.4" text-anchor="middle" dominant-baseline="central" fill="#323232" transform="translate(1152.00 393.90) rotate(90)" textLength="122" lengthAdjust="spacingAndGlyphs" font-family="Liberation Mono" font-weight="bold">RRDTOOL / TOBI OETIKER</text>
<text x="896.40" y="360.40" font-size="11.15" text-anchor="end" fill="#cacaca" stroke="#cacaca" stroke-width="0.12" >100</text>
<text x="896.40" y="397.10" font-size="11.15" text-anchor="end" fill="#cacaca" stroke="#cacaca" stroke-width="0.12" >50</text>
<text x="896.40" y="433.90" font-size="11.15" text-anchor="end" fill="#cacaca" stroke="#cacaca" stroke-width="0.12" >0</text>
<text x="934.60" y="444.50" font-size="11.15" text-anchor="middle" fill="#cacaca" stroke="#cacaca" stroke-width="0.12" >18:00</text>
<text x="990.90" y="444.50" font-size="11.15" text-anchor="middle" fill="#cacaca" stroke="#cacaca" stroke-width="0.12" >00:00</text>
<text x="1047.10" y="444.50" font-size="11.15" text-anchor="middle" fill="#cacaca" stroke="#cacaca" stroke-width="0.12" >06:00</text>
<text x="1103.30" y="444.50" font-size="11.15" text-anchor="middle" fill="#cacaca" stroke="#cacaca" stroke-width="0.12" >12:00</text>
<rect x="846.00" y="452.80" width="9.4" height="9.4" fill="#a0a0a0"/><rect x="847.10" y="453.90" width="7.2" height="7.2" fill="#4444EE"/>
<text x="861.20" y="461.30" font-size="11.15" text-anchor="start" fill="#cacaca" stroke="#cacaca" stroke-width="0.12" >inode</text>
<text x="1018.40" y="461.30" font-size="11.15" text-anchor="start" fill="#cacaca" stroke="#cacaca" stroke-width="0.12" >Current:</text>
<text x="1118.40" y="461.30" font-size="11.15" text-anchor="end" fill="#cacaca" stroke="#cacaca" stroke-width="0.12" >70.6%</text>
<rect x="846.00" y="466.30" width="9.4" height="9.4" fill="#a0a0a0"/><rect x="847.10" y="467.40" width="7.2" height="7.2" fill="#EEEE44"/>
<text x="861.20" y="474.80" font-size="11.15" text-anchor="start" fill="#cacaca" stroke="#cacaca" stroke-width="0.12" >dentry</text>
<text x="1018.40" y="474.80" font-size="11.15" text-anchor="start" fill="#cacaca" stroke="#cacaca" stroke-width="0.12" >Current:</text>
<text x="1118.40" y="474.80" font-size="11.15" text-anchor="end" fill="#cacaca" stroke="#cacaca" stroke-width="0.12" >54.0%</text>
<rect x="846.00" y="479.80" width="9.4" height="9.4" fill="#a0a0a0"/><rect x="847.10" y="480.90" width="7.2" height="7.2" fill="#EE44EE"/>
<text x="861.20" y="488.30" font-size="11.15" text-anchor="start" fill="#cacaca" stroke="#cacaca" stroke-width="0.12" >file</text>
<text x="1018.40" y="488.30" font-size="11.15" text-anchor="start" fill="#cacaca" stroke="#cacaca" stroke-width="0.12" >Current:</text>
<text x="1118.40" y="488.30" font-size="11.15" text-anchor="end" fill="#cacaca" stroke="#cacaca" stroke-width="0.12" >0.0%</text>
</g></svg>
<svg width="1388" height="843" viewBox="0 0 1388 843" font-family="'Liberation Mono',monospace" style="position:absolute;left:0;top:0;white-space:pre">
<defs><clipPath id="cp0"><rect x="0" y="127" width="1367" height="711"/></clipPath></defs>
<defs><clipPath id="ap0"><path d="M285.30 767.40 L285.30 754.02 L286.30 747.97 L287.30 742.20 L288.30 735.81 L289.30 734.81 L290.30 732.82 L291.30 737.44 L292.30 736.60 L293.30 733.37 L294.30 728.77 L295.30 740.24 L296.30 744.96 L297.30 750.97 L298.30 753.02 L299.30 749.56 L300.30 753.13 L301.30 750.79 L302.30 746.88 L303.30 741.37 L304.30 745.44 L305.30 751.77 L306.30 753.52 L307.30 753.65 L308.30 754.48 L309.30 755.63 L310.30 754.46 L311.30 754.60 L312.30 755.68 L313.30 754.78 L314.30 755.63 L315.30 755.99 L316.30 755.40 L317.30 755.40 L318.30 755.27 L319.30 754.77 L320.30 754.38 L321.30 754.13 L322.30 754.10 L323.30 754.06 L324.30 754.48 L325.30 755.46 L326.30 755.72 L327.30 754.81 L328.30 754.97 L329.30 754.71 L330.30 755.89 L331.30 755.69 L332.30 754.21 L333.30 754.86 L334.30 754.67 L335.30 755.88 L336.30 755.27 L337.30 754.23 L338.30 755.26 L339.30 755.28 L340.30 757.60 L341.30 757.79 L342.30 757.80 L343.30 759.24 L344.30 758.70 L345.30 758.02 L346.30 757.78 L347.30 756.68 L348.30 754.08 L349.30 755.84 L350.30 755.69 L351.30 755.41 L352.30 754.64 L353.30 754.36 L354.30 755.13 L355.30 755.09 L356.30 754.50 L357.30 755.54 L358.30 755.35 L359.30 754.87 L360.30 754.82 L361.30 756.04 L362.30 755.89 L363.30 755.84 L364.30 754.65 L365.30 754.72 L366.30 754.15 L367.30 754.57 L368.30 755.62 L369.30 754.58 L370.30 754.14 L371.30 755.43 L372.30 756.12 L373.30 755.39 L374.30 755.58 L375.30 755.80 L376.30 756.06 L377.30 755.91 L378.30 754.41 L379.30 756.06 L380.30 754.92 L381.30 755.75 L382.30 755.78 L383.30 754.51 L384.30 755.57 L385.30 755.81 L386.30 755.26 L387.30 754.78 L388.30 755.13 L389.30 754.45 L390.30 755.38 L391.30 755.13 L392.30 754.75 L393.30 755.27 L394.30 754.75 L395.30 755.26 L396.30 755.94 L397.30 755.96 L398.30 754.63 L399.30 754.71 L400.30 754.31 L401.30 754.83 L402.30 755.05 L403.30 755.89 L404.30 754.50 L405.30 756.00 L406.30 755.38 L407.30 755.96 L408.30 755.47 L409.30 755.62 L410.30 755.39 L411.30 754.81 L412.30 755.16 L413.30 755.77 L414.30 754.68 L415.30 754.77 L416.30 754.59 L417.30 756.20 L418.30 755.03 L419.30 754.46 L420.30 755.75 L421.30 755.87 L422.30 754.63 L423.30 755.55 L424.30 755.48 L425.30 754.63 L426.30 755.52 L427.30 755.90 L428.30 755.87 L429.30 755.60 L430.30 754.89 L431.30 755.56 L432.30 754.75 L433.30 756.18 L434.30 755.81 L435.30 755.05 L436.30 755.35 L437.30 755.31 L438.30 754.43 L439.30 755.77 L440.30 755.97 L441.30 756.27 L442.30 755.36 L443.30 755.74 L444.30 755.38 L445.30 756.34 L446.30 756.35 L447.30 755.58 L448.30 754.82 L449.30 755.75 L450.30 754.51 L451.30 755.19 L452.30 755.55 L453.30 754.79 L454.30 755.90 L455.30 755.15 L456.30 754.66 L457.30 755.28 L458.30 755.74 L459.30 756.19 L460.30 755.23 L461.30 756.01 L462.30 755.64 L463.30 755.30 L464.30 754.49 L465.30 755.04 L466.30 755.35 L467.30 754.67 L468.30 755.79 L469.30 755.63 L470.30 755.04 L471.30 755.30 L472.30 755.97 L473.30 755.59 L474.30 754.76 L475.30 755.94 L476.30 755.00 L477.30 756.34 L478.30 754.50 L479.30 755.05 L480.30 755.79 L481.30 754.45 L482.30 754.84 L483.30 756.33 L484.30 755.95 L485.30 755.46 L486.30 754.44 L487.30 756.18 L488.30 756.37 L489.30 755.84 L490.30 756.38 L491.30 755.65 L492.30 755.39 L493.30 755.59 L494.30 756.20 L495.30 756.44 L496.30 754.86 L497.30 755.60 L498.30 755.52 L499.30 755.53 L500.30 755.11 L501.30 754.68 L502.30 754.83 L503.30 755.03 L504.30 755.82 L505.30 756.17 L506.30 756.34 L507.30 754.78 L508.30 756.41 L509.30 755.37 L510.30 754.68 L511.30 755.88 L512.30 755.74 L513.30 755.69 L514.30 754.62 L515.30 755.15 L516.30 754.84 L517.30 756.47 L518.30 755.07 L519.30 755.64 L520.30 755.74 L521.30 754.90 L522.30 755.07 L523.30 754.72 L524.30 755.07 L525.30 754.72 L526.30 755.70 L527.30 755.45 L528.30 754.99 L529.30 755.66 L530.30 756.31 L531.30 755.40 L532.30 754.82 L533.30 754.83 L534.30 756.34 L535.30 755.83 L536.30 756.14 L537.30 755.91 L538.30 754.66 L539.30 755.76 L540.30 755.98 L541.30 756.06 L542.30 755.72 L543.30 755.26 L544.30 755.93 L545.30 756.25 L546.30 756.17 L547.30 756.10 L548.30 754.80 L549.30 756.29 L550.30 755.11 L551.30 756.42 L552.30 755.05 L553.30 756.11 L554.30 755.07 L555.30 755.78 L556.30 756.50 L557.30 756.47 L558.30 755.04 L559.30 755.57 L560.30 755.68 L561.30 755.96 L562.30 755.27 L563.30 755.70 L564.30 756.55 L565.30 755.46 L566.30 756.05 L567.30 754.97 L568.30 755.58 L569.30 755.12 L570.30 756.45 L571.30 755.26 L572.30 755.46 L573.30 754.98 L574.30 754.91 L575.30 755.59 L576.30 755.51 L577.30 755.16 L578.30 756.18 L579.30 755.62 L580.30 755.13 L581.30 755.52 L582.30 755.63 L583.30 755.00 L584.30 754.76 L585.30 756.21 L586.30 756.59 L587.30 755.50 L588.30 756.44 L589.30 754.78 L590.30 755.79 L591.30 754.10 L592.30 745.97 L593.30 748.89 L594.30 746.64 L595.30 740.96 L596.30 742.87 L597.30 736.46 L598.30 738.95 L599.30 739.54 L600.30 736.69 L601.30 740.30 L602.30 742.50 L603.30 742.50 L604.30 748.18 L605.30 742.65 L606.30 747.65 L607.30 742.06 L608.30 744.75 L609.30 749.79 L610.30 748.61 L611.30 750.61 L612.30 751.73 L613.30 747.78 L614.30 751.63 L615.30 750.02 L616.30 741.03 L617.30 740.81 L618.30 747.80 L619.30 744.07 L620.30 746.64 L621.30 745.03 L622.30 748.79 L623.30 749.75 L624.30 739.51 L625.30 744.67 L626.30 738.38 L627.30 735.61 L628.30 736.91 L629.30 742.22 L630.30 741.92 L631.30 741.69 L632.30 739.88 L633.30 744.63 L634.30 745.43 L635.30 743.82 L636.30 746.81 L637.30 744.77 L638.30 738.18 L639.30 746.00 L640.30 742.01 L641.30 741.71 L642.30 745.69 L643.30 750.63 L644.30 745.54 L645.30 741.45 L646.30 742.25 L647.30 746.05 L647.80 745.53 L647.80 767.40Z"/></clipPath></defs>
<g clip-path="url(#cp0)">
<rect x="209.6" y="569.0" width="471.69999999999993" height="331.0" fill="#303030"/>
<rect x="210.5" y="569.9" width="469.8999999999999" height="329.2" fill="#4a4a4a"/>
<rect x="212.29999999999998" y="571.7" width="466.29999999999995" height="325.6" fill="#101010"/>
<rect x="285.3" y="598.5" width="362.49999999999994" height="168.89999999999998" fill="#000"/>
<path d="M281.00 758.50H651.00" stroke="#3a2c18" stroke-width="1" stroke-dasharray="1.1 1.15" opacity="1"/>
<path d="M281.00 741.50H651.00" stroke="#3a2c18" stroke-width="1" stroke-dasharray="1.1 1.15" opacity="1"/>
<path d="M281.00 725.50H651.00" stroke="#3a2c18" stroke-width="1" stroke-dasharray="1.1 1.15" opacity="1"/>
<path d="M281.00 708.50H651.00" stroke="#3a2c18" stroke-width="1" stroke-dasharray="1.1 1.15" opacity="1"/>
<path d="M281.00 691.50H651.00" stroke="#3a2c18" stroke-width="1" stroke-dasharray="1.1 1.15" opacity="1"/>
<path d="M281.00 674.50H651.00" stroke="#3a2c18" stroke-width="1" stroke-dasharray="1.1 1.15" opacity="1"/>
<path d="M281.00 657.50H651.00" stroke="#3a2c18" stroke-width="1" stroke-dasharray="1.1 1.15" opacity="1"/>
<path d="M281.00 640.50H651.00" stroke="#3a2c18" stroke-width="1" stroke-dasharray="1.1 1.15" opacity="1"/>
<path d="M281.00 623.50H651.00" stroke="#3a2c18" stroke-width="1" stroke-dasharray="1.1 1.15" opacity="1"/>
<path d="M281.00 606.50H651.00" stroke="#3a2c18" stroke-width="1" stroke-dasharray="1.1 1.15" opacity="1"/>
<path d="M288.50 598.50V770.00" stroke="#3e3e1c" stroke-width="1" stroke-dasharray="1.1 1.15" opacity="1"/>
<path d="M303.50 598.50V770.00" stroke="#3e3e1c" stroke-width="1" stroke-dasharray="1.1 1.15" opacity="1"/>
<path d="M318.50 598.50V770.00" stroke="#3e3e1c" stroke-width="1" stroke-dasharray="1.1 1.15" opacity="1"/>
<path d="M349.50 598.50V770.00" stroke="#3e3e1c" stroke-width="1" stroke-dasharray="1.1 1.15" opacity="1"/>
<path d="M364.50 598.50V770.00" stroke="#3e3e1c" stroke-width="1" stroke-dasharray="1.1 1.15" opacity="1"/>
<path d="M379.50 598.50V770.00" stroke="#3e3e1c" stroke-width="1" stroke-dasharray="1.1 1.15" opacity="1"/>
<path d="M394.50 598.50V770.00" stroke="#3e3e1c" stroke-width="1" stroke-dasharray="1.1 1.15" opacity="1"/>
<path d="M409.50 598.50V770.00" stroke="#3e3e1c" stroke-width="1" stroke-dasharray="1.1 1.15" opacity="1"/>
<path d="M440.50 598.50V770.00" stroke="#3e3e1c" stroke-width="1" stroke-dasharray="1.1 1.15" opacity="1"/>
<path d="M455.50 598.50V770.00" stroke="#3e3e1c" stroke-width="1" stroke-dasharray="1.1 1.15" opacity="1"/>
<path d="M470.50 598.50V770.00" stroke="#3e3e1c" stroke-width="1" stroke-dasharray="1.1 1.15" opacity="1"/>
<path d="M486.50 598.50V770.00" stroke="#3e3e1c" stroke-width="1" stroke-dasharray="1.1 1.15" opacity="1"/>
<path d="M501.50 598.50V770.00" stroke="#3e3e1c" stroke-width="1" stroke-dasharray="1.1 1.15" opacity="1"/>
<path d="M531.50 598.50V770.00" stroke="#3e3e1c" stroke-width="1" stroke-dasharray="1.1 1.15" opacity="1"/>
<path d="M546.50 598.50V770.00" stroke="#3e3e1c" stroke-width="1" stroke-dasharray="1.1 1.15" opacity="1"/>
<path d="M562.50 598.50V770.00" stroke="#3e3e1c" stroke-width="1" stroke-dasharray="1.1 1.15" opacity="1"/>
<path d="M577.50 598.50V770.00" stroke="#3e3e1c" stroke-width="1" stroke-dasharray="1.1 1.15" opacity="1"/>
<path d="M592.50 598.50V770.00" stroke="#3e3e1c" stroke-width="1" stroke-dasharray="1.1 1.15" opacity="1"/>
<path d="M622.50 598.50V770.00" stroke="#3e3e1c" stroke-width="1" stroke-dasharray="1.1 1.15" opacity="1"/>
<path d="M638.50 598.50V770.00" stroke="#3e3e1c" stroke-width="1" stroke-dasharray="1.1 1.15" opacity="1"/>
<path d="M281.00 767.50H651.00" stroke="#a4b0a4" stroke-width="1" stroke-dasharray="1.1 1.15" opacity="1"/>
<path d="M281.00 751.50H651.00" stroke="#a4b0a4" stroke-width="1" stroke-dasharray="1.1 1.15" opacity="1"/>
<path d="M281.00 734.50H651.00" stroke="#a4b0a4" stroke-width="1" stroke-dasharray="1.1 1.15" opacity="1"/>
<path d="M281.00 717.50H651.00" stroke="#a4b0a4" stroke-width="1" stroke-dasharray="1.1 1.15" opacity="1"/>
<path d="M281.00 700.50H651.00" stroke="#a4b0a4" stroke-width="1" stroke-dasharray="1.1 1.15" opacity="1"/>
<path d="M281.00 683.50H651.00" stroke="#a4b0a4" stroke-width="1" stroke-dasharray="1.1 1.15" opacity="1"/>
<path d="M281.00 666.50H651.00" stroke="#a4b0a4" stroke-width="1" stroke-dasharray="1.1 1.15" opacity="1"/>
<path d="M281.00 649.50H651.00" stroke="#a4b0a4" stroke-width="1" stroke-dasharray="1.1 1.15" opacity="1"/>
<path d="M281.00 632.50H651.00" stroke="#a4b0a4" stroke-width="1" stroke-dasharray="1.1 1.15" opacity="1"/>
<path d="M281.00 615.50H651.00" stroke="#a4b0a4" stroke-width="1" stroke-dasharray="1.1 1.15" opacity="1"/>
<path d="M281.00 599.50H651.00" stroke="#a4b0a4" stroke-width="1" stroke-dasharray="1.1 1.15" opacity="1"/>
<path d="M333.50 598.50V770.00" stroke="#8a9e8a" stroke-width="1" stroke-dasharray="1.1 1.15" opacity="1"/>
<path d="M425.50 598.50V770.00" stroke="#8a9e8a" stroke-width="1" stroke-dasharray="1.1 1.15" opacity="1"/>
<path d="M516.50 598.50V770.00" stroke="#8a9e8a" stroke-width="1" stroke-dasharray="1.1 1.15" opacity="1"/>
<path d="M607.50 598.50V770.00" stroke="#8a9e8a" stroke-width="1" stroke-dasharray="1.1 1.15" opacity="1"/>
<path d="M285.30 767.40 L285.30 754.02 L286.30 747.97 L287.30 742.20 L288.30 735.81 L289.30 734.81 L290.30 732.82 L291.30 737.44 L292.30 736.60 L293.30 733.37 L294.30 728.77 L295.30 740.24 L296.30 744.96 L297.30 750.97 L298.30 753.02 L299.30 749.56 L300.30 753.13 L301.30 750.79 L302.30 746.88 L303.30 741.37 L304.30 745.44 L305.30 751.77 L306.30 753.52 L307.30 753.65 L308.30 754.48 L309.30 755.63 L310.30 754.46 L311.30 754.60 L312.30 755.68 L313.30 754.78 L314.30 755.63 L315.30 755.99 L316.30 755.40 L317.30 755.40 L318.30 755.27 L319.30 754.77 L320.30 754.38 L321.30 754.13 L322.30 754.10 L323.30 754.06 L324.30 754.48 L325.30 755.46 L326.30 755.72 L327.30 754.81 L328.30 754.97 L329.30 754.71 L330.30 755.89 L331.30 755.69 L332.30 754.21 L333.30 754.86 L334.30 754.67 L335.30 755.88 L336.30 755.27 L337.30 754.23 L338.30 755.26 L339.30 755.28 L340.30 757.60 L341.30 757.79 L342.30 757.80 L343.30 759.24 L344.30 758.70 L345.30 758.02 L346.30 757.78 L347.30 756.68 L348.30 754.08 L349.30 755.84 L350.30 755.69 L351.30 755.41 L352.30 754.64 L353.30 754.36 L354.30 755.13 L355.30 755.09 L356.30 754.50 L357.30 755.54 L358.30 755.35 L359.30 754.87 L360.30 754.82 L361.30 756.04 L362.30 755.89 L363.30 755.84 L364.30 754.65 L365.30 754.72 L366.30 754.15 L367.30 754.57 L368.30 755.62 L369.30 754.58 L370.30 754.14 L371.30 755.43 L372.30 756.12 L373.30 755.39 L374.30 755.58 L375.30 755.80 L376.30 756.06 L377.30 755.91 L378.30 754.41 L379.30 756.06 L380.30 754.92 L381.30 755.75 L382.30 755.78 L383.30 754.51 L384.30 755.57 L385.30 755.81 L386.30 755.26 L387.30 754.78 L388.30 755.13 L389.30 754.45 L390.30 755.38 L391.30 755.13 L392.30 754.75 L393.30 755.27 L394.30 754.75 L395.30 755.26 L396.30 755.94 L397.30 755.96 L398.30 754.63 L399.30 754.71 L400.30 754.31 L401.30 754.83 L402.30 755.05 L403.30 755.89 L404.30 754.50 L405.30 756.00 L406.30 755.38 L407.30 755.96 L408.30 755.47 L409.30 755.62 L410.30 755.39 L411.30 754.81 L412.30 755.16 L413.30 755.77 L414.30 754.68 L415.30 754.77 L416.30 754.59 L417.30 756.20 L418.30 755.03 L419.30 754.46 L420.30 755.75 L421.30 755.87 L422.30 754.63 L423.30 755.55 L424.30 755.48 L425.30 754.63 L426.30 755.52 L427.30 755.90 L428.30 755.87 L429.30 755.60 L430.30 754.89 L431.30 755.56 L432.30 754.75 L433.30 756.18 L434.30 755.81 L435.30 755.05 L436.30 755.35 L437.30 755.31 L438.30 754.43 L439.30 755.77 L440.30 755.97 L441.30 756.27 L442.30 755.36 L443.30 755.74 L444.30 755.38 L445.30 756.34 L446.30 756.35 L447.30 755.58 L448.30 754.82 L449.30 755.75 L450.30 754.51 L451.30 755.19 L452.30 755.55 L453.30 754.79 L454.30 755.90 L455.30 755.15 L456.30 754.66 L457.30 755.28 L458.30 755.74 L459.30 756.19 L460.30 755.23 L461.30 756.01 L462.30 755.64 L463.30 755.30 L464.30 754.49 L465.30 755.04 L466.30 755.35 L467.30 754.67 L468.30 755.79 L469.30 755.63 L470.30 755.04 L471.30 755.30 L472.30 755.97 L473.30 755.59 L474.30 754.76 L475.30 755.94 L476.30 755.00 L477.30 756.34 L478.30 754.50 L479.30 755.05 L480.30 755.79 L481.30 754.45 L482.30 754.84 L483.30 756.33 L484.30 755.95 L485.30 755.46 L486.30 754.44 L487.30 756.18 L488.30 756.37 L489.30 755.84 L490.30 756.38 L491.30 755.65 L492.30 755.39 L493.30 755.59 L494.30 756.20 L495.30 756.44 L496.30 754.86 L497.30 755.60 L498.30 755.52 L499.30 755.53 L500.30 755.11 L501.30 754.68 L502.30 754.83 L503.30 755.03 L504.30 755.82 L505.30 756.17 L506.30 756.34 L507.30 754.78 L508.30 756.41 L509.30 755.37 L510.30 754.68 L511.30 755.88 L512.30 755.74 L513.30 755.69 L514.30 754.62 L515.30 755.15 L516.30 754.84 L517.30 756.47 L518.30 755.07 L519.30 755.64 L520.30 755.74 L521.30 754.90 L522.30 755.07 L523.30 754.72 L524.30 755.07 L525.30 754.72 L526.30 755.70 L527.30 755.45 L528.30 754.99 L529.30 755.66 L530.30 756.31 L531.30 755.40 L532.30 754.82 L533.30 754.83 L534.30 756.34 L535.30 755.83 L536.30 756.14 L537.30 755.91 L538.30 754.66 L539.30 755.76 L540.30 755.98 L541.30 756.06 L542.30 755.72 L543.30 755.26 L544.30 755.93 L545.30 756.25 L546.30 756.17 L547.30 756.10 L548.30 754.80 L549.30 756.29 L550.30 755.11 L551.30 756.42 L552.30 755.05 L553.30 756.11 L554.30 755.07 L555.30 755.78 L556.30 756.50 L557.30 756.47 L558.30 755.04 L559.30 755.57 L560.30 755.68 L561.30 755.96 L562.30 755.27 L563.30 755.70 L564.30 756.55 L565.30 755.46 L566.30 756.05 L567.30 754.97 L568.30 755.58 L569.30 755.12 L570.30 756.45 L571.30 755.26 L572.30 755.46 L573.30 754.98 L574.30 754.91 L575.30 755.59 L576.30 755.51 L577.30 755.16 L578.30 756.18 L579.30 755.62 L580.30 755.13 L581.30 755.52 L582.30 755.63 L583.30 755.00 L584.30 754.76 L585.30 756.21 L586.30 756.59 L587.30 755.50 L588.30 756.44 L589.30 754.78 L590.30 755.79 L591.30 754.10 L592.30 745.97 L593.30 748.89 L594.30 746.64 L595.30 740.96 L596.30 742.87 L597.30 736.46 L598.30 738.95 L599.30 739.54 L600.30 736.69 L601.30 740.30 L602.30 742.50 L603.30 742.50 L604.30 748.18 L605.30 742.65 L606.30 747.65 L607.30 742.06 L608.30 744.75 L609.30 749.79 L610.30 748.61 L611.30 750.61 L612.30 751.73 L613.30 747.78 L614.30 751.63 L615.30 750.02 L616.30 741.03 L617.30 740.81 L618.30 747.80 L619.30 744.07 L620.30 746.64 L621.30 745.03 L622.30 748.79 L623.30 749.75 L624.30 739.51 L625.30 744.67 L626.30 738.38 L627.30 735.61 L628.30 736.91 L629.30 742.22 L630.30 741.92 L631.30 741.69 L632.30 739.88 L633.30 744.63 L634.30 745.43 L635.30 743.82 L636.30 746.81 L637.30 744.77 L638.30 738.18 L639.30 746.00 L640.30 742.01 L641.30 741.71 L642.30 745.69 L643.30 750.63 L644.30 745.54 L645.30 741.45 L646.30 742.25 L647.30 746.05 L647.80 745.53 L647.80 767.40Z" fill="#4444EE"/>
<path d="M285.30 767.40 L285.30 758.19 L286.30 758.29 L287.30 758.33 L288.30 757.83 L289.30 758.05 L290.30 757.98 L291.30 758.07 L292.30 758.18 L293.30 757.95 L294.30 758.05 L295.30 757.91 L296.30 758.00 L297.30 757.88 L298.30 758.15 L299.30 758.34 L300.30 758.34 L301.30 757.95 L302.30 758.33 L303.30 758.00 L304.30 758.02 L305.30 758.40 L306.30 757.91 L307.30 758.42 L308.30 757.86 L309.30 757.88 L310.30 758.31 L311.30 757.98 L312.30 757.98 L313.30 758.41 L314.30 758.05 L315.30 758.43 L316.30 757.91 L317.30 758.07 L318.30 757.88 L319.30 758.52 L320.30 758.35 L321.30 758.16 L322.30 758.18 L323.30 758.48 L324.30 758.01 L325.30 758.05 L326.30 758.43 L327.30 758.54 L328.30 758.20 L329.30 758.39 L330.30 758.23 L331.30 758.35 L332.30 758.43 L333.30 758.69 L334.30 758.63 L335.30 758.42 L336.30 758.25 L337.30 758.46 L338.30 758.26 L339.30 758.41 L340.30 758.38 L341.30 759.16 L342.30 760.02 L343.30 760.78 L344.30 761.08 L345.30 760.47 L346.30 759.28 L347.30 758.63 L348.30 758.27 L349.30 758.71 L350.30 758.33 L351.30 758.69 L352.30 758.18 L353.30 758.34 L354.30 758.27 L355.30 758.37 L356.30 758.50 L357.30 758.21 L358.30 758.13 L359.30 758.62 L360.30 758.49 L361.30 758.29 L362.30 758.32 L363.30 758.50 L364.30 758.48 L365.30 758.13 L366.30 758.59 L367.30 758.64 L368.30 758.32 L369.30 758.59 L370.30 758.17 L371.30 758.56 L372.30 758.16 L373.30 758.52 L374.30 758.18 L375.30 758.27 L376.30 758.29 L377.30 758.64 L378.30 758.67 L379.30 758.76 L380.30 758.66 L381.30 758.33 L382.30 758.74 L383.30 758.62 L384.30 758.40 L385.30 758.68 L386.30 758.56 L387.30 758.63 L388.30 758.32 L389.30 758.70 L390.30 758.11 L391.30 758.38 L392.30 758.30 L393.30 758.41 L394.30 758.44 L395.30 758.12 L396.30 758.18 L397.30 758.23 L398.30 758.76 L399.30 758.38 L400.30 758.14 L401.30 758.35 L402.30 758.43 L403.30 758.34 L404.30 758.66 L405.30 758.29 L406.30 758.25 L407.30 758.73 L408.30 758.44 L409.30 758.38 L410.30 758.54 L411.30 758.32 L412.30 758.16 L413.30 758.17 L414.30 758.57 L415.30 758.68 L416.30 758.20 L417.30 758.37 L418.30 758.22 L419.30 758.19 L420.30 758.59 L421.30 758.38 L422.30 758.58 L423.30 758.24 L424.30 758.31 L425.30 758.62 L426.30 758.44 L427.30 758.38 L428.30 758.62 L429.30 758.66 L430.30 758.46 L431.30 758.73 L432.30 758.45 L433.30 758.15 L434.30 758.22 L435.30 758.74 L436.30 758.22 L437.30 758.30 L438.30 758.30 L439.30 758.76 L440.30 758.27 L441.30 758.65 L442.30 758.24 L443.30 758.56 L444.30 758.53 L445.30 758.66 L446.30 758.19 L447.30 758.63 L448.30 758.19 L449.30 758.43 L450.30 758.68 L451.30 758.34 L452.30 758.42 L453.30 758.76 L454.30 758.22 L455.30 758.60 L456.30 758.76 L457.30 758.26 L458.30 758.29 L459.30 758.52 L460.30 758.66 L461.30 758.42 L462.30 758.38 L463.30 758.31 L464.30 758.45 L465.30 758.40 L466.30 758.29 L467.30 758.65 L468.30 758.66 L469.30 758.45 L470.30 758.27 L471.30 758.24 L472.30 758.20 L473.30 758.48 L474.30 758.30 L475.30 758.71 L476.30 758.52 L477.30 758.74 L478.30 758.22 L479.30 758.11 L480.30 758.33 L481.30 758.27 L482.30 758.53 L483.30 758.24 L484.30 758.72 L485.30 758.53 L486.30 758.54 L487.30 758.20 L488.30 758.66 L489.30 758.67 L490.30 758.72 L491.30 758.21 L492.30 758.57 L493.30 758.17 L494.30 758.57 L495.30 758.22 L496.30 758.65 L497.30 758.17 L498.30 758.12 L499.30 758.19 L500.30 758.31 L501.30 758.18 L502.30 758.16 L503.30 758.13 L504.30 758.59 L505.30 758.21 L506.30 758.25 L507.30 758.55 L508.30 758.67 L509.30 758.17 L510.30 758.46 L511.30 758.42 L512.30 758.18 L513.30 758.45 L514.30 758.61 L515.30 758.32 L516.30 758.42 L517.30 758.60 L518.30 758.31 L519.30 758.17 L520.30 758.61 L521.30 758.23 L522.30 758.27 L523.30 758.43 L524.30 758.65 L525.30 758.33 L526.30 758.59 L527.30 758.61 L528.30 758.20 L529.30 758.60 L530.30 758.72 L531.30 758.21 L532.30 758.11 L533.30 758.57 L534.30 758.51 L535.30 758.41 L536.30 758.27 L537.30 758.77 L538.30 758.34 L539.30 758.62 L540.30 758.15 L541.30 758.50 L542.30 758.14 L543.30 758.48 L544.30 758.34 L545.30 758.76 L546.30 758.64 L547.30 758.58 L548.30 758.53 L549.30 758.66 L550.30 758.50 L551.30 758.72 L552.30 758.40 L553.30 758.13 L554.30 758.20 L555.30 758.36 L556.30 758.12 L557.30 758.29 L558.30 758.35 L559.30 758.47 L560.30 758.73 L561.30 758.18 L562.30 758.18 L563.30 758.24 L564.30 758.32 L565.30 758.23 L566.30 758.13 L567.30 758.12 L568.30 758.26 L569.30 758.77 L570.30 758.14 L571.30 758.40 L572.30 758.48 L573.30 758.49 L574.30 758.60 L575.30 758.76 L576.30 758.36 L577.30 758.36 L578.30 758.72 L579.30 758.16 L580.30 758.17 L581.30 758.20 L582.30 758.42 L583.30 758.52 L584.30 758.46 L585.30 758.53 L586.30 758.14 L587.30 758.16 L588.30 758.17 L589.30 758.43 L590.30 758.44 L591.30 758.30 L592.30 758.51 L593.30 758.53 L594.30 757.93 L595.30 758.36 L596.30 758.30 L597.30 758.09 L598.30 758.31 L599.30 757.96 L600.30 758.17 L601.30 757.71 L602.30 758.22 L603.30 757.73 L604.30 758.09 L605.30 757.74 L606.30 757.73 L607.30 757.63 L608.30 758.16 L609.30 757.61 L610.30 758.17 L611.30 758.04 L612.30 758.27 L613.30 757.94 L614.30 758.22 L615.30 757.90 L616.30 757.64 L617.30 757.75 L618.30 757.84 L619.30 758.21 L620.30 757.61 L621.30 758.03 L622.30 757.63 L623.30 758.18 L624.30 758.07 L625.30 757.63 L626.30 757.77 L627.30 758.15 L628.30 757.96 L629.30 757.91 L630.30 758.10 L631.30 758.13 L632.30 758.22 L633.30 757.93 L634.30 757.99 L635.30 758.04 L636.30 757.95 L637.30 758.04 L638.30 758.01 L639.30 757.76 L640.30 758.17 L641.30 758.21 L642.30 757.97 L643.30 758.08 L644.30 757.95 L645.30 757.69 L646.30 757.63 L647.30 757.72 L647.80 757.65 L647.80 767.40Z" fill="#E29136"/>
<path d="M285.30 767.40 L285.30 760.81 L286.30 759.07 L287.30 757.74 L288.30 756.20 L289.30 756.60 L290.30 756.38 L291.30 756.13 L292.30 756.48 L293.30 756.10 L294.30 756.26 L295.30 756.38 L296.30 756.96 L297.30 759.10 L298.30 760.73 L299.30 760.30 L300.30 760.70 L301.30 760.31 L302.30 760.40 L303.30 760.96 L304.30 760.80 L305.30 760.66 L306.30 760.43 L307.30 760.86 L308.30 760.56 L309.30 760.73 L310.30 760.45 L311.30 760.35 L312.30 760.46 L313.30 760.85 L314.30 760.46 L315.30 760.68 L316.30 760.41 L317.30 760.66 L318.30 760.37 L319.30 760.31 L320.30 760.42 L321.30 760.42 L322.30 760.42 L323.30 760.58 L324.30 760.86 L325.30 760.31 L326.30 760.66 L327.30 760.97 L328.30 760.68 L329.30 760.70 L330.30 760.84 L331.30 760.33 L332.30 760.90 L333.30 760.37 L334.30 760.61 L335.30 760.86 L336.30 760.74 L337.30 760.67 L338.30 760.90 L339.30 760.46 L340.30 760.69 L341.30 760.97 L342.30 761.58 L343.30 762.12 L344.30 762.27 L345.30 762.10 L346.30 762.08 L347.30 761.94 L348.30 761.81 L349.30 761.61 L350.30 761.54 L351.30 761.60 L352.30 761.59 L353.30 762.14 L354.30 761.88 L355.30 762.10 L356.30 761.77 L357.30 761.77 L358.30 761.78 L359.30 761.58 L360.30 762.01 L361.30 761.67 L362.30 761.76 L363.30 762.02 L364.30 761.50 L365.30 762.12 L366.30 761.85 L367.30 761.80 L368.30 761.76 L369.30 761.50 L370.30 761.79 L371.30 761.56 L372.30 761.96 L373.30 761.84 L374.30 762.06 L375.30 761.73 L376.30 761.88 L377.30 761.63 L378.30 762.08 L379.30 761.85 L380.30 761.51 L381.30 762.15 L382.30 761.71 L383.30 761.70 L384.30 761.67 L385.30 761.78 L386.30 761.82 L387.30 761.51 L388.30 761.97 L389.30 761.69 L390.30 761.71 L391.30 761.67 L392.30 761.84 L393.30 762.15 L394.30 761.64 L395.30 761.97 L396.30 761.63 L397.30 761.49 L398.30 761.64 L399.30 761.89 L400.30 761.58 L401.30 761.90 L402.30 761.94 L403.30 761.77 L404.30 761.72 L405.30 761.70 L406.30 761.79 L407.30 761.88 L408.30 761.66 L409.30 761.94 L410.30 761.75 L411.30 762.16 L412.30 762.07 L413.30 761.57 L414.30 762.02 L415.30 761.88 L416.30 762.12 L417.30 761.64 L418.30 761.94 L419.30 762.13 L420.30 761.98 L421.30 761.53 L422.30 761.65 L423.30 762.16 L424.30 761.52 L425.30 762.11 L426.30 761.83 L427.30 761.80 L428.30 761.63 L429.30 762.07 L430.30 761.60 L431.30 761.98 L432.30 761.66 L433.30 761.53 L434.30 761.76 L435.30 762.16 L436.30 761.71 L437.30 761.87 L438.30 761.67 L439.30 761.63 L440.30 762.09 L441.30 761.78 L442.30 761.73 L443.30 761.53 L444.30 761.75 L445.30 761.75 L446.30 761.64 L447.30 762.05 L448.30 761.58 L449.30 761.77 L450.30 761.73 L451.30 762.06 L452.30 761.81 L453.30 761.88 L454.30 762.02 L455.30 761.52 L456.30 761.59 L457.30 761.85 L458.30 762.11 L459.30 761.50 L460.30 762.08 L461.30 761.82 L462.30 761.78 L463.30 761.58 L464.30 761.72 L465.30 761.75 L466.30 761.81 L467.30 761.50 L468.30 761.61 L469.30 761.92 L470.30 761.62 L471.30 761.52 L472.30 761.83 L473.30 762.10 L474.30 762.12 L475.30 761.51 L476.30 762.02 L477.30 761.62 L478.30 762.03 L479.30 762.01 L480.30 762.05 L481.30 761.61 L482.30 762.10 L483.30 761.84 L484.30 761.61 L485.30 761.80 L486.30 762.15 L487.30 762.15 L488.30 761.60 L489.30 761.96 L490.30 762.10 L491.30 761.81 L492.30 761.63 L493.30 761.96 L494.30 762.07 L495.30 762.04 L496.30 761.84 L497.30 761.63 L498.30 762.10 L499.30 761.65 L500.30 761.70 L501.30 761.78 L502.30 761.90 L503.30 762.14 L504.30 761.82 L505.30 761.88 L506.30 761.70 L507.30 762.12 L508.30 762.05 L509.30 762.15 L510.30 761.83 L511.30 762.12 L512.30 761.80 L513.30 761.87 L514.30 761.94 L515.30 762.03 L516.30 761.54 L517.30 761.84 L518.30 762.09 L519.30 761.77 L520.30 761.65 L521.30 761.83 L522.30 761.56 L523.30 761.59 L524.30 761.70 L525.30 762.14 L526.30 761.89 L527.30 761.82 L528.30 762.05 L529.30 761.82 L530.30 761.71 L531.30 761.65 L532.30 761.65 L533.30 761.66 L534.30 761.96 L535.30 761.75 L536.30 761.82 L537.30 761.65 L538.30 762.08 L539.30 762.04 L540.30 761.68 L541.30 761.67 L542.30 762.01 L543.30 761.64 L544.30 761.64 L545.30 761.72 L546.30 761.85 L547.30 762.12 L548.30 762.01 L549.30 761.64 L550.30 761.53 L551.30 762.05 L552.30 762.14 L553.30 761.92 L554.30 761.53 L555.30 762.01 L556.30 761.53 L557.30 761.63 L558.30 761.59 L559.30 761.49 L560.30 761.70 L561.30 762.03 L562.30 761.87 L563.30 761.89 L564.30 761.71 L565.30 761.92 L566.30 761.67 L567.30 762.14 L568.30 762.01 L569.30 762.01 L570.30 762.05 L571.30 761.65 L572.30 761.57 L573.30 762.10 L574.30 761.84 L575.30 762.16 L576.30 761.99 L577.30 762.06 L578.30 761.69 L579.30 761.60 L580.30 761.59 L581.30 761.98 L582.30 761.88 L583.30 762.00 L584.30 761.71 L585.30 762.01 L586.30 761.64 L587.30 761.84 L588.30 761.79 L589.30 761.57 L590.30 761.54 L591.30 761.91 L592.30 761.36 L593.30 761.42 L594.30 761.36 L595.30 760.55 L596.30 760.75 L597.30 760.45 L598.30 760.12 L599.30 760.50 L600.30 761.28 L601.30 761.52 L602.30 762.06 L603.30 762.31 L604.30 761.95 L605.30 762.20 L606.30 762.17 L607.30 762.03 L608.30 761.87 L609.30 762.15 L610.30 762.15 L611.30 761.91 L612.30 762.11 L613.30 761.91 L614.30 761.83 L615.30 762.07 L616.30 761.67 L617.30 761.62 L618.30 762.24 L619.30 762.22 L620.30 762.19 L621.30 761.93 L622.30 762.05 L623.30 761.76 L624.30 761.58 L625.30 761.94 L626.30 762.06 L627.30 762.09 L628.30 761.62 L629.30 761.68 L630.30 761.63 L631.30 761.55 L632.30 761.91 L633.30 761.71 L634.30 761.98 L635.30 762.11 L636.30 761.74 L637.30 761.95 L638.30 761.83 L639.30 761.81 L640.30 762.02 L641.30 762.17 L642.30 761.68 L643.30 761.66 L644.30 761.66 L645.30 761.95 L646.30 761.94 L647.30 761.74 L647.80 761.91 L647.80 767.40Z" fill="#7ccaa8"/>
<path d="M285.30 767.40 L285.30 763.18 L286.30 763.16 L287.30 763.07 L288.30 763.24 L289.30 763.24 L290.30 763.11 L291.30 763.18 L292.30 763.22 L293.30 763.21 L294.30 763.23 L295.30 763.29 L296.30 763.13 L297.30 763.04 L298.30 763.11 L299.30 763.13 L300.30 763.23 L301.30 763.20 L302.30 763.30 L303.30 763.10 L304.30 763.24 L305.30 763.25 L306.30 763.01 L307.30 763.23 L308.30 763.01 L309.30 763.14 L310.30 763.09 L311.30 763.13 L312.30 763.28 L313.30 763.10 L314.30 763.26 L315.30 763.21 L316.30 763.30 L317.30 763.32 L318.30 763.22 L319.30 763.34 L320.30 763.21 L321.30 763.06 L322.30 763.01 L323.30 763.20 L324.30 763.31 L325.30 763.23 L326.30 763.32 L327.30 763.27 L328.30 763.13 L329.30 763.14 L330.30 763.33 L331.30 763.18 L332.30 763.20 L333.30 763.21 L334.30 763.30 L335.30 763.21 L336.30 763.31 L337.30 763.11 L338.30 763.12 L339.30 763.13 L340.30 763.29 L341.30 763.41 L342.30 763.90 L343.30 764.25 L344.30 764.39 L345.30 764.16 L346.30 764.38 L347.30 764.13 L348.30 764.04 L349.30 764.07 L350.30 764.20 L351.30 764.20 L352.30 764.06 L353.30 764.11 L354.30 764.08 L355.30 764.29 L356.30 764.15 L357.30 764.10 L358.30 764.27 L359.30 764.28 L360.30 764.07 L361.30 764.16 L362.30 764.21 L363.30 764.19 L364.30 764.26 L365.30 764.26 L366.30 764.31 L367.30 764.21 L368.30 764.30 L369.30 764.04 L370.30 764.02 L371.30 764.15 L372.30 764.31 L373.30 764.14 L374.30 764.29 L375.30 764.22 L376.30 764.30 L377.30 764.17 L378.30 764.32 L379.30 764.25 L380.30 764.26 L381.30 764.18 L382.30 764.02 L383.30 764.14 L384.30 764.07 L385.30 764.09 L386.30 764.16 L387.30 764.31 L388.30 764.32 L389.30 764.29 L390.30 764.16 L391.30 764.22 L392.30 764.02 L393.30 764.27 L394.30 764.29 L395.30 764.11 L396.30 764.13 L397.30 764.31 L398.30 764.21 L399.30 764.18 L400.30 764.05 L401.30 764.06 L402.30 764.03 L403.30 764.15 L404.30 764.01 L405.30 764.17 L406.30 764.23 L407.30 764.28 L408.30 764.04 L409.30 764.10 L410.30 764.11 L411.30 763.99 L412.30 764.11 L413.30 764.22 L414.30 764.09 L415.30 764.01 L416.30 764.26 L417.30 764.00 L418.30 764.18 L419.30 764.28 L420.30 764.15 L421.30 764.05 L422.30 764.15 L423.30 764.22 L424.30 764.06 L425.30 764.28 L426.30 764.09 L427.30 764.19 L428.30 764.11 L429.30 764.14 L430.30 764.22 L431.30 764.24 L432.30 764.03 L433.30 764.16 L434.30 764.21 L435.30 764.11 L436.30 764.05 L437.30 764.28 L438.30 764.15 L439.30 764.26 L440.30 764.05 L441.30 764.29 L442.30 764.02 L443.30 764.12 L444.30 764.13 L445.30 764.12 L446.30 764.21 L447.30 764.15 L448.30 764.24 L449.30 764.18 L450.30 764.10 L451.30 764.09 L452.30 764.19 L453.30 764.09 L454.30 764.03 L455.30 764.04 L456.30 764.30 L457.30 764.13 L458.30 764.24 L459.30 764.02 L460.30 764.10 L461.30 764.14 L462.30 764.09 L463.30 764.12 L464.30 764.22 L465.30 763.98 L466.30 764.27 L467.30 764.28 L468.30 764.19 L469.30 764.24 L470.30 764.16 L471.30 764.08 L472.30 764.16 L473.30 763.96 L474.30 764.18 L475.30 763.97 L476.30 763.95 L477.30 764.10 L478.30 764.01 L479.30 764.26 L480.30 763.97 L481.30 764.13 L482.30 764.17 L483.30 763.97 L484.30 764.15 L485.30 764.25 L486.30 764.27 L487.30 764.01 L488.30 764.22 L489.30 764.06 L490.30 764.25 L491.30 764.00 L492.30 763.95 L493.30 764.15 L494.30 764.01 L495.30 763.97 L496.30 764.20 L497.30 764.11 L498.30 763.94 L499.30 763.95 L500.30 764.08 L501.30 764.09 L502.30 764.26 L503.30 763.99 L504.30 763.95 L505.30 764.08 L506.30 764.19 L507.30 764.23 L508.30 764.05 L509.30 764.03 L510.30 764.06 L511.30 763.98 L512.30 764.25 L513.30 764.26 L514.30 764.23 L515.30 764.16 L516.30 764.25 L517.30 764.18 L518.30 764.19 L519.30 763.99 L520.30 764.08 L521.30 764.19 L522.30 764.09 L523.30 764.21 L524.30 763.92 L525.30 764.23 L526.30 764.18 L527.30 764.06 L528.30 763.95 L529.30 764.03 L530.30 764.21 L531.30 764.05 L532.30 764.00 L533.30 763.94 L534.30 764.04 L535.30 764.17 L536.30 763.97 L537.30 764.01 L538.30 763.95 L539.30 764.18 L540.30 763.97 L541.30 764.09 L542.30 764.17 L543.30 764.16 L544.30 764.21 L545.30 763.94 L546.30 764.20 L547.30 764.03 L548.30 764.16 L549.30 764.16 L550.30 764.12 L551.30 763.96 L552.30 764.22 L553.30 764.11 L554.30 764.13 L555.30 764.08 L556.30 764.03 L557.30 763.95 L558.30 764.02 L559.30 763.95 L560.30 763.94 L561.30 763.96 L562.30 764.23 L563.30 764.22 L564.30 764.06 L565.30 764.17 L566.30 764.11 L567.30 764.06 L568.30 764.05 L569.30 763.97 L570.30 763.97 L571.30 764.16 L572.30 764.04 L573.30 764.07 L574.30 764.08 L575.30 763.98 L576.30 763.99 L577.30 763.99 L578.30 764.10 L579.30 764.20 L580.30 764.03 L581.30 764.14 L582.30 764.12 L583.30 764.19 L584.30 764.20 L585.30 764.07 L586.30 763.90 L587.30 764.02 L588.30 764.14 L589.30 763.90 L590.30 764.16 L591.30 763.99 L592.30 764.20 L593.30 763.90 L594.30 763.91 L595.30 763.94 L596.30 764.09 L597.30 764.06 L598.30 764.05 L599.30 763.90 L600.30 764.02 L601.30 764.13 L602.30 763.91 L603.30 764.07 L604.30 763.97 L605.30 763.89 L606.30 763.95 L607.30 764.17 L608.30 763.93 L609.30 764.06 L610.30 763.87 L611.30 764.08 L612.30 764.15 L613.30 764.17 L614.30 763.87 L615.30 764.06 L616.30 764.20 L617.30 764.04 L618.30 763.88 L619.30 764.13 L620.30 763.89 L621.30 763.87 L622.30 764.13 L623.30 764.13 L624.30 764.15 L625.30 764.17 L626.30 764.20 L627.30 764.13 L628.30 763.93 L629.30 764.05 L630.30 764.06 L631.30 763.99 L632.30 764.15 L633.30 763.93 L634.30 764.11 L635.30 764.02 L636.30 764.12 L637.30 764.11 L638.30 764.14 L639.30 764.06 L640.30 764.05 L641.30 764.16 L642.30 763.91 L643.30 764.08 L644.30 763.96 L645.30 764.13 L646.30 764.18 L647.30 763.86 L647.80 764.11 L647.80 767.40Z" fill="#E29136"/>
<path d="M285.50 761.78 L286.20 759.15 L286.90 758.06 L287.60 755.90 L288.30 755.94 L289.00 755.40 L289.70 756.41 L290.40 756.60 L291.10 757.16 L291.80 757.24 L292.50 757.84 L293.20 756.87 L293.90 757.18 L294.60 756.19 L295.30 756.04 L296.00 756.50 L296.70 758.64 L297.40 760.17 L298.00 762.28 L298.00 764.02 L297.40 764.02 L296.70 764.02 L296.00 764.02 L295.30 764.02 L294.60 764.02 L293.90 764.02 L293.20 764.02 L292.50 764.02 L291.80 764.02 L291.10 764.02 L290.40 764.02 L289.70 764.02 L289.00 764.02 L288.30 764.02 L287.60 764.02 L286.90 764.02 L286.20 764.02 L285.50 764.02Z" fill="#44EEEE"/>
<g clip-path="url(#ap0)"><g opacity="0.28"><path d="M281.00 758.50H651.00" stroke="#3a2c18" stroke-width="1" stroke-dasharray="1.1 1.15" opacity="1"/><path d="M281.00 741.50H651.00" stroke="#3a2c18" stroke-width="1" stroke-dasharray="1.1 1.15" opacity="1"/><path d="M281.00 725.50H651.00" stroke="#3a2c18" stroke-width="1" stroke-dasharray="1.1 1.15" opacity="1"/><path d="M281.00 708.50H651.00" stroke="#3a2c18" stroke-width="1" stroke-dasharray="1.1 1.15" opacity="1"/><path d="M281.00 691.50H651.00" stroke="#3a2c18" stroke-width="1" stroke-dasharray="1.1 1.15" opacity="1"/><path d="M281.00 674.50H651.00" stroke="#3a2c18" stroke-width="1" stroke-dasharray="1.1 1.15" opacity="1"/><path d="M281.00 657.50H651.00" stroke="#3a2c18" stroke-width="1" stroke-dasharray="1.1 1.15" opacity="1"/><path d="M281.00 640.50H651.00" stroke="#3a2c18" stroke-width="1" stroke-dasharray="1.1 1.15" opacity="1"/><path d="M281.00 623.50H651.00" stroke="#3a2c18" stroke-width="1" stroke-dasharray="1.1 1.15" opacity="1"/><path d="M281.00 606.50H651.00" stroke="#3a2c18" stroke-width="1" stroke-dasharray="1.1 1.15" opacity="1"/><path d="M288.50 598.50V770.00" stroke="#3e3e1c" stroke-width="1" stroke-dasharray="1.1 1.15" opacity="1"/><path d="M303.50 598.50V770.00" stroke="#3e3e1c" stroke-width="1" stroke-dasharray="1.1 1.15" opacity="1"/><path d="M318.50 598.50V770.00" stroke="#3e3e1c" stroke-width="1" stroke-dasharray="1.1 1.15" opacity="1"/><path d="M349.50 598.50V770.00" stroke="#3e3e1c" stroke-width="1" stroke-dasharray="1.1 1.15" opacity="1"/><path d="M364.50 598.50V770.00" stroke="#3e3e1c" stroke-width="1" stroke-dasharray="1.1 1.15" opacity="1"/><path d="M379.50 598.50V770.00" stroke="#3e3e1c" stroke-width="1" stroke-dasharray="1.1 1.15" opacity="1"/><path d="M394.50 598.50V770.00" stroke="#3e3e1c" stroke-width="1" stroke-dasharray="1.1 1.15" opacity="1"/><path d="M409.50 598.50V770.00" stroke="#3e3e1c" stroke-width="1" stroke-dasharray="1.1 1.15" opacity="1"/><path d="M440.50 598.50V770.00" stroke="#3e3e1c" stroke-width="1" stroke-dasharray="1.1 1.15" opacity="1"/><path d="M455.50 598.50V770.00" stroke="#3e3e1c" stroke-width="1" stroke-dasharray="1.1 1.15" opacity="1"/><path d="M470.50 598.50V770.00" stroke="#3e3e1c" stroke-width="1" stroke-dasharray="1.1 1.15" opacity="1"/><path d="M486.50 598.50V770.00" stroke="#3e3e1c" stroke-width="1" stroke-dasharray="1.1 1.15" opacity="1"/><path d="M501.50 598.50V770.00" stroke="#3e3e1c" stroke-width="1" stroke-dasharray="1.1 1.15" opacity="1"/><path d="M531.50 598.50V770.00" stroke="#3e3e1c" stroke-width="1" stroke-dasharray="1.1 1.15" opacity="1"/><path d="M546.50 598.50V770.00" stroke="#3e3e1c" stroke-width="1" stroke-dasharray="1.1 1.15" opacity="1"/><path d="M562.50 598.50V770.00" stroke="#3e3e1c" stroke-width="1" stroke-dasharray="1.1 1.15" opacity="1"/><path d="M577.50 598.50V770.00" stroke="#3e3e1c" stroke-width="1" stroke-dasharray="1.1 1.15" opacity="1"/><path d="M592.50 598.50V770.00" stroke="#3e3e1c" stroke-width="1" stroke-dasharray="1.1 1.15" opacity="1"/><path d="M622.50 598.50V770.00" stroke="#3e3e1c" stroke-width="1" stroke-dasharray="1.1 1.15" opacity="1"/><path d="M638.50 598.50V770.00" stroke="#3e3e1c" stroke-width="1" stroke-dasharray="1.1 1.15" opacity="1"/></g><g opacity="0.12"><path d="M281.00 767.50H651.00" stroke="#a4b0a4" stroke-width="1" stroke-dasharray="1.1 1.15" opacity="1"/><path d="M281.00 751.50H651.00" stroke="#a4b0a4" stroke-width="1" stroke-dasharray="1.1 1.15" opacity="1"/><path d="M281.00 734.50H651.00" stroke="#a4b0a4" stroke-width="1" stroke-dasharray="1.1 1.15" opacity="1"/><path d="M281.00 717.50H651.00" stroke="#a4b0a4" stroke-width="1" stroke-dasharray="1.1 1.15" opacity="1"/><path d="M281.00 700.50H651.00" stroke="#a4b0a4" stroke-width="1" stroke-dasharray="1.1 1.15" opacity="1"/><path d="M281.00 683.50H651.00" stroke="#a4b0a4" stroke-width="1" stroke-dasharray="1.1 1.15" opacity="1"/><path d="M281.00 666.50H651.00" stroke="#a4b0a4" stroke-width="1" stroke-dasharray="1.1 1.15" opacity="1"/><path d="M281.00 649.50H651.00" stroke="#a4b0a4" stroke-width="1" stroke-dasharray="1.1 1.15" opacity="1"/><path d="M281.00 632.50H651.00" stroke="#a4b0a4" stroke-width="1" stroke-dasharray="1.1 1.15" opacity="1"/><path d="M281.00 615.50H651.00" stroke="#a4b0a4" stroke-width="1" stroke-dasharray="1.1 1.15" opacity="1"/><path d="M281.00 599.50H651.00" stroke="#a4b0a4" stroke-width="1" stroke-dasharray="1.1 1.15" opacity="1"/><path d="M333.50 598.50V770.00" stroke="#8a9e8a" stroke-width="1" stroke-dasharray="1.1 1.15" opacity="1"/><path d="M425.50 598.50V770.00" stroke="#8a9e8a" stroke-width="1" stroke-dasharray="1.1 1.15" opacity="1"/><path d="M516.50 598.50V770.00" stroke="#8a9e8a" stroke-width="1" stroke-dasharray="1.1 1.15" opacity="1"/><path d="M607.50 598.50V770.00" stroke="#8a9e8a" stroke-width="1" stroke-dasharray="1.1 1.15" opacity="1"/></g></g>
<path d="M280.80 596.20 L284.00 590.60 L287.20 596.20Z" fill="#fff"/>
<path d="M650.00 762.70 L656.00 766.00 L650.00 769.30Z" fill="#fff"/>
<path d="M285.30 754.02 L286.30 747.97 L287.30 742.20 L288.30 735.81 L289.30 734.81 L290.30 732.82 L291.30 737.44 L292.30 736.60 L293.30 733.37 L294.30 728.77 L295.30 740.24 L296.30 744.96 L297.30 750.97 L298.30 753.02 L299.30 749.56 L300.30 753.13 L301.30 750.79 L302.30 746.88 L303.30 741.37 L304.30 745.44 L305.30 751.77 L306.30 753.52 L307.30 753.65 L308.30 754.48 L309.30 755.63 L310.30 754.46 L311.30 754.60 L312.30 755.68 L313.30 754.78 L314.30 755.63 L315.30 755.99 L316.30 755.40 L317.30 755.40 L318.30 755.27 L319.30 754.77 L320.30 754.38 L321.30 754.13 L322.30 754.10 L323.30 754.06 L324.30 754.48 L325.30 755.46 L326.30 755.72 L327.30 754.81 L328.30 754.97 L329.30 754.71 L330.30 755.89 L331.30 755.69 L332.30 754.21 L333.30 754.86 L334.30 754.67 L335.30 755.88 L336.30 755.27 L337.30 754.23 L338.30 755.26 L339.30 755.28 L340.30 757.60 L341.30 757.79 L342.30 757.80 L343.30 759.24 L344.30 758.70 L345.30 758.02 L346.30 757.78 L347.30 756.68 L348.30 754.08 L349.30 755.84 L350.30 755.69 L351.30 755.41 L352.30 754.64 L353.30 754.36 L354.30 755.13 L355.30 755.09 L356.30 754.50 L357.30 755.54 L358.30 755.35 L359.30 754.87 L360.30 754.82 L361.30 756.04 L362.30 755.89 L363.30 755.84 L364.30 754.65 L365.30 754.72 L366.30 754.15 L367.30 754.57 L368.30 755.62 L369.30 754.58 L370.30 754.14 L371.30 755.43 L372.30 756.12 L373.30 755.39 L374.30 755.58 L375.30 755.80 L376.30 756.06 L377.30 755.91 L378.30 754.41 L379.30 756.06 L380.30 754.92 L381.30 755.75 L382.30 755.78 L383.30 754.51 L384.30 755.57 L385.30 755.81 L386.30 755.26 L387.30 754.78 L388.30 755.13 L389.30 754.45 L390.30 755.38 L391.30 755.13 L392.30 754.75 L393.30 755.27 L394.30 754.75 L395.30 755.26 L396.30 755.94 L397.30 755.96 L398.30 754.63 L399.30 754.71 L400.30 754.31 L401.30 754.83 L402.30 755.05 L403.30 755.89 L404.30 754.50 L405.30 756.00 L406.30 755.38 L407.30 755.96 L408.30 755.47 L409.30 755.62 L410.30 755.39 L411.30 754.81 L412.30 755.16 L413.30 755.77 L414.30 754.68 L415.30 754.77 L416.30 754.59 L417.30 756.20 L418.30 755.03 L419.30 754.46 L420.30 755.75 L421.30 755.87 L422.30 754.63 L423.30 755.55 L424.30 755.48 L425.30 754.63 L426.30 755.52 L427.30 755.90 L428.30 755.87 L429.30 755.60 L430.30 754.89 L431.30 755.56 L432.30 754.75 L433.30 756.18 L434.30 755.81 L435.30 755.05 L436.30 755.35 L437.30 755.31 L438.30 754.43 L439.30 755.77 L440.30 755.97 L441.30 756.27 L442.30 755.36 L443.30 755.74 L444.30 755.38 L445.30 756.34 L446.30 756.35 L447.30 755.58 L448.30 754.82 L449.30 755.75 L450.30 754.51 L451.30 755.19 L452.30 755.55 L453.30 754.79 L454.30 755.90 L455.30 755.15 L456.30 754.66 L457.30 755.28 L458.30 755.74 L459.30 756.19 L460.30 755.23 L461.30 756.01 L462.30 755.64 L463.30 755.30 L464.30 754.49 L465.30 755.04 L466.30 755.35 L467.30 754.67 L468.30 755.79 L469.30 755.63 L470.30 755.04 L471.30 755.30 L472.30 755.97 L473.30 755.59 L474.30 754.76 L475.30 755.94 L476.30 755.00 L477.30 756.34 L478.30 754.50 L479.30 755.05 L480.30 755.79 L481.30 754.45 L482.30 754.84 L483.30 756.33 L484.30 755.95 L485.30 755.46 L486.30 754.44 L487.30 756.18 L488.30 756.37 L489.30 755.84 L490.30 756.38 L491.30 755.65 L492.30 755.39 L493.30 755.59 L494.30 756.20 L495.30 756.44 L496.30 754.86 L497.30 755.60 L498.30 755.52 L499.30 755.53 L500.30 755.11 L501.30 754.68 L502.30 754.83 L503.30 755.03 L504.30 755.82 L505.30 756.17 L506.30 756.34 L507.30 754.78 L508.30 756.41 L509.30 755.37 L510.30 754.68 L511.30 755.88 L512.30 755.74 L513.30 755.69 L514.30 754.62 L515.30 755.15 L516.30 754.84 L517.30 756.47 L518.30 755.07 L519.30 755.64 L520.30 755.74 L521.30 754.90 L522.30 755.07 L523.30 754.72 L524.30 755.07 L525.30 754.72 L526.30 755.70 L527.30 755.45 L528.30 754.99 L529.30 755.66 L530.30 756.31 L531.30 755.40 L532.30 754.82 L533.30 754.83 L534.30 756.34 L535.30 755.83 L536.30 756.14 L537.30 755.91 L538.30 754.66 L539.30 755.76 L540.30 755.98 L541.30 756.06 L542.30 755.72 L543.30 755.26 L544.30 755.93 L545.30 756.25 L546.30 756.17 L547.30 756.10 L548.30 754.80 L549.30 756.29 L550.30 755.11 L551.30 756.42 L552.30 755.05 L553.30 756.11 L554.30 755.07 L555.30 755.78 L556.30 756.50 L557.30 756.47 L558.30 755.04 L559.30 755.57 L560.30 755.68 L561.30 755.96 L562.30 755.27 L563.30 755.70 L564.30 756.55 L565.30 755.46 L566.30 756.05 L567.30 754.97 L568.30 755.58 L569.30 755.12 L570.30 756.45 L571.30 755.26 L572.30 755.46 L573.30 754.98 L574.30 754.91 L575.30 755.59 L576.30 755.51 L577.30 755.16 L578.30 756.18 L579.30 755.62 L580.30 755.13 L581.30 755.52 L582.30 755.63 L583.30 755.00 L584.30 754.76 L585.30 756.21 L586.30 756.59 L587.30 755.50 L588.30 756.44 L589.30 754.78 L590.30 755.79 L591.30 754.10 L592.30 745.97 L593.30 748.89 L594.30 746.64 L595.30 740.96 L596.30 742.87 L597.30 736.46 L598.30 738.95 L599.30 739.54 L600.30 736.69 L601.30 740.30 L602.30 742.50 L603.30 742.50 L604.30 748.18 L605.30 742.65 L606.30 747.65 L607.30 742.06 L608.30 744.75 L609.30 749.79 L610.30 748.61 L611.30 750.61 L612.30 751.73 L613.30 747.78 L614.30 751.63 L615.30 750.02 L616.30 741.03 L617.30 740.81 L618.30 747.80 L619.30 744.07 L620.30 746.64 L621.30 745.03 L622.30 748.79 L623.30 749.75 L624.30 739.51 L625.30 744.67 L626.30 738.38 L627.30 735.61 L628.30 736.91 L629.30 742.22 L630.30 741.92 L631.30 741.69 L632.30 739.88 L633.30 744.63 L634.30 745.43 L635.30 743.82 L636.30 746.81 L637.30 744.77 L638.30 738.18 L639.30 746.00 L640.30 742.01 L641.30 741.71 L642.30 745.69 L643.30 750.63 L644.30 745.54 L645.30 741.45 L646.30 742.25 L647.30 746.05 L647.80 745.53" fill="none" stroke="#0000EE" stroke-width="1.0"/>
<text x="373.30" y="593.50" font-size="13.0" text-anchor="start" fill="#cacaca" stroke="#cacaca" stroke-width="0.12" >Processor 0 &#160;(1day)</text>
<text x="0" y="0" font-size="11.3" text-anchor="middle" dominant-baseline="central" fill="#c0c0c0" transform="translate(222.60 683.00) rotate(-90)" textLength="73" lengthAdjust="spacingAndGlyphs" >Percent (%)</text>
<text x="0" y="0" font-size="8.4" text-anchor="middle" dominant-baseline="central" fill="#323232" transform="translate(672.20 638.00) rotate(90)" textLength="123" lengthAdjust="spacingAndGlyphs" font-family="Liberation Mono" font-weight="bold">RRDTOOL / TOBI OETIKER</text>
<text x="275.80" y="771.30" font-size="11.15" text-anchor="end" fill="#cacaca" stroke="#cacaca" stroke-width="0.12" >0</text>
<text x="275.80" y="754.41" font-size="11.15" text-anchor="end" fill="#cacaca" stroke="#cacaca" stroke-width="0.12" >10</text>
<text x="275.80" y="737.52" font-size="11.15" text-anchor="end" fill="#cacaca" stroke="#cacaca" stroke-width="0.12" >20</text>
<text x="275.80" y="720.63" font-size="11.15" text-anchor="end" fill="#cacaca" stroke="#cacaca" stroke-width="0.12" >30</text>
<text x="275.80" y="703.74" font-size="11.15" text-anchor="end" fill="#cacaca" stroke="#cacaca" stroke-width="0.12" >40</text>
<text x="275.80" y="686.85" font-size="11.15" text-anchor="end" fill="#cacaca" stroke="#cacaca" stroke-width="0.12" >50</text>
<text x="275.80" y="669.96" font-size="11.15" text-anchor="end" fill="#cacaca" stroke="#cacaca" stroke-width="0.12" >60</text>
<text x="275.80" y="653.07" font-size="11.15" text-anchor="end" fill="#cacaca" stroke="#cacaca" stroke-width="0.12" >70</text>
<text x="275.80" y="636.18" font-size="11.15" text-anchor="end" fill="#cacaca" stroke="#cacaca" stroke-width="0.12" >80</text>
<text x="275.80" y="619.29" font-size="11.15" text-anchor="end" fill="#cacaca" stroke="#cacaca" stroke-width="0.12" >90</text>
<text x="275.80" y="602.40" font-size="11.15" text-anchor="end" fill="#cacaca" stroke="#cacaca" stroke-width="0.12" >100</text>
<text x="334.10" y="781.00" font-size="11.15" text-anchor="middle" fill="#cacaca" stroke="#cacaca" stroke-width="0.12" >18:00</text>
<text x="425.40" y="781.00" font-size="11.15" text-anchor="middle" fill="#cacaca" stroke="#cacaca" stroke-width="0.12" >00:00</text>
<text x="516.70" y="781.00" font-size="11.15" text-anchor="middle" fill="#cacaca" stroke="#cacaca" stroke-width="0.12" >06:00</text>
<text x="608.00" y="781.00" font-size="11.15" text-anchor="middle" fill="#cacaca" stroke="#cacaca" stroke-width="0.12" >12:00</text>
<rect x="224.80" y="789.80" width="9.4" height="9.4" fill="#a0a0a0"/><rect x="225.90" y="790.90" width="7.2" height="7.2" fill="#4444EE"/>
<text x="239.80" y="798.30" font-size="11.15" text-anchor="start" fill="#cacaca" stroke="#cacaca" stroke-width="0.12" >user</text>
<text x="310.10" y="798.30" font-size="11.15" text-anchor="start" fill="#cacaca" stroke="#cacaca" stroke-width="0.12" >Cur:</text>
<text x="377.40" y="798.30" font-size="11.15" text-anchor="end" fill="#cacaca" stroke="#cacaca" stroke-width="0.12" >9.7%</text>
<text x="406.40" y="798.30" font-size="11.15" text-anchor="start" fill="#cacaca" stroke="#cacaca" stroke-width="0.12" >Avg:</text>
<text x="473.90" y="798.30" font-size="11.15" text-anchor="end" fill="#cacaca" stroke="#cacaca" stroke-width="0.12" >8.3%</text>
<text x="502.60" y="798.30" font-size="11.15" text-anchor="start" fill="#cacaca" stroke="#cacaca" stroke-width="0.12" >Min:</text>
<text x="570.20" y="798.30" font-size="11.15" text-anchor="end" fill="#cacaca" stroke="#cacaca" stroke-width="0.12" >4.9%</text>
<text x="598.70" y="798.30" font-size="11.15" text-anchor="start" fill="#cacaca" stroke="#cacaca" stroke-width="0.12" >Max:</text>
<text x="666.70" y="798.30" font-size="11.15" text-anchor="end" fill="#cacaca" stroke="#cacaca" stroke-width="0.12" >22.5%</text>
<rect x="224.80" y="803.20" width="9.4" height="9.4" fill="#a0a0a0"/><rect x="225.90" y="804.30" width="7.2" height="7.2" fill="#EEEE44"/>
<text x="239.80" y="811.70" font-size="11.15" text-anchor="start" fill="#cacaca" stroke="#cacaca" stroke-width="0.12" >nice</text>
<text x="310.10" y="811.70" font-size="11.15" text-anchor="start" fill="#cacaca" stroke="#cacaca" stroke-width="0.12" >Cur:</text>
<text x="377.40" y="811.70" font-size="11.15" text-anchor="end" fill="#cacaca" stroke="#cacaca" stroke-width="0.12" >0.0%</text>
<text x="406.40" y="811.70" font-size="11.15" text-anchor="start" fill="#cacaca" stroke="#cacaca" stroke-width="0.12" >Avg:</text>
<text x="473.90" y="811.70" font-size="11.15" text-anchor="end" fill="#cacaca" stroke="#cacaca" stroke-width="0.12" >0.0%</text>
<text x="502.60" y="811.70" font-size="11.15" text-anchor="start" fill="#cacaca" stroke="#cacaca" stroke-width="0.12" >Min:</text>
<text x="570.20" y="811.70" font-size="11.15" text-anchor="end" fill="#cacaca" stroke="#cacaca" stroke-width="0.12" >0.0%</text>
<text x="598.70" y="811.70" font-size="11.15" text-anchor="start" fill="#cacaca" stroke="#cacaca" stroke-width="0.12" >Max:</text>
<text x="666.70" y="811.70" font-size="11.15" text-anchor="end" fill="#cacaca" stroke="#cacaca" stroke-width="0.12" >0.1%</text>
<rect x="224.80" y="816.60" width="9.4" height="9.4" fill="#a0a0a0"/><rect x="225.90" y="817.70" width="7.2" height="7.2" fill="#44EEEE"/>
<text x="239.80" y="825.10" font-size="11.15" text-anchor="start" fill="#cacaca" stroke="#cacaca" stroke-width="0.12" >system</text>
<text x="310.10" y="825.10" font-size="11.15" text-anchor="start" fill="#cacaca" stroke="#cacaca" stroke-width="0.12" >Cur:</text>
<text x="377.40" y="825.10" font-size="11.15" text-anchor="end" fill="#cacaca" stroke="#cacaca" stroke-width="0.12" >3.3%</text>
<text x="406.40" y="825.10" font-size="11.15" text-anchor="start" fill="#cacaca" stroke="#cacaca" stroke-width="0.12" >Avg:</text>
<text x="473.90" y="825.10" font-size="11.15" text-anchor="end" fill="#cacaca" stroke="#cacaca" stroke-width="0.12" >2.8%</text>
<text x="502.60" y="825.10" font-size="11.15" text-anchor="start" fill="#cacaca" stroke="#cacaca" stroke-width="0.12" >Min:</text>
<text x="570.20" y="825.10" font-size="11.15" text-anchor="end" fill="#cacaca" stroke="#cacaca" stroke-width="0.12" >1.8%</text>
<text x="598.70" y="825.10" font-size="11.15" text-anchor="start" fill="#cacaca" stroke="#cacaca" stroke-width="0.12" >Max:</text>
<text x="666.70" y="825.10" font-size="11.15" text-anchor="end" fill="#cacaca" stroke="#cacaca" stroke-width="0.12" >6.4%</text>
<rect x="224.80" y="830.00" width="9.4" height="9.4" fill="#a0a0a0"/><rect x="225.90" y="831.10" width="7.2" height="7.2" fill="#EE44EE"/>
<text x="239.80" y="838.50" font-size="11.15" text-anchor="start" fill="#cacaca" stroke="#cacaca" stroke-width="0.12" >I/O wait</text>
<text x="310.10" y="838.50" font-size="11.15" text-anchor="start" fill="#cacaca" stroke="#cacaca" stroke-width="0.12" >Cur:</text>
<text x="377.40" y="838.50" font-size="11.15" text-anchor="end" fill="#cacaca" stroke="#cacaca" stroke-width="0.12" >0.1%</text>
<text x="406.40" y="838.50" font-size="11.15" text-anchor="start" fill="#cacaca" stroke="#cacaca" stroke-width="0.12" >Avg:</text>
<text x="473.90" y="838.50" font-size="11.15" text-anchor="end" fill="#cacaca" stroke="#cacaca" stroke-width="0.12" >0.1%</text>
<text x="502.60" y="838.50" font-size="11.15" text-anchor="start" fill="#cacaca" stroke="#cacaca" stroke-width="0.12" >Min:</text>
<text x="570.20" y="838.50" font-size="11.15" text-anchor="end" fill="#cacaca" stroke="#cacaca" stroke-width="0.12" >0.0%</text>
<text x="598.70" y="838.50" font-size="11.15" text-anchor="start" fill="#cacaca" stroke="#cacaca" stroke-width="0.12" >Max:</text>
<text x="666.70" y="838.50" font-size="11.15" text-anchor="end" fill="#cacaca" stroke="#cacaca" stroke-width="0.12" >1.1%</text>
</g></svg>
<svg width="1388" height="843" viewBox="0 0 1388 843" font-family="'Liberation Mono',monospace" style="position:absolute;left:0;top:0;white-space:pre">
<defs><clipPath id="cp1"><rect x="0" y="127" width="1367" height="711"/></clipPath></defs>
<defs><clipPath id="ap1"><path d="M765.00 767.40 L765.00 753.05 L766.00 747.78 L767.00 738.09 L768.00 735.15 L769.00 728.88 L770.00 730.25 L771.00 736.62 L772.00 733.16 L773.00 735.38 L774.00 730.21 L775.00 733.90 L776.00 747.39 L777.00 744.81 L778.00 756.58 L779.00 758.39 L780.00 754.21 L781.00 751.90 L782.00 747.51 L783.00 742.44 L784.00 745.56 L785.00 751.49 L786.00 753.29 L787.00 753.62 L788.00 754.13 L789.00 754.23 L790.00 753.84 L791.00 754.21 L792.00 754.94 L793.00 754.73 L794.00 754.91 L795.00 754.59 L796.00 753.40 L797.00 754.54 L798.00 755.26 L799.00 754.43 L800.00 753.75 L801.00 754.50 L802.00 753.98 L803.00 755.22 L804.00 755.27 L805.00 754.06 L806.00 755.30 L807.00 754.79 L808.00 754.62 L809.00 755.01 L810.00 755.33 L811.00 755.39 L812.00 753.47 L813.00 754.00 L814.00 753.47 L815.00 754.40 L816.00 753.47 L817.00 753.65 L818.00 754.15 L819.00 754.34 L820.00 755.53 L821.00 757.75 L822.00 759.10 L823.00 760.05 L824.00 762.32 L825.00 758.08 L826.00 756.73 L827.00 756.54 L828.00 756.10 L829.00 756.46 L830.00 757.49 L831.00 757.26 L832.00 757.76 L833.00 757.71 L834.00 755.84 L835.00 756.56 L836.00 755.80 L837.00 756.18 L838.00 757.13 L839.00 755.81 L840.00 755.90 L841.00 756.84 L842.00 757.60 L843.00 757.12 L844.00 757.43 L845.00 757.03 L846.00 757.60 L847.00 756.32 L848.00 755.78 L849.00 757.34 L850.00 756.19 L851.00 756.58 L852.00 756.79 L853.00 755.93 L854.00 757.00 L855.00 756.10 L856.00 757.70 L857.00 755.81 L858.00 757.40 L859.00 757.76 L860.00 755.98 L861.00 756.30 L862.00 756.40 L863.00 756.21 L864.00 757.00 L865.00 757.53 L866.00 757.12 L867.00 755.83 L868.00 755.78 L869.00 757.30 L870.00 756.87 L871.00 756.85 L872.00 755.93 L873.00 757.76 L874.00 756.09 L875.00 757.25 L876.00 756.65 L877.00 757.51 L878.00 757.60 L879.00 755.98 L880.00 756.75 L881.00 755.80 L882.00 756.01 L883.00 756.24 L884.00 757.62 L885.00 756.57 L886.00 755.75 L887.00 756.75 L888.00 757.63 L889.00 757.39 L890.00 755.76 L891.00 755.79 L892.00 757.27 L893.00 757.12 L894.00 756.32 L895.00 756.74 L896.00 757.39 L897.00 755.77 L898.00 756.51 L899.00 757.03 L900.00 757.72 L901.00 756.73 L902.00 756.24 L903.00 757.41 L904.00 757.59 L905.00 756.30 L906.00 755.90 L907.00 757.00 L908.00 756.81 L909.00 756.48 L910.00 756.71 L911.00 757.51 L912.00 757.21 L913.00 757.35 L914.00 757.37 L915.00 757.59 L916.00 756.97 L917.00 757.32 L918.00 756.05 L919.00 757.11 L920.00 755.81 L921.00 756.12 L922.00 757.22 L923.00 757.45 L924.00 756.61 L925.00 756.81 L926.00 756.68 L927.00 757.52 L928.00 756.69 L929.00 756.23 L930.00 756.86 L931.00 757.25 L932.00 755.90 L933.00 757.17 L934.00 755.75 L935.00 756.37 L936.00 757.76 L937.00 756.86 L938.00 757.46 L939.00 756.17 L940.00 756.91 L941.00 757.59 L942.00 755.84 L943.00 756.15 L944.00 756.53 L945.00 756.62 L946.00 757.62 L947.00 755.77 L948.00 757.16 L949.00 756.70 L950.00 756.77 L951.00 756.81 L952.00 757.73 L953.00 755.96 L954.00 756.77 L955.00 756.97 L956.00 756.02 L957.00 756.02 L958.00 756.31 L959.00 755.93 L960.00 757.06 L961.00 757.55 L962.00 757.06 L963.00 756.55 L964.00 756.17 L965.00 756.28 L966.00 756.49 L967.00 756.55 L968.00 756.42 L969.00 756.60 L970.00 757.74 L971.00 756.66 L972.00 757.21 L973.00 757.62 L974.00 756.53 L975.00 756.06 L976.00 757.19 L977.00 756.41 L978.00 756.50 L979.00 756.39 L980.00 756.00 L981.00 756.36 L982.00 757.61 L983.00 756.52 L984.00 757.06 L985.00 756.92 L986.00 756.40 L987.00 757.41 L988.00 756.50 L989.00 755.86 L990.00 757.61 L991.00 756.04 L992.00 756.33 L993.00 756.95 L994.00 756.21 L995.00 757.61 L996.00 757.44 L997.00 755.74 L998.00 756.51 L999.00 757.43 L1000.00 757.50 L1001.00 756.86 L1002.00 756.66 L1003.00 755.76 L1004.00 757.39 L1005.00 756.48 L1006.00 756.87 L1007.00 756.64 L1008.00 755.86 L1009.00 757.53 L1010.00 756.07 L1011.00 756.28 L1012.00 757.22 L1013.00 757.52 L1014.00 756.25 L1015.00 756.04 L1016.00 757.07 L1017.00 757.49 L1018.00 756.64 L1019.00 756.41 L1020.00 757.04 L1021.00 756.93 L1022.00 757.56 L1023.00 757.48 L1024.00 757.32 L1025.00 756.23 L1026.00 757.52 L1027.00 757.37 L1028.00 756.83 L1029.00 757.34 L1030.00 757.28 L1031.00 756.27 L1032.00 757.29 L1033.00 756.63 L1034.00 757.60 L1035.00 756.72 L1036.00 756.35 L1037.00 756.86 L1038.00 757.38 L1039.00 757.71 L1040.00 757.21 L1041.00 756.94 L1042.00 757.56 L1043.00 756.90 L1044.00 756.74 L1045.00 757.64 L1046.00 756.42 L1047.00 755.83 L1048.00 756.34 L1049.00 756.86 L1050.00 756.08 L1051.00 755.85 L1052.00 755.84 L1053.00 755.84 L1054.00 756.21 L1055.00 755.85 L1056.00 756.22 L1057.00 757.11 L1058.00 757.49 L1059.00 756.78 L1060.00 756.34 L1061.00 757.22 L1062.00 757.04 L1063.00 757.60 L1064.00 757.68 L1065.00 757.24 L1066.00 756.05 L1067.00 757.64 L1068.00 757.46 L1069.00 756.96 L1070.00 754.43 L1071.00 752.13 L1072.00 754.33 L1073.00 751.99 L1074.00 748.72 L1075.00 747.61 L1076.00 745.73 L1077.00 743.41 L1078.00 737.79 L1079.00 740.04 L1080.00 737.20 L1081.00 736.99 L1082.00 744.04 L1083.00 748.36 L1084.00 745.83 L1085.00 746.40 L1086.00 741.88 L1087.00 742.66 L1088.00 748.15 L1089.00 744.44 L1090.00 743.21 L1091.00 751.59 L1092.00 752.30 L1093.00 750.51 L1094.00 743.63 L1095.00 750.36 L1096.00 742.98 L1097.00 746.01 L1098.00 742.22 L1099.00 750.29 L1100.00 745.70 L1101.00 746.08 L1102.00 746.49 L1103.00 743.79 L1104.00 739.25 L1105.00 738.76 L1106.00 739.43 L1107.00 740.06 L1108.00 740.48 L1109.00 744.53 L1110.00 745.08 L1111.00 748.99 L1112.00 741.02 L1113.00 743.15 L1114.00 744.01 L1115.00 742.68 L1116.00 744.96 L1117.00 741.68 L1118.00 746.30 L1119.00 742.20 L1120.00 741.93 L1121.00 744.34 L1122.00 742.40 L1123.00 749.28 L1124.00 749.95 L1125.00 743.81 L1126.00 748.28 L1127.00 745.61 L1127.50 745.04 L1127.50 767.40Z"/></clipPath></defs>
<g clip-path="url(#cp1)">
<rect x="689.3" y="569.0" width="471.70000000000005" height="331.0" fill="#303030"/>
<rect x="690.1999999999999" y="569.9" width="469.90000000000003" height="329.2" fill="#4a4a4a"/>
<rect x="692.0" y="571.7" width="466.30000000000007" height="325.6" fill="#101010"/>
<rect x="765.0" y="598.5" width="362.5" height="168.89999999999998" fill="#000"/>
<path d="M760.70 758.50H1130.70" stroke="#3a2c18" stroke-width="1" stroke-dasharray="1.1 1.15" opacity="1"/>
<path d="M760.70 741.50H1130.70" stroke="#3a2c18" stroke-width="1" stroke-dasharray="1.1 1.15" opacity="1"/>
<path d="M760.70 725.50H1130.70" stroke="#3a2c18" stroke-width="1" stroke-dasharray="1.1 1.15" opacity="1"/>
<path d="M760.70 708.50H1130.70" stroke="#3a2c18" stroke-width="1" stroke-dasharray="1.1 1.15" opacity="1"/>
<path d="M760.70 691.50H1130.70" stroke="#3a2c18" stroke-width="1" stroke-dasharray="1.1 1.15" opacity="1"/>
<path d="M760.70 674.50H1130.70" stroke="#3a2c18" stroke-width="1" stroke-dasharray="1.1 1.15" opacity="1"/>
<path d="M760.70 657.50H1130.70" stroke="#3a2c18" stroke-width="1" stroke-dasharray="1.1 1.15" opacity="1"/>
<path d="M760.70 640.50H1130.70" stroke="#3a2c18" stroke-width="1" stroke-dasharray="1.1 1.15" opacity="1"/>
<path d="M760.70 623.50H1130.70" stroke="#3a2c18" stroke-width="1" stroke-dasharray="1.1 1.15" opacity="1"/>
<path d="M760.70 606.50H1130.70" stroke="#3a2c18" stroke-width="1" stroke-dasharray="1.1 1.15" opacity="1"/>
<path d="M767.50 598.50V770.00" stroke="#3e3e1c" stroke-width="1" stroke-dasharray="1.1 1.15" opacity="1"/>
<path d="M783.50 598.50V770.00" stroke="#3e3e1c" stroke-width="1" stroke-dasharray="1.1 1.15" opacity="1"/>
<path d="M798.50 598.50V770.00" stroke="#3e3e1c" stroke-width="1" stroke-dasharray="1.1 1.15" opacity="1"/>
<path d="M828.50 598.50V770.00" stroke="#3e3e1c" stroke-width="1" stroke-dasharray="1.1 1.15" opacity="1"/>
<path d="M843.50 598.50V770.00" stroke="#3e3e1c" stroke-width="1" stroke-dasharray="1.1 1.15" opacity="1"/>
<path d="M859.50 598.50V770.00" stroke="#3e3e1c" stroke-width="1" stroke-dasharray="1.1 1.15" opacity="1"/>
<path d="M874.50 598.50V770.00" stroke="#3e3e1c" stroke-width="1" stroke-dasharray="1.1 1.15" opacity="1"/>
<path d="M889.50 598.50V770.00" stroke="#3e3e1c" stroke-width="1" stroke-dasharray="1.1 1.15" opacity="1"/>
<path d="M920.50 598.50V770.00" stroke="#3e3e1c" stroke-width="1" stroke-dasharray="1.1 1.15" opacity="1"/>
<path d="M935.50 598.50V770.00" stroke="#3e3e1c" stroke-width="1" stroke-dasharray="1.1 1.15" opacity="1"/>
<path d="M950.50 598.50V770.00" stroke="#3e3e1c" stroke-width="1" stroke-dasharray="1.1 1.15" opacity="1"/>
<path d="M965.50 598.50V770.00" stroke="#3e3e1c" stroke-width="1" stroke-dasharray="1.1 1.15" opacity="1"/>
<path d="M980.50 598.50V770.00" stroke="#3e3e1c" stroke-width="1" stroke-dasharray="1.1 1.15" opacity="1"/>
<path d="M1011.50 598.50V770.00" stroke="#3e3e1c" stroke-width="1" stroke-dasharray="1.1 1.15" opacity="1"/>
<path d="M1026.50 598.50V770.00" stroke="#3e3e1c" stroke-width="1" stroke-dasharray="1.1 1.15" opacity="1"/>
<path d="M1041.50 598.50V770.00" stroke="#3e3e1c" stroke-width="1" stroke-dasharray="1.1 1.15" opacity="1"/>
<path d="M1057.50 598.50V770.00" stroke="#3e3e1c" stroke-width="1" stroke-dasharray="1.1 1.15" opacity="1"/>
<path d="M1072.50 598.50V770.00" stroke="#3e3e1c" stroke-width="1" stroke-dasharray="1.1 1.15" opacity="1"/>
<path d="M1102.50 598.50V770.00" stroke="#3e3e1c" stroke-width="1" stroke-dasharray="1.1 1.15" opacity="1"/>
<path d="M1117.50 598.50V770.00" stroke="#3e3e1c" stroke-width="1" stroke-dasharray="1.1 1.15" opacity="1"/>
<path d="M760.70 767.50H1130.70" stroke="#a4b0a4" stroke-width="1" stroke-dasharray="1.1 1.15" opacity="1"/>
<path d="M760.70 751.50H1130.70" stroke="#a4b0a4" stroke-width="1" stroke-dasharray="1.1 1.15" opacity="1"/>
<path d="M760.70 734.50H1130.70" stroke="#a4b0a4" stroke-width="1" stroke-dasharray="1.1 1.15" opacity="1"/>
<path d="M760.70 717.50H1130.70" stroke="#a4b0a4" stroke-width="1" stroke-dasharray="1.1 1.15" opacity="1"/>
<path d="M760.70 700.50H1130.70" stroke="#a4b0a4" stroke-width="1" stroke-dasharray="1.1 1.15" opacity="1"/>
<path d="M760.70 683.50H1130.70" stroke="#a4b0a4" stroke-width="1" stroke-dasharray="1.1 1.15" opacity="1"/>
<path d="M760.70 666.50H1130.70" stroke="#a4b0a4" stroke-width="1" stroke-dasharray="1.1 1.15" opacity="1"/>
<path d="M760.70 649.50H1130.70" stroke="#a4b0a4" stroke-width="1" stroke-dasharray="1.1 1.15" opacity="1"/>
<path d="M760.70 632.50H1130.70" stroke="#a4b0a4" stroke-width="1" stroke-dasharray="1.1 1.15" opacity="1"/>
<path d="M760.70 615.50H1130.70" stroke="#a4b0a4" stroke-width="1" stroke-dasharray="1.1 1.15" opacity="1"/>
<path d="M760.70 599.50H1130.70" stroke="#a4b0a4" stroke-width="1" stroke-dasharray="1.1 1.15" opacity="1"/>
<path d="M813.50 598.50V770.00" stroke="#8a9e8a" stroke-width="1" stroke-dasharray="1.1 1.15" opacity="1"/>
<path d="M904.50 598.50V770.00" stroke="#8a9e8a" stroke-width="1" stroke-dasharray="1.1 1.15" opacity="1"/>
<path d="M996.50 598.50V770.00" stroke="#8a9e8a" stroke-width="1" stroke-dasharray="1.1 1.15" opacity="1"/>
<path d="M1087.50 598.50V770.00" stroke="#8a9e8a" stroke-width="1" stroke-dasharray="1.1 1.15" opacity="1"/>
<path d="M765.00 767.40 L765.00 753.05 L766.00 747.78 L767.00 738.09 L768.00 735.15 L769.00 728.88 L770.00 730.25 L771.00 736.62 L772.00 733.16 L773.00 735.38 L774.00 730.21 L775.00 733.90 L776.00 747.39 L777.00 744.81 L778.00 756.58 L779.00 758.39 L780.00 754.21 L781.00 751.90 L782.00 747.51 L783.00 742.44 L784.00 745.56 L785.00 751.49 L786.00 753.29 L787.00 753.62 L788.00 754.13 L789.00 754.23 L790.00 753.84 L791.00 754.21 L792.00 754.94 L793.00 754.73 L794.00 754.91 L795.00 754.59 L796.00 753.40 L797.00 754.54 L798.00 755.26 L799.00 754.43 L800.00 753.75 L801.00 754.50 L802.00 753.98 L803.00 755.22 L804.00 755.27 L805.00 754.06 L806.00 755.30 L807.00 754.79 L808.00 754.62 L809.00 755.01 L810.00 755.33 L811.00 755.39 L812.00 753.47 L813.00 754.00 L814.00 753.47 L815.00 754.40 L816.00 753.47 L817.00 753.65 L818.00 754.15 L819.00 754.34 L820.00 755.53 L821.00 757.75 L822.00 759.10 L823.00 760.05 L824.00 762.32 L825.00 758.08 L826.00 756.73 L827.00 756.54 L828.00 756.10 L829.00 756.46 L830.00 757.49 L831.00 757.26 L832.00 757.76 L833.00 757.71 L834.00 755.84 L835.00 756.56 L836.00 755.80 L837.00 756.18 L838.00 757.13 L839.00 755.81 L840.00 755.90 L841.00 756.84 L842.00 757.60 L843.00 757.12 L844.00 757.43 L845.00 757.03 L846.00 757.60 L847.00 756.32 L848.00 755.78 L849.00 757.34 L850.00 756.19 L851.00 756.58 L852.00 756.79 L853.00 755.93 L854.00 757.00 L855.00 756.10 L856.00 757.70 L857.00 755.81 L858.00 757.40 L859.00 757.76 L860.00 755.98 L861.00 756.30 L862.00 756.40 L863.00 756.21 L864.00 757.00 L865.00 757.53 L866.00 757.12 L867.00 755.83 L868.00 755.78 L869.00 757.30 L870.00 756.87 L871.00 756.85 L872.00 755.93 L873.00 757.76 L874.00 756.09 L875.00 757.25 L876.00 756.65 L877.00 757.51 L878.00 757.60 L879.00 755.98 L880.00 756.75 L881.00 755.80 L882.00 756.01 L883.00 756.24 L884.00 757.62 L885.00 756.57 L886.00 755.75 L887.00 756.75 L888.00 757.63 L889.00 757.39 L890.00 755.76 L891.00 755.79 L892.00 757.27 L893.00 757.12 L894.00 756.32 L895.00 756.74 L896.00 757.39 L897.00 755.77 L898.00 756.51 L899.00 757.03 L900.00 757.72 L901.00 756.73 L902.00 756.24 L903.00 757.41 L904.00 757.59 L905.00 756.30 L906.00 755.90 L907.00 757.00 L908.00 756.81 L909.00 756.48 L910.00 756.71 L911.00 757.51 L912.00 757.21 L913.00 757.35 L914.00 757.37 L915.00 757.59 L916.00 756.97 L917.00 757.32 L918.00 756.05 L919.00 757.11 L920.00 755.81 L921.00 756.12 L922.00 757.22 L923.00 757.45 L924.00 756.61 L925.00 756.81 L926.00 756.68 L927.00 757.52 L928.00 756.69 L929.00 756.23 L930.00 756.86 L931.00 757.25 L932.00 755.90 L933.00 757.17 L934.00 755.75 L935.00 756.37 L936.00 757.76 L937.00 756.86 L938.00 757.46 L939.00 756.17 L940.00 756.91 L941.00 757.59 L942.00 755.84 L943.00 756.15 L944.00 756.53 L945.00 756.62 L946.00 757.62 L947.00 755.77 L948.00 757.16 L949.00 756.70 L950.00 756.77 L951.00 756.81 L952.00 757.73 L953.00 755.96 L954.00 756.77 L955.00 756.97 L956.00 756.02 L957.00 756.02 L958.00 756.31 L959.00 755.93 L960.00 757.06 L961.00 757.55 L962.00 757.06 L963.00 756.55 L964.00 756.17 L965.00 756.28 L966.00 756.49 L967.00 756.55 L968.00 756.42 L969.00 756.60 L970.00 757.74 L971.00 756.66 L972.00 757.21 L973.00 757.62 L974.00 756.53 L975.00 756.06 L976.00 757.19 L977.00 756.41 L978.00 756.50 L979.00 756.39 L980.00 756.00 L981.00 756.36 L982.00 757.61 L983.00 756.52 L984.00 757.06 L985.00 756.92 L986.00 756.40 L987.00 757.41 L988.00 756.50 L989.00 755.86 L990.00 757.61 L991.00 756.04 L992.00 756.33 L993.00 756.95 L994.00 756.21 L995.00 757.61 L996.00 757.44 L997.00 755.74 L998.00 756.51 L999.00 757.43 L1000.00 757.50 L1001.00 756.86 L1002.00 756.66 L1003.00 755.76 L1004.00 757.39 L1005.00 756.48 L1006.00 756.87 L1007.00 756.64 L1008.00 755.86 L1009.00 757.53 L1010.00 756.07 L1011.00 756.28 L1012.00 757.22 L1013.00 757.52 L1014.00 756.25 L1015.00 756.04 L1016.00 757.07 L1017.00 757.49 L1018.00 756.64 L1019.00 756.41 L1020.00 757.04 L1021.00 756.93 L1022.00 757.56 L1023.00 757.48 L1024.00 757.32 L1025.00 756.23 L1026.00 757.52 L1027.00 757.37 L1028.00 756.83 L1029.00 757.34 L1030.00 757.28 L1031.00 756.27 L1032.00 757.29 L1033.00 756.63 L1034.00 757.60 L1035.00 756.72 L1036.00 756.35 L1037.00 756.86 L1038.00 757.38 L1039.00 757.71 L1040.00 757.21 L1041.00 756.94 L1042.00 757.56 L1043.00 756.90 L1044.00 756.74 L1045.00 757.64 L1046.00 756.42 L1047.00 755.83 L1048.00 756.34 L1049.00 756.86 L1050.00 756.08 L1051.00 755.85 L1052.00 755.84 L1053.00 755.84 L1054.00 756.21 L1055.00 755.85 L1056.00 756.22 L1057.00 757.11 L1058.00 757.49 L1059.00 756.78 L1060.00 756.34 L1061.00 757.22 L1062.00 757.04 L1063.00 757.60 L1064.00 757.68 L1065.00 757.24 L1066.00 756.05 L1067.00 757.64 L1068.00 757.46 L1069.00 756.96 L1070.00 754.43 L1071.00 752.13 L1072.00 754.33 L1073.00 751.99 L1074.00 748.72 L1075.00 747.61 L1076.00 745.73 L1077.00 743.41 L1078.00 737.79 L1079.00 740.04 L1080.00 737.20 L1081.00 736.99 L1082.00 744.04 L1083.00 748.36 L1084.00 745.83 L1085.00 746.40 L1086.00 741.88 L1087.00 742.66 L1088.00 748.15 L1089.00 744.44 L1090.00 743.21 L1091.00 751.59 L1092.00 752.30 L1093.00 750.51 L1094.00 743.63 L1095.00 750.36 L1096.00 742.98 L1097.00 746.01 L1098.00 742.22 L1099.00 750.29 L1100.00 745.70 L1101.00 746.08 L1102.00 746.49 L1103.00 743.79 L1104.00 739.25 L1105.00 738.76 L1106.00 739.43 L1107.00 740.06 L1108.00 740.48 L1109.00 744.53 L1110.00 745.08 L1111.00 748.99 L1112.00 741.02 L1113.00 743.15 L1114.00 744.01 L1115.00 742.68 L1116.00 744.96 L1117.00 741.68 L1118.00 746.30 L1119.00 742.20 L1120.00 741.93 L1121.00 744.34 L1122.00 742.40 L1123.00 749.28 L1124.00 749.95 L1125.00 743.81 L1126.00 748.28 L1127.00 745.61 L1127.50 745.04 L1127.50 767.40Z" fill="#4444EE"/>
<path d="M765.00 767.40 L765.00 758.18 L766.00 758.60 L767.00 758.44 L768.00 758.48 L769.00 758.14 L770.00 758.19 L771.00 758.05 L772.00 758.60 L773.00 758.38 L774.00 758.66 L775.00 758.54 L776.00 758.35 L777.00 758.68 L778.00 758.57 L779.00 758.27 L780.00 758.35 L781.00 758.58 L782.00 758.33 L783.00 758.19 L784.00 758.74 L785.00 758.21 L786.00 758.29 L787.00 758.54 L788.00 758.67 L789.00 758.14 L790.00 758.57 L791.00 758.74 L792.00 758.75 L793.00 758.25 L794.00 758.43 L795.00 758.30 L796.00 758.37 L797.00 758.51 L798.00 758.22 L799.00 758.64 L800.00 758.53 L801.00 758.35 L802.00 758.51 L803.00 758.35 L804.00 758.56 L805.00 758.48 L806.00 758.94 L807.00 758.83 L808.00 758.80 L809.00 758.95 L810.00 758.86 L811.00 758.96 L812.00 758.85 L813.00 758.62 L814.00 758.81 L815.00 758.82 L816.00 758.94 L817.00 758.91 L818.00 758.47 L819.00 758.67 L820.00 758.94 L821.00 760.00 L822.00 760.38 L823.00 761.53 L824.00 761.94 L825.00 760.22 L826.00 759.53 L827.00 759.59 L828.00 759.50 L829.00 759.39 L830.00 759.44 L831.00 759.81 L832.00 759.94 L833.00 759.75 L834.00 759.78 L835.00 759.82 L836.00 759.33 L837.00 759.37 L838.00 759.75 L839.00 759.52 L840.00 759.70 L841.00 759.35 L842.00 759.65 L843.00 759.78 L844.00 759.80 L845.00 759.58 L846.00 759.79 L847.00 759.57 L848.00 759.36 L849.00 759.69 L850.00 759.82 L851.00 759.29 L852.00 759.62 L853.00 759.90 L854.00 759.93 L855.00 759.89 L856.00 759.54 L857.00 759.43 L858.00 759.68 L859.00 759.92 L860.00 759.71 L861.00 759.29 L862.00 759.61 L863.00 759.31 L864.00 759.38 L865.00 759.96 L866.00 759.48 L867.00 759.50 L868.00 759.60 L869.00 759.78 L870.00 759.53 L871.00 759.89 L872.00 759.67 L873.00 759.66 L874.00 759.32 L875.00 759.37 L876.00 759.79 L877.00 759.63 L878.00 759.84 L879.00 759.35 L880.00 759.38 L881.00 759.76 L882.00 759.53 L883.00 759.55 L884.00 759.86 L885.00 759.45 L886.00 759.60 L887.00 759.44 L888.00 759.61 L889.00 759.96 L890.00 759.74 L891.00 759.95 L892.00 759.34 L893.00 759.37 L894.00 759.40 L895.00 759.76 L896.00 759.92 L897.00 759.37 L898.00 759.32 L899.00 759.91 L900.00 759.64 L901.00 759.92 L902.00 759.45 L903.00 759.45 L904.00 759.88 L905.00 759.64 L906.00 759.59 L907.00 759.78 L908.00 759.37 L909.00 759.68 L910.00 759.82 L911.00 759.60 L912.00 759.47 L913.00 759.83 L914.00 759.75 L915.00 759.29 L916.00 759.52 L917.00 759.67 L918.00 759.61 L919.00 759.88 L920.00 759.81 L921.00 759.74 L922.00 759.57 L923.00 759.81 L924.00 759.82 L925.00 759.92 L926.00 759.54 L927.00 759.81 L928.00 759.35 L929.00 759.38 L930.00 759.92 L931.00 759.80 L932.00 759.51 L933.00 759.82 L934.00 759.87 L935.00 759.33 L936.00 759.58 L937.00 759.64 L938.00 759.43 L939.00 759.42 L940.00 759.84 L941.00 759.90 L942.00 759.67 L943.00 759.68 L944.00 759.65 L945.00 759.47 L946.00 759.51 L947.00 759.30 L948.00 759.90 L949.00 759.69 L950.00 759.73 L951.00 759.38 L952.00 759.80 L953.00 759.84 L954.00 759.66 L955.00 759.68 L956.00 759.78 L957.00 759.80 L958.00 759.34 L959.00 759.66 L960.00 759.38 L961.00 759.59 L962.00 759.93 L963.00 759.29 L964.00 759.40 L965.00 759.31 L966.00 759.34 L967.00 759.39 L968.00 759.85 L969.00 759.64 L970.00 759.82 L971.00 759.69 L972.00 759.92 L973.00 759.71 L974.00 759.30 L975.00 759.78 L976.00 759.43 L977.00 759.66 L978.00 759.68 L979.00 759.32 L980.00 759.29 L981.00 759.59 L982.00 759.48 L983.00 759.86 L984.00 759.76 L985.00 759.31 L986.00 759.57 L987.00 759.60 L988.00 759.46 L989.00 759.93 L990.00 759.57 L991.00 759.62 L992.00 759.39 L993.00 759.86 L994.00 759.31 L995.00 759.91 L996.00 759.84 L997.00 759.56 L998.00 759.51 L999.00 759.81 L1000.00 759.88 L1001.00 759.36 L1002.00 759.80 L1003.00 759.56 L1004.00 759.55 L1005.00 759.68 L1006.00 759.57 L1007.00 759.61 L1008.00 759.33 L1009.00 759.83 L1010.00 759.48 L1011.00 759.80 L1012.00 759.70 L1013.00 759.51 L1014.00 759.76 L1015.00 759.75 L1016.00 759.46 L1017.00 759.91 L1018.00 759.65 L1019.00 759.29 L1020.00 759.29 L1021.00 759.91 L1022.00 759.82 L1023.00 759.78 L1024.00 759.33 L1025.00 759.37 L1026.00 759.37 L1027.00 759.71 L1028.00 759.86 L1029.00 759.40 L1030.00 759.49 L1031.00 759.55 L1032.00 759.30 L1033.00 759.52 L1034.00 759.96 L1035.00 759.41 L1036.00 759.76 L1037.00 759.52 L1038.00 759.33 L1039.00 759.87 L1040.00 759.89 L1041.00 759.89 L1042.00 759.59 L1043.00 759.78 L1044.00 759.56 L1045.00 759.48 L1046.00 759.83 L1047.00 759.54 L1048.00 759.79 L1049.00 759.63 L1050.00 759.35 L1051.00 759.39 L1052.00 759.90 L1053.00 759.68 L1054.00 759.78 L1055.00 759.96 L1056.00 759.44 L1057.00 759.53 L1058.00 759.79 L1059.00 759.46 L1060.00 759.59 L1061.00 759.67 L1062.00 759.96 L1063.00 759.91 L1064.00 759.37 L1065.00 759.35 L1066.00 759.60 L1067.00 759.40 L1068.00 759.57 L1069.00 759.86 L1070.00 759.86 L1071.00 759.67 L1072.00 759.20 L1073.00 759.20 L1074.00 759.09 L1075.00 759.00 L1076.00 759.40 L1077.00 759.30 L1078.00 759.33 L1079.00 758.81 L1080.00 758.69 L1081.00 759.01 L1082.00 758.87 L1083.00 759.18 L1084.00 758.66 L1085.00 758.70 L1086.00 758.63 L1087.00 758.74 L1088.00 758.69 L1089.00 759.27 L1090.00 758.79 L1091.00 759.06 L1092.00 758.66 L1093.00 758.75 L1094.00 758.70 L1095.00 758.74 L1096.00 759.11 L1097.00 758.76 L1098.00 759.21 L1099.00 758.70 L1100.00 758.71 L1101.00 759.14 L1102.00 758.74 L1103.00 758.98 L1104.00 759.08 L1105.00 758.75 L1106.00 759.13 L1107.00 759.27 L1108.00 759.16 L1109.00 759.07 L1110.00 758.70 L1111.00 758.63 L1112.00 759.10 L1113.00 758.85 L1114.00 759.02 L1115.00 758.62 L1116.00 758.93 L1117.00 758.65 L1118.00 759.21 L1119.00 758.63 L1120.00 759.17 L1121.00 758.64 L1122.00 759.11 L1123.00 759.21 L1124.00 758.99 L1125.00 758.80 L1126.00 759.08 L1127.00 758.88 L1127.50 758.94 L1127.50 767.40Z" fill="#d89a5a"/>
<path d="M765.00 767.40 L765.00 760.32 L766.00 759.81 L767.00 758.23 L768.00 757.61 L769.00 757.30 L770.00 757.66 L771.00 757.31 L772.00 757.83 L773.00 757.26 L774.00 757.66 L775.00 757.81 L776.00 757.70 L777.00 757.97 L778.00 759.89 L779.00 760.72 L780.00 760.98 L781.00 760.95 L782.00 760.89 L783.00 760.86 L784.00 760.84 L785.00 760.50 L786.00 760.76 L787.00 760.47 L788.00 760.45 L789.00 760.46 L790.00 760.43 L791.00 760.69 L792.00 760.63 L793.00 760.50 L794.00 760.74 L795.00 761.02 L796.00 760.77 L797.00 760.77 L798.00 761.02 L799.00 761.08 L800.00 761.03 L801.00 760.69 L802.00 760.62 L803.00 760.73 L804.00 760.90 L805.00 761.18 L806.00 761.20 L807.00 760.77 L808.00 760.86 L809.00 760.92 L810.00 761.12 L811.00 761.16 L812.00 761.13 L813.00 761.17 L814.00 760.86 L815.00 761.07 L816.00 760.91 L817.00 761.00 L818.00 760.93 L819.00 760.81 L820.00 760.95 L821.00 761.89 L822.00 761.87 L823.00 762.47 L824.00 762.87 L825.00 762.28 L826.00 761.35 L827.00 761.44 L828.00 761.83 L829.00 761.53 L830.00 761.42 L831.00 761.48 L832.00 761.38 L833.00 761.63 L834.00 761.54 L835.00 761.94 L836.00 761.54 L837.00 761.89 L838.00 761.50 L839.00 761.38 L840.00 761.74 L841.00 761.94 L842.00 761.96 L843.00 761.64 L844.00 761.89 L845.00 761.49 L846.00 761.58 L847.00 761.65 L848.00 761.54 L849.00 761.89 L850.00 761.68 L851.00 761.96 L852.00 761.62 L853.00 761.46 L854.00 761.89 L855.00 761.53 L856.00 761.32 L857.00 761.77 L858.00 761.85 L859.00 761.82 L860.00 761.43 L861.00 761.94 L862.00 761.47 L863.00 761.82 L864.00 761.48 L865.00 761.39 L866.00 761.42 L867.00 761.86 L868.00 761.62 L869.00 761.78 L870.00 761.40 L871.00 761.79 L872.00 761.88 L873.00 761.72 L874.00 761.93 L875.00 761.84 L876.00 761.52 L877.00 761.77 L878.00 761.87 L879.00 761.36 L880.00 761.82 L881.00 761.45 L882.00 761.53 L883.00 761.62 L884.00 761.55 L885.00 761.60 L886.00 761.42 L887.00 761.52 L888.00 761.81 L889.00 761.55 L890.00 761.65 L891.00 761.37 L892.00 761.91 L893.00 761.69 L894.00 761.34 L895.00 761.95 L896.00 761.50 L897.00 761.38 L898.00 761.58 L899.00 761.95 L900.00 761.47 L901.00 761.81 L902.00 761.64 L903.00 761.44 L904.00 761.78 L905.00 761.83 L906.00 761.91 L907.00 761.76 L908.00 761.92 L909.00 761.52 L910.00 761.43 L911.00 761.95 L912.00 761.64 L913.00 761.46 L914.00 761.47 L915.00 761.81 L916.00 761.63 L917.00 761.53 L918.00 761.64 L919.00 761.32 L920.00 761.38 L921.00 761.34 L922.00 761.91 L923.00 761.98 L924.00 761.59 L925.00 761.60 L926.00 761.81 L927.00 761.83 L928.00 761.46 L929.00 761.45 L930.00 761.98 L931.00 761.91 L932.00 761.51 L933.00 761.71 L934.00 761.89 L935.00 761.35 L936.00 761.77 L937.00 761.94 L938.00 761.71 L939.00 761.72 L940.00 761.55 L941.00 761.47 L942.00 761.94 L943.00 761.67 L944.00 761.38 L945.00 761.66 L946.00 761.39 L947.00 761.38 L948.00 761.45 L949.00 761.55 L950.00 761.92 L951.00 761.33 L952.00 761.79 L953.00 761.79 L954.00 761.65 L955.00 761.63 L956.00 761.47 L957.00 761.63 L958.00 761.37 L959.00 761.46 L960.00 761.55 L961.00 761.81 L962.00 761.56 L963.00 761.65 L964.00 761.48 L965.00 761.81 L966.00 761.46 L967.00 761.51 L968.00 761.87 L969.00 761.36 L970.00 761.66 L971.00 761.69 L972.00 761.76 L973.00 761.73 L974.00 761.45 L975.00 761.37 L976.00 761.67 L977.00 761.63 L978.00 761.68 L979.00 761.91 L980.00 761.39 L981.00 761.71 L982.00 761.97 L983.00 761.83 L984.00 761.79 L985.00 761.46 L986.00 761.87 L987.00 761.89 L988.00 761.38 L989.00 761.79 L990.00 761.36 L991.00 761.99 L992.00 761.93 L993.00 761.85 L994.00 761.73 L995.00 761.63 L996.00 761.77 L997.00 761.34 L998.00 761.35 L999.00 761.61 L1000.00 761.33 L1001.00 761.41 L1002.00 761.33 L1003.00 761.60 L1004.00 761.92 L1005.00 761.61 L1006.00 761.96 L1007.00 761.72 L1008.00 761.32 L1009.00 761.73 L1010.00 761.53 L1011.00 761.35 L1012.00 761.51 L1013.00 761.73 L1014.00 761.65 L1015.00 761.91 L1016.00 761.46 L1017.00 761.55 L1018.00 761.77 L1019.00 761.70 L1020.00 761.42 L1021.00 761.96 L1022.00 761.84 L1023.00 761.57 L1024.00 761.46 L1025.00 761.63 L1026.00 761.57 L1027.00 761.99 L1028.00 761.61 L1029.00 761.62 L1030.00 761.94 L1031.00 761.63 L1032.00 761.82 L1033.00 761.76 L1034.00 761.46 L1035.00 761.43 L1036.00 761.98 L1037.00 761.93 L1038.00 761.56 L1039.00 761.37 L1040.00 761.56 L1041.00 761.76 L1042.00 761.49 L1043.00 761.38 L1044.00 761.95 L1045.00 761.97 L1046.00 761.70 L1047.00 761.51 L1048.00 761.64 L1049.00 761.67 L1050.00 761.88 L1051.00 761.88 L1052.00 761.96 L1053.00 761.68 L1054.00 761.81 L1055.00 761.60 L1056.00 761.68 L1057.00 761.78 L1058.00 761.48 L1059.00 761.76 L1060.00 761.68 L1061.00 761.68 L1062.00 761.52 L1063.00 761.33 L1064.00 761.49 L1065.00 761.99 L1066.00 761.48 L1067.00 761.64 L1068.00 761.56 L1069.00 761.97 L1070.00 761.93 L1071.00 761.76 L1072.00 761.52 L1073.00 761.36 L1074.00 760.79 L1075.00 760.58 L1076.00 760.65 L1077.00 760.61 L1078.00 760.44 L1079.00 761.00 L1080.00 761.25 L1081.00 761.45 L1082.00 761.38 L1083.00 761.49 L1084.00 761.90 L1085.00 761.43 L1086.00 761.30 L1087.00 761.35 L1088.00 761.83 L1089.00 761.54 L1090.00 761.29 L1091.00 761.75 L1092.00 761.53 L1093.00 761.48 L1094.00 761.25 L1095.00 761.33 L1096.00 761.57 L1097.00 761.48 L1098.00 761.73 L1099.00 761.31 L1100.00 761.69 L1101.00 761.40 L1102.00 761.74 L1103.00 761.34 L1104.00 761.28 L1105.00 761.74 L1106.00 761.53 L1107.00 761.69 L1108.00 761.44 L1109.00 761.63 L1110.00 761.15 L1111.00 761.21 L1112.00 761.72 L1113.00 761.59 L1114.00 761.57 L1115.00 761.65 L1116.00 761.36 L1117.00 761.24 L1118.00 761.39 L1119.00 761.37 L1120.00 761.59 L1121.00 761.39 L1122.00 761.12 L1123.00 761.63 L1124.00 761.52 L1125.00 761.31 L1126.00 761.32 L1127.00 761.52 L1127.50 761.14 L1127.50 767.40Z" fill="#b8b890"/>
<path d="M765.00 767.40 L765.00 762.86 L766.00 763.12 L767.00 762.85 L768.00 763.09 L769.00 763.02 L770.00 762.87 L771.00 763.05 L772.00 763.00 L773.00 763.12 L774.00 762.85 L775.00 762.84 L776.00 763.12 L777.00 763.13 L778.00 763.02 L779.00 763.00 L780.00 762.91 L781.00 763.06 L782.00 762.98 L783.00 763.12 L784.00 763.10 L785.00 763.15 L786.00 762.99 L787.00 762.98 L788.00 762.97 L789.00 762.86 L790.00 763.07 L791.00 763.06 L792.00 763.02 L793.00 762.86 L794.00 763.07 L795.00 763.08 L796.00 763.03 L797.00 762.94 L798.00 763.08 L799.00 763.12 L800.00 762.93 L801.00 762.98 L802.00 762.98 L803.00 763.17 L804.00 763.09 L805.00 763.14 L806.00 763.05 L807.00 762.87 L808.00 762.84 L809.00 762.89 L810.00 763.05 L811.00 762.98 L812.00 762.87 L813.00 763.06 L814.00 763.04 L815.00 762.93 L816.00 763.06 L817.00 763.01 L818.00 763.05 L819.00 762.90 L820.00 763.10 L821.00 763.58 L822.00 763.95 L823.00 764.07 L824.00 764.46 L825.00 764.19 L826.00 764.28 L827.00 764.18 L828.00 764.24 L829.00 764.13 L830.00 764.31 L831.00 764.22 L832.00 764.13 L833.00 764.27 L834.00 764.02 L835.00 764.02 L836.00 764.03 L837.00 764.04 L838.00 764.03 L839.00 764.16 L840.00 764.07 L841.00 764.21 L842.00 764.33 L843.00 764.04 L844.00 764.04 L845.00 764.26 L846.00 764.22 L847.00 764.27 L848.00 764.10 L849.00 764.29 L850.00 764.07 L851.00 764.33 L852.00 764.21 L853.00 764.08 L854.00 764.18 L855.00 764.30 L856.00 764.33 L857.00 764.11 L858.00 764.31 L859.00 764.24 L860.00 764.14 L861.00 764.23 L862.00 764.33 L863.00 764.07 L864.00 764.09 L865.00 764.13 L866.00 764.30 L867.00 764.17 L868.00 764.01 L869.00 764.16 L870.00 764.25 L871.00 764.02 L872.00 764.21 L873.00 764.15 L874.00 764.28 L875.00 764.04 L876.00 764.10 L877.00 764.15 L878.00 764.16 L879.00 764.21 L880.00 764.17 L881.00 764.15 L882.00 764.32 L883.00 764.08 L884.00 764.07 L885.00 764.32 L886.00 764.28 L887.00 764.08 L888.00 764.21 L889.00 764.27 L890.00 764.09 L891.00 763.99 L892.00 764.20 L893.00 764.12 L894.00 764.13 L895.00 764.13 L896.00 764.12 L897.00 764.01 L898.00 764.03 L899.00 764.02 L900.00 764.08 L901.00 764.06 L902.00 764.06 L903.00 764.06 L904.00 764.08 L905.00 764.06 L906.00 764.29 L907.00 764.26 L908.00 764.09 L909.00 764.17 L910.00 764.23 L911.00 764.09 L912.00 764.24 L913.00 764.05 L914.00 764.20 L915.00 764.00 L916.00 764.20 L917.00 763.98 L918.00 764.20 L919.00 764.04 L920.00 764.26 L921.00 764.13 L922.00 764.18 L923.00 764.01 L924.00 764.06 L925.00 764.11 L926.00 764.26 L927.00 764.12 L928.00 764.22 L929.00 764.27 L930.00 764.06 L931.00 764.11 L932.00 763.96 L933.00 764.01 L934.00 764.28 L935.00 763.98 L936.00 764.12 L937.00 763.96 L938.00 764.19 L939.00 764.14 L940.00 764.06 L941.00 764.21 L942.00 764.16 L943.00 764.18 L944.00 764.18 L945.00 764.11 L946.00 764.12 L947.00 763.99 L948.00 764.21 L949.00 764.21 L950.00 764.19 L951.00 764.29 L952.00 764.18 L953.00 764.17 L954.00 764.25 L955.00 764.11 L956.00 764.26 L957.00 764.02 L958.00 763.97 L959.00 764.08 L960.00 764.21 L961.00 764.23 L962.00 764.26 L963.00 764.22 L964.00 763.99 L965.00 764.02 L966.00 763.99 L967.00 764.15 L968.00 764.09 L969.00 764.04 L970.00 764.05 L971.00 764.06 L972.00 764.27 L973.00 763.94 L974.00 764.08 L975.00 764.18 L976.00 764.16 L977.00 764.02 L978.00 763.96 L979.00 764.26 L980.00 764.20 L981.00 764.25 L982.00 764.05 L983.00 764.07 L984.00 764.06 L985.00 764.20 L986.00 764.13 L987.00 763.97 L988.00 764.16 L989.00 764.20 L990.00 764.19 L991.00 763.99 L992.00 764.18 L993.00 764.03 L994.00 764.06 L995.00 763.99 L996.00 764.24 L997.00 764.16 L998.00 763.94 L999.00 764.09 L1000.00 764.23 L1001.00 764.22 L1002.00 764.20 L1003.00 764.04 L1004.00 764.15 L1005.00 764.22 L1006.00 764.17 L1007.00 763.99 L1008.00 764.01 L1009.00 764.09 L1010.00 764.16 L1011.00 764.22 L1012.00 764.22 L1013.00 763.95 L1014.00 764.05 L1015.00 764.25 L1016.00 763.99 L1017.00 763.93 L1018.00 764.12 L1019.00 763.95 L1020.00 764.14 L1021.00 764.13 L1022.00 764.11 L1023.00 764.07 L1024.00 764.12 L1025.00 764.17 L1026.00 764.22 L1027.00 764.14 L1028.00 764.05 L1029.00 763.95 L1030.00 764.01 L1031.00 764.07 L1032.00 764.10 L1033.00 764.19 L1034.00 764.01 L1035.00 763.97 L1036.00 764.12 L1037.00 763.99 L1038.00 763.95 L1039.00 764.12 L1040.00 764.24 L1041.00 763.96 L1042.00 764.06 L1043.00 764.21 L1044.00 764.03 L1045.00 764.02 L1046.00 764.02 L1047.00 764.01 L1048.00 764.05 L1049.00 764.22 L1050.00 763.93 L1051.00 764.01 L1052.00 763.94 L1053.00 764.06 L1054.00 764.00 L1055.00 764.07 L1056.00 763.98 L1057.00 764.20 L1058.00 764.12 L1059.00 763.97 L1060.00 764.11 L1061.00 764.05 L1062.00 764.11 L1063.00 763.96 L1064.00 764.18 L1065.00 764.12 L1066.00 764.20 L1067.00 764.20 L1068.00 764.09 L1069.00 763.90 L1070.00 764.16 L1071.00 764.01 L1072.00 763.97 L1073.00 763.98 L1074.00 764.21 L1075.00 764.21 L1076.00 763.97 L1077.00 764.14 L1078.00 763.95 L1079.00 764.00 L1080.00 763.89 L1081.00 764.08 L1082.00 763.94 L1083.00 764.16 L1084.00 764.12 L1085.00 764.08 L1086.00 764.09 L1087.00 764.03 L1088.00 764.12 L1089.00 764.17 L1090.00 764.05 L1091.00 764.04 L1092.00 763.93 L1093.00 764.01 L1094.00 764.05 L1095.00 764.13 L1096.00 763.96 L1097.00 763.91 L1098.00 764.18 L1099.00 764.11 L1100.00 763.95 L1101.00 764.12 L1102.00 764.18 L1103.00 764.12 L1104.00 763.87 L1105.00 764.15 L1106.00 764.17 L1107.00 763.97 L1108.00 764.15 L1109.00 763.92 L1110.00 764.11 L1111.00 764.04 L1112.00 764.03 L1113.00 763.89 L1114.00 763.88 L1115.00 764.12 L1116.00 764.10 L1117.00 764.16 L1118.00 764.14 L1119.00 763.90 L1120.00 764.11 L1121.00 764.01 L1122.00 764.00 L1123.00 764.09 L1124.00 764.17 L1125.00 764.19 L1126.00 764.10 L1127.00 763.89 L1127.50 764.11 L1127.50 767.40Z" fill="#E29136"/>
<path d="M765.20 762.21 L765.90 759.20 L766.60 756.40 L767.30 756.98 L768.00 756.41 L768.70 756.46 L769.40 755.60 L770.10 755.77 L770.80 756.24 L771.50 755.91 L772.20 756.69 L772.90 757.46 L773.60 757.16 L774.30 756.49 L775.00 756.16 L775.70 756.72 L776.40 757.56 L777.10 760.00 L777.70 761.02 L777.70 764.02 L777.10 764.02 L776.40 764.02 L775.70 764.02 L775.00 764.02 L774.30 764.02 L773.60 764.02 L772.90 764.02 L772.20 764.02 L771.50 764.02 L770.80 764.02 L770.10 764.02 L769.40 764.02 L768.70 764.02 L768.00 764.02 L767.30 764.02 L766.60 764.02 L765.90 764.02 L765.20 764.02Z" fill="#44EEEE"/>
<g clip-path="url(#ap1)"><g opacity="0.28"><path d="M760.70 758.50H1130.70" stroke="#3a2c18" stroke-width="1" stroke-dasharray="1.1 1.15" opacity="1"/><path d="M760.70 741.50H1130.70" stroke="#3a2c18" stroke-width="1" stroke-dasharray="1.1 1.15" opacity="1"/><path d="M760.70 725.50H1130.70" stroke="#3a2c18" stroke-width="1" stroke-dasharray="1.1 1.15" opacity="1"/><path d="M760.70 708.50H1130.70" stroke="#3a2c18" stroke-width="1" stroke-dasharray="1.1 1.15" opacity="1"/><path d="M760.70 691.50H1130.70" stroke="#3a2c18" stroke-width="1" stroke-dasharray="1.1 1.15" opacity="1"/><path d="M760.70 674.50H1130.70" stroke="#3a2c18" stroke-width="1" stroke-dasharray="1.1 1.15" opacity="1"/><path d="M760.70 657.50H1130.70" stroke="#3a2c18" stroke-width="1" stroke-dasharray="1.1 1.15" opacity="1"/><path d="M760.70 640.50H1130.70" stroke="#3a2c18" stroke-width="1" stroke-dasharray="1.1 1.15" opacity="1"/><path d="M760.70 623.50H1130.70" stroke="#3a2c18" stroke-width="1" stroke-dasharray="1.1 1.15" opacity="1"/><path d="M760.70 606.50H1130.70" stroke="#3a2c18" stroke-width="1" stroke-dasharray="1.1 1.15" opacity="1"/><path d="M767.50 598.50V770.00" stroke="#3e3e1c" stroke-width="1" stroke-dasharray="1.1 1.15" opacity="1"/><path d="M783.50 598.50V770.00" stroke="#3e3e1c" stroke-width="1" stroke-dasharray="1.1 1.15" opacity="1"/><path d="M798.50 598.50V770.00" stroke="#3e3e1c" stroke-width="1" stroke-dasharray="1.1 1.15" opacity="1"/><path d="M828.50 598.50V770.00" stroke="#3e3e1c" stroke-width="1" stroke-dasharray="1.1 1.15" opacity="1"/><path d="M843.50 598.50V770.00" stroke="#3e3e1c" stroke-width="1" stroke-dasharray="1.1 1.15" opacity="1"/><path d="M859.50 598.50V770.00" stroke="#3e3e1c" stroke-width="1" stroke-dasharray="1.1 1.15" opacity="1"/><path d="M874.50 598.50V770.00" stroke="#3e3e1c" stroke-width="1" stroke-dasharray="1.1 1.15" opacity="1"/><path d="M889.50 598.50V770.00" stroke="#3e3e1c" stroke-width="1" stroke-dasharray="1.1 1.15" opacity="1"/><path d="M920.50 598.50V770.00" stroke="#3e3e1c" stroke-width="1" stroke-dasharray="1.1 1.15" opacity="1"/><path d="M935.50 598.50V770.00" stroke="#3e3e1c" stroke-width="1" stroke-dasharray="1.1 1.15" opacity="1"/><path d="M950.50 598.50V770.00" stroke="#3e3e1c" stroke-width="1" stroke-dasharray="1.1 1.15" opacity="1"/><path d="M965.50 598.50V770.00" stroke="#3e3e1c" stroke-width="1" stroke-dasharray="1.1 1.15" opacity="1"/><path d="M980.50 598.50V770.00" stroke="#3e3e1c" stroke-width="1" stroke-dasharray="1.1 1.15" opacity="1"/><path d="M1011.50 598.50V770.00" stroke="#3e3e1c" stroke-width="1" stroke-dasharray="1.1 1.15" opacity="1"/><path d="M1026.50 598.50V770.00" stroke="#3e3e1c" stroke-width="1" stroke-dasharray="1.1 1.15" opacity="1"/><path d="M1041.50 598.50V770.00" stroke="#3e3e1c" stroke-width="1" stroke-dasharray="1.1 1.15" opacity="1"/><path d="M1057.50 598.50V770.00" stroke="#3e3e1c" stroke-width="1" stroke-dasharray="1.1 1.15" opacity="1"/><path d="M1072.50 598.50V770.00" stroke="#3e3e1c" stroke-width="1" stroke-dasharray="1.1 1.15" opacity="1"/><path d="M1102.50 598.50V770.00" stroke="#3e3e1c" stroke-width="1" stroke-dasharray="1.1 1.15" opacity="1"/><path d="M1117.50 598.50V770.00" stroke="#3e3e1c" stroke-width="1" stroke-dasharray="1.1 1.15" opacity="1"/></g><g opacity="0.12"><path d="M760.70 767.50H1130.70" stroke="#a4b0a4" stroke-width="1" stroke-dasharray="1.1 1.15" opacity="1"/><path d="M760.70 751.50H1130.70" stroke="#a4b0a4" stroke-width="1" stroke-dasharray="1.1 1.15" opacity="1"/><path d="M760.70 734.50H1130.70" stroke="#a4b0a4" stroke-width="1" stroke-dasharray="1.1 1.15" opacity="1"/><path d="M760.70 717.50H1130.70" stroke="#a4b0a4" stroke-width="1" stroke-dasharray="1.1 1.15" opacity="1"/><path d="M760.70 700.50H1130.70" stroke="#a4b0a4" stroke-width="1" stroke-dasharray="1.1 1.15" opacity="1"/><path d="M760.70 683.50H1130.70" stroke="#a4b0a4" stroke-width="1" stroke-dasharray="1.1 1.15" opacity="1"/><path d="M760.70 666.50H1130.70" stroke="#a4b0a4" stroke-width="1" stroke-dasharray="1.1 1.15" opacity="1"/><path d="M760.70 649.50H1130.70" stroke="#a4b0a4" stroke-width="1" stroke-dasharray="1.1 1.15" opacity="1"/><path d="M760.70 632.50H1130.70" stroke="#a4b0a4" stroke-width="1" stroke-dasharray="1.1 1.15" opacity="1"/><path d="M760.70 615.50H1130.70" stroke="#a4b0a4" stroke-width="1" stroke-dasharray="1.1 1.15" opacity="1"/><path d="M760.70 599.50H1130.70" stroke="#a4b0a4" stroke-width="1" stroke-dasharray="1.1 1.15" opacity="1"/><path d="M813.50 598.50V770.00" stroke="#8a9e8a" stroke-width="1" stroke-dasharray="1.1 1.15" opacity="1"/><path d="M904.50 598.50V770.00" stroke="#8a9e8a" stroke-width="1" stroke-dasharray="1.1 1.15" opacity="1"/><path d="M996.50 598.50V770.00" stroke="#8a9e8a" stroke-width="1" stroke-dasharray="1.1 1.15" opacity="1"/><path d="M1087.50 598.50V770.00" stroke="#8a9e8a" stroke-width="1" stroke-dasharray="1.1 1.15" opacity="1"/></g></g>
<path d="M760.50 596.20 L763.70 590.60 L766.90 596.20Z" fill="#fff"/>
<path d="M1129.70 762.70 L1135.70 766.00 L1129.70 769.30Z" fill="#fff"/>
<path d="M765.00 753.05 L766.00 747.78 L767.00 738.09 L768.00 735.15 L769.00 728.88 L770.00 730.25 L771.00 736.62 L772.00 733.16 L773.00 735.38 L774.00 730.21 L775.00 733.90 L776.00 747.39 L777.00 744.81 L778.00 756.58 L779.00 758.39 L780.00 754.21 L781.00 751.90 L782.00 747.51 L783.00 742.44 L784.00 745.56 L785.00 751.49 L786.00 753.29 L787.00 753.62 L788.00 754.13 L789.00 754.23 L790.00 753.84 L791.00 754.21 L792.00 754.94 L793.00 754.73 L794.00 754.91 L795.00 754.59 L796.00 753.40 L797.00 754.54 L798.00 755.26 L799.00 754.43 L800.00 753.75 L801.00 754.50 L802.00 753.98 L803.00 755.22 L804.00 755.27 L805.00 754.06 L806.00 755.30 L807.00 754.79 L808.00 754.62 L809.00 755.01 L810.00 755.33 L811.00 755.39 L812.00 753.47 L813.00 754.00 L814.00 753.47 L815.00 754.40 L816.00 753.47 L817.00 753.65 L818.00 754.15 L819.00 754.34 L820.00 755.53 L821.00 757.75 L822.00 759.10 L823.00 760.05 L824.00 762.32 L825.00 758.08 L826.00 756.73 L827.00 756.54 L828.00 756.10 L829.00 756.46 L830.00 757.49 L831.00 757.26 L832.00 757.76 L833.00 757.71 L834.00 755.84 L835.00 756.56 L836.00 755.80 L837.00 756.18 L838.00 757.13 L839.00 755.81 L840.00 755.90 L841.00 756.84 L842.00 757.60 L843.00 757.12 L844.00 757.43 L845.00 757.03 L846.00 757.60 L847.00 756.32 L848.00 755.78 L849.00 757.34 L850.00 756.19 L851.00 756.58 L852.00 756.79 L853.00 755.93 L854.00 757.00 L855.00 756.10 L856.00 757.70 L857.00 755.81 L858.00 757.40 L859.00 757.76 L860.00 755.98 L861.00 756.30 L862.00 756.40 L863.00 756.21 L864.00 757.00 L865.00 757.53 L866.00 757.12 L867.00 755.83 L868.00 755.78 L869.00 757.30 L870.00 756.87 L871.00 756.85 L872.00 755.93 L873.00 757.76 L874.00 756.09 L875.00 757.25 L876.00 756.65 L877.00 757.51 L878.00 757.60 L879.00 755.98 L880.00 756.75 L881.00 755.80 L882.00 756.01 L883.00 756.24 L884.00 757.62 L885.00 756.57 L886.00 755.75 L887.00 756.75 L888.00 757.63 L889.00 757.39 L890.00 755.76 L891.00 755.79 L892.00 757.27 L893.00 757.12 L894.00 756.32 L895.00 756.74 L896.00 757.39 L897.00 755.77 L898.00 756.51 L899.00 757.03 L900.00 757.72 L901.00 756.73 L902.00 756.24 L903.00 757.41 L904.00 757.59 L905.00 756.30 L906.00 755.90 L907.00 757.00 L908.00 756.81 L909.00 756.48 L910.00 756.71 L911.00 757.51 L912.00 757.21 L913.00 757.35 L914.00 757.37 L915.00 757.59 L916.00 756.97 L917.00 757.32 L918.00 756.05 L919.00 757.11 L920.00 755.81 L921.00 756.12 L922.00 757.22 L923.00 757.45 L924.00 756.61 L925.00 756.81 L926.00 756.68 L927.00 757.52 L928.00 756.69 L929.00 756.23 L930.00 756.86 L931.00 757.25 L932.00 755.90 L933.00 757.17 L934.00 755.75 L935.00 756.37 L936.00 757.76 L937.00 756.86 L938.00 757.46 L939.00 756.17 L940.00 756.91 L941.00 757.59 L942.00 755.84 L943.00 756.15 L944.00 756.53 L945.00 756.62 L946.00 757.62 L947.00 755.77 L948.00 757.16 L949.00 756.70 L950.00 756.77 L951.00 756.81 L952.00 757.73 L953.00 755.96 L954.00 756.77 L955.00 756.97 L956.00 756.02 L957.00 756.02 L958.00 756.31 L959.00 755.93 L960.00 757.06 L961.00 757.55 L962.00 757.06 L963.00 756.55 L964.00 756.17 L965.00 756.28 L966.00 756.49 L967.00 756.55 L968.00 756.42 L969.00 756.60 L970.00 757.74 L971.00 756.66 L972.00 757.21 L973.00 757.62 L974.00 756.53 L975.00 756.06 L976.00 757.19 L977.00 756.41 L978.00 756.50 L979.00 756.39 L980.00 756.00 L981.00 756.36 L982.00 757.61 L983.00 756.52 L984.00 757.06 L985.00 756.92 L986.00 756.40 L987.00 757.41 L988.00 756.50 L989.00 755.86 L990.00 757.61 L991.00 756.04 L992.00 756.33 L993.00 756.95 L994.00 756.21 L995.00 757.61 L996.00 757.44 L997.00 755.74 L998.00 756.51 L999.00 757.43 L1000.00 757.50 L1001.00 756.86 L1002.00 756.66 L1003.00 755.76 L1004.00 757.39 L1005.00 756.48 L1006.00 756.87 L1007.00 756.64 L1008.00 755.86 L1009.00 757.53 L1010.00 756.07 L1011.00 756.28 L1012.00 757.22 L1013.00 757.52 L1014.00 756.25 L1015.00 756.04 L1016.00 757.07 L1017.00 757.49 L1018.00 756.64 L1019.00 756.41 L1020.00 757.04 L1021.00 756.93 L1022.00 757.56 L1023.00 757.48 L1024.00 757.32 L1025.00 756.23 L1026.00 757.52 L1027.00 757.37 L1028.00 756.83 L1029.00 757.34 L1030.00 757.28 L1031.00 756.27 L1032.00 757.29 L1033.00 756.63 L1034.00 757.60 L1035.00 756.72 L1036.00 756.35 L1037.00 756.86 L1038.00 757.38 L1039.00 757.71 L1040.00 757.21 L1041.00 756.94 L1042.00 757.56 L1043.00 756.90 L1044.00 756.74 L1045.00 757.64 L1046.00 756.42 L1047.00 755.83 L1048.00 756.34 L1049.00 756.86 L1050.00 756.08 L1051.00 755.85 L1052.00 755.84 L1053.00 755.84 L1054.00 756.21 L1055.00 755.85 L1056.00 756.22 L1057.00 757.11 L1058.00 757.49 L1059.00 756.78 L1060.00 756.34 L1061.00 757.22 L1062.00 757.04 L1063.00 757.60 L1064.00 757.68 L1065.00 757.24 L1066.00 756.05 L1067.00 757.64 L1068.00 757.46 L1069.00 756.96 L1070.00 754.43 L1071.00 752.13 L1072.00 754.33 L1073.00 751.99 L1074.00 748.72 L1075.00 747.61 L1076.00 745.73 L1077.00 743.41 L1078.00 737.79 L1079.00 740.04 L1080.00 737.20 L1081.00 736.99 L1082.00 744.04 L1083.00 748.36 L1084.00 745.83 L1085.00 746.40 L1086.00 741.88 L1087.00 742.66 L1088.00 748.15 L1089.00 744.44 L1090.00 743.21 L1091.00 751.59 L1092.00 752.30 L1093.00 750.51 L1094.00 743.63 L1095.00 750.36 L1096.00 742.98 L1097.00 746.01 L1098.00 742.22 L1099.00 750.29 L1100.00 745.70 L1101.00 746.08 L1102.00 746.49 L1103.00 743.79 L1104.00 739.25 L1105.00 738.76 L1106.00 739.43 L1107.00 740.06 L1108.00 740.48 L1109.00 744.53 L1110.00 745.08 L1111.00 748.99 L1112.00 741.02 L1113.00 743.15 L1114.00 744.01 L1115.00 742.68 L1116.00 744.96 L1117.00 741.68 L1118.00 746.30 L1119.00 742.20 L1120.00 741.93 L1121.00 744.34 L1122.00 742.40 L1123.00 749.28 L1124.00 749.95 L1125.00 743.81 L1126.00 748.28 L1127.00 745.61 L1127.50 745.04" fill="none" stroke="#0000EE" stroke-width="1.0"/>
<text x="853.00" y="593.50" font-size="13.0" text-anchor="start" fill="#cacaca" stroke="#cacaca" stroke-width="0.12" >Processor 1 &#160;(1day)</text>
<text x="0" y="0" font-size="11.3" text-anchor="middle" dominant-baseline="central" fill="#c0c0c0" transform="translate(702.30 683.00) rotate(-90)" textLength="73" lengthAdjust="spacingAndGlyphs" >Percent (%)</text>
<text x="0" y="0" font-size="8.4" text-anchor="middle" dominant-baseline="central" fill="#323232" transform="translate(1151.90 638.00) rotate(90)" textLength="123" lengthAdjust="spacingAndGlyphs" font-family="Liberation Mono" font-weight="bold">RRDTOOL / TOBI OETIKER</text>
<text x="755.50" y="771.30" font-size="11.15" text-anchor="end" fill="#cacaca" stroke="#cacaca" stroke-width="0.12" >0</text>
<text x="755.50" y="754.41" font-size="11.15" text-anchor="end" fill="#cacaca" stroke="#cacaca" stroke-width="0.12" >10</text>
<text x="755.50" y="737.52" font-size="11.15" text-anchor="end" fill="#cacaca" stroke="#cacaca" stroke-width="0.12" >20</text>
<text x="755.50" y="720.63" font-size="11.15" text-anchor="end" fill="#cacaca" stroke="#cacaca" stroke-width="0.12" >30</text>
<text x="755.50" y="703.74" font-size="11.15" text-anchor="end" fill="#cacaca" stroke="#cacaca" stroke-width="0.12" >40</text>
<text x="755.50" y="686.85" font-size="11.15" text-anchor="end" fill="#cacaca" stroke="#cacaca" stroke-width="0.12" >50</text>
<text x="755.50" y="669.96" font-size="11.15" text-anchor="end" fill="#cacaca" stroke="#cacaca" stroke-width="0.12" >60</text>
<text x="755.50" y="653.07" font-size="11.15" text-anchor="end" fill="#cacaca" stroke="#cacaca" stroke-width="0.12" >70</text>
<text x="755.50" y="636.18" font-size="11.15" text-anchor="end" fill="#cacaca" stroke="#cacaca" stroke-width="0.12" >80</text>
<text x="755.50" y="619.29" font-size="11.15" text-anchor="end" fill="#cacaca" stroke="#cacaca" stroke-width="0.12" >90</text>
<text x="755.50" y="602.40" font-size="11.15" text-anchor="end" fill="#cacaca" stroke="#cacaca" stroke-width="0.12" >100</text>
<text x="813.80" y="781.00" font-size="11.15" text-anchor="middle" fill="#cacaca" stroke="#cacaca" stroke-width="0.12" >18:00</text>
<text x="905.10" y="781.00" font-size="11.15" text-anchor="middle" fill="#cacaca" stroke="#cacaca" stroke-width="0.12" >00:00</text>
<text x="996.40" y="781.00" font-size="11.15" text-anchor="middle" fill="#cacaca" stroke="#cacaca" stroke-width="0.12" >06:00</text>
<text x="1087.70" y="781.00" font-size="11.15" text-anchor="middle" fill="#cacaca" stroke="#cacaca" stroke-width="0.12" >12:00</text>
<rect x="704.50" y="789.80" width="9.4" height="9.4" fill="#a0a0a0"/><rect x="705.60" y="790.90" width="7.2" height="7.2" fill="#4444EE"/>
<text x="719.50" y="798.30" font-size="11.15" text-anchor="start" fill="#cacaca" stroke="#cacaca" stroke-width="0.12" >user</text>
<text x="789.80" y="798.30" font-size="11.15" text-anchor="start" fill="#cacaca" stroke="#cacaca" stroke-width="0.12" >Cur:</text>
<text x="857.10" y="798.30" font-size="11.15" text-anchor="end" fill="#cacaca" stroke="#cacaca" stroke-width="0.12" >9.0%</text>
<text x="886.10" y="798.30" font-size="11.15" text-anchor="start" fill="#cacaca" stroke="#cacaca" stroke-width="0.12" >Avg:</text>
<text x="953.60" y="798.30" font-size="11.15" text-anchor="end" fill="#cacaca" stroke="#cacaca" stroke-width="0.12" >7.5%</text>
<text x="982.30" y="798.30" font-size="11.15" text-anchor="start" fill="#cacaca" stroke="#cacaca" stroke-width="0.12" >Min:</text>
<text x="1049.90" y="798.30" font-size="11.15" text-anchor="end" fill="#cacaca" stroke="#cacaca" stroke-width="0.12" >4.3%</text>
<text x="1078.40" y="798.30" font-size="11.15" text-anchor="start" fill="#cacaca" stroke="#cacaca" stroke-width="0.12" >Max:</text>
<text x="1146.40" y="798.30" font-size="11.15" text-anchor="end" fill="#cacaca" stroke="#cacaca" stroke-width="0.12" >22.1%</text>
<rect x="704.50" y="803.20" width="9.4" height="9.4" fill="#a0a0a0"/><rect x="705.60" y="804.30" width="7.2" height="7.2" fill="#EEEE44"/>
<text x="719.50" y="811.70" font-size="11.15" text-anchor="start" fill="#cacaca" stroke="#cacaca" stroke-width="0.12" >nice</text>
<text x="789.80" y="811.70" font-size="11.15" text-anchor="start" fill="#cacaca" stroke="#cacaca" stroke-width="0.12" >Cur:</text>
<text x="857.10" y="811.70" font-size="11.15" text-anchor="end" fill="#cacaca" stroke="#cacaca" stroke-width="0.12" >0.0%</text>
<text x="886.10" y="811.70" font-size="11.15" text-anchor="start" fill="#cacaca" stroke="#cacaca" stroke-width="0.12" >Avg:</text>
<text x="953.60" y="811.70" font-size="11.15" text-anchor="end" fill="#cacaca" stroke="#cacaca" stroke-width="0.12" >0.0%</text>
<text x="982.30" y="811.70" font-size="11.15" text-anchor="start" fill="#cacaca" stroke="#cacaca" stroke-width="0.12" >Min:</text>
<text x="1049.90" y="811.70" font-size="11.15" text-anchor="end" fill="#cacaca" stroke="#cacaca" stroke-width="0.12" >0.0%</text>
<text x="1078.40" y="811.70" font-size="11.15" text-anchor="start" fill="#cacaca" stroke="#cacaca" stroke-width="0.12" >Max:</text>
<text x="1146.40" y="811.70" font-size="11.15" text-anchor="end" fill="#cacaca" stroke="#cacaca" stroke-width="0.12" >0.1%</text>
<rect x="704.50" y="816.60" width="9.4" height="9.4" fill="#a0a0a0"/><rect x="705.60" y="817.70" width="7.2" height="7.2" fill="#44EEEE"/>
<text x="719.50" y="825.10" font-size="11.15" text-anchor="start" fill="#cacaca" stroke="#cacaca" stroke-width="0.12" >system</text>
<text x="789.80" y="825.10" font-size="11.15" text-anchor="start" fill="#cacaca" stroke="#cacaca" stroke-width="0.12" >Cur:</text>
<text x="857.10" y="825.10" font-size="11.15" text-anchor="end" fill="#cacaca" stroke="#cacaca" stroke-width="0.12" >2.9%</text>
<text x="886.10" y="825.10" font-size="11.15" text-anchor="start" fill="#cacaca" stroke="#cacaca" stroke-width="0.12" >Avg:</text>
<text x="953.60" y="825.10" font-size="11.15" text-anchor="end" fill="#cacaca" stroke="#cacaca" stroke-width="0.12" >2.5%</text>
<text x="982.30" y="825.10" font-size="11.15" text-anchor="start" fill="#cacaca" stroke="#cacaca" stroke-width="0.12" >Min:</text>
<text x="1049.90" y="825.10" font-size="11.15" text-anchor="end" fill="#cacaca" stroke="#cacaca" stroke-width="0.12" >1.7%</text>
<text x="1078.40" y="825.10" font-size="11.15" text-anchor="start" fill="#cacaca" stroke="#cacaca" stroke-width="0.12" >Max:</text>
<text x="1146.40" y="825.10" font-size="11.15" text-anchor="end" fill="#cacaca" stroke="#cacaca" stroke-width="0.12" >5.5%</text>
<rect x="704.50" y="830.00" width="9.4" height="9.4" fill="#a0a0a0"/><rect x="705.60" y="831.10" width="7.2" height="7.2" fill="#EE44EE"/>
<text x="719.50" y="838.50" font-size="11.15" text-anchor="start" fill="#cacaca" stroke="#cacaca" stroke-width="0.12" >I/O wait</text>
<text x="789.80" y="838.50" font-size="11.15" text-anchor="start" fill="#cacaca" stroke="#cacaca" stroke-width="0.12" >Cur:</text>
<text x="857.10" y="838.50" font-size="11.15" text-anchor="end" fill="#cacaca" stroke="#cacaca" stroke-width="0.12" >0.1%</text>
<text x="886.10" y="838.50" font-size="11.15" text-anchor="start" fill="#cacaca" stroke="#cacaca" stroke-width="0.12" >Avg:</text>
<text x="953.60" y="838.50" font-size="11.15" text-anchor="end" fill="#cacaca" stroke="#cacaca" stroke-width="0.12" >0.1%</text>
<text x="982.30" y="838.50" font-size="11.15" text-anchor="start" fill="#cacaca" stroke="#cacaca" stroke-width="0.12" >Min:</text>
<text x="1049.90" y="838.50" font-size="11.15" text-anchor="end" fill="#cacaca" stroke="#cacaca" stroke-width="0.12" >0.0%</text>
<text x="1078.40" y="838.50" font-size="11.15" text-anchor="start" fill="#cacaca" stroke="#cacaca" stroke-width="0.12" >Max:</text>
<text x="1146.40" y="838.50" font-size="11.15" text-anchor="end" fill="#cacaca" stroke="#cacaca" stroke-width="0.12" >1.0%</text>
</g></svg>
<div style="position:absolute;left:0;top:838px;width:1388px;height:5px;background:#dee1e6"></div>
<div style="position:absolute;left:0;top:842px;width:1388px;height:1px;background:#555"></div>
</body></html>
